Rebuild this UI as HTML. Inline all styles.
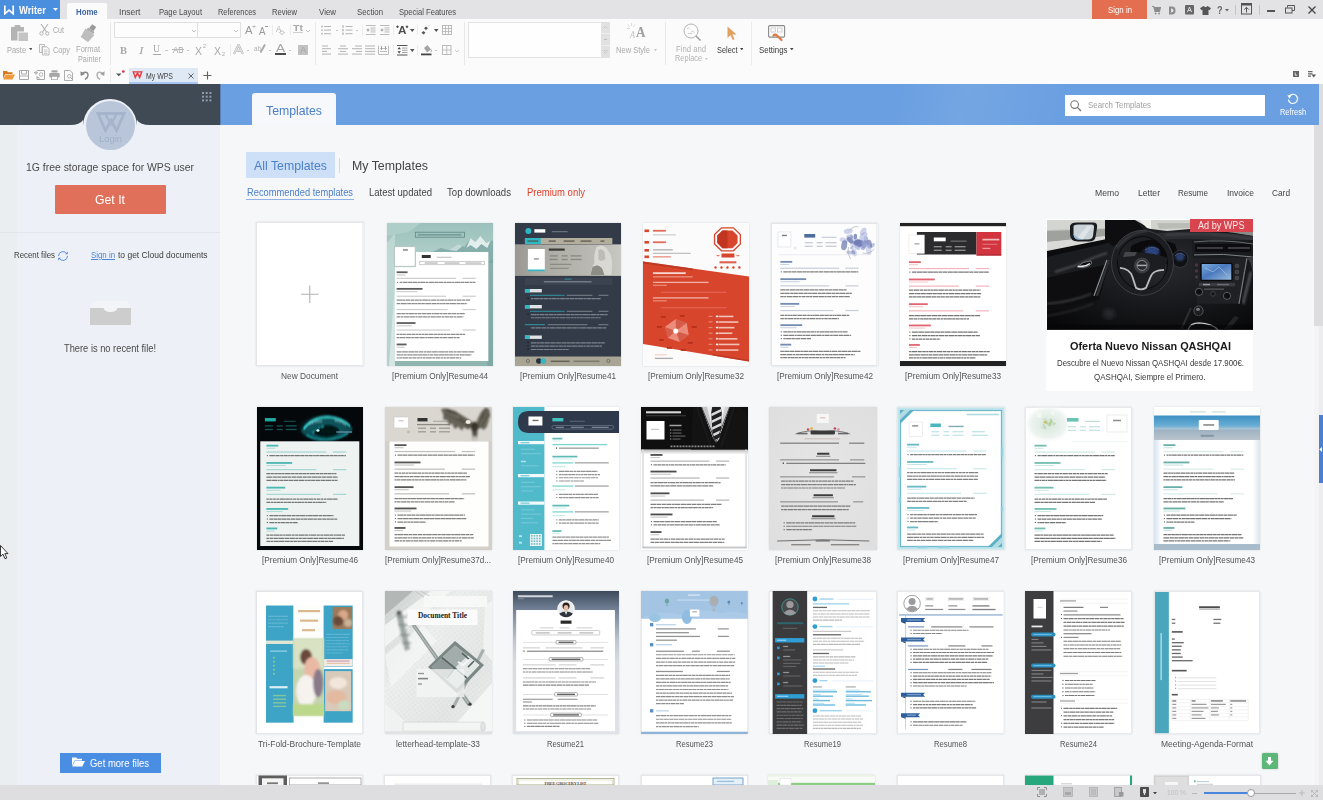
<!DOCTYPE html>
<html><head><meta charset="utf-8"><title>WPS Writer - My WPS</title>
<style>
html,body{margin:0;padding:0;}
body{width:1323px;height:800px;overflow:hidden;position:relative;background:#f6f7f9;font-family:"Liberation Sans",sans-serif;}
.b{position:absolute;display:block;}
.t{position:absolute;white-space:nowrap;transform-origin:0 50%;display:block;}
.th{position:absolute;display:block;overflow:hidden;}
</style></head>
<body>
<svg width="0" height="0" style="position:absolute"><defs><filter id="tb" x="-2%" y="-2%" width="104%" height="104%"><feGaussianBlur stdDeviation="0.8"/></filter></defs></svg>
<div class="b" style="left:0px;top:84px;width:220px;height:701px;background:#edf0f6;"></div>
<div class="b" style="left:0px;top:84px;width:17px;height:701px;background:#ebeef0;"></div>
<div class="b" style="left:0px;top:84px;width:221px;height:41px;background:#3f4a54;"></div>
<div class="b" style="left:83px;top:98.5px;width:54px;height:54px;background:#edf0f6;border-radius:50%;"></div>
<svg class="b" style="left:70px;top:112px;" width="80" height="14" viewBox="0 0 80 14"><path d="M0 13Q10 13 13 8V14H0Z M80 13Q70 13 67 8V14H80Z" fill="#edf0f6"/></svg>
<div class="b" style="left:85.5px;top:101px;width:49px;height:49px;background:#b9c6da;border-radius:50%;"></div>
<svg class="b" style="left:95.5px;top:111.5px;" width="30" height="21" viewBox="0 0 30 21"><path d="M2 1.5H28L20.5 18.5L15 8.5L9.5 18.5Z" fill="none" stroke="#a6b4cb" stroke-width="2.8" stroke-linejoin="miter"/><path d="M9 1.5L15 12L21 1.5" fill="none" stroke="#a6b4cb" stroke-width="2.4"/></svg>
<span class="t" style="left:98.5px;top:134.2px;font-size:9px;line-height:10.8px;color:#9fafc8;transform:scaleX(1.045);">Login</span>
<svg class="b" style="left:202px;top:91.5px;" width="10" height="10" viewBox="0 0 10 10"><rect x="0.0" y="0.0" width="2" height="2" fill="#8f9ba8"/><rect x="0.0" y="3.7" width="2" height="2" fill="#8f9ba8"/><rect x="0.0" y="7.4" width="2" height="2" fill="#8f9ba8"/><rect x="3.7" y="0.0" width="2" height="2" fill="#8f9ba8"/><rect x="3.7" y="3.7" width="2" height="2" fill="#8f9ba8"/><rect x="3.7" y="7.4" width="2" height="2" fill="#8f9ba8"/><rect x="7.4" y="0.0" width="2" height="2" fill="#8f9ba8"/><rect x="7.4" y="3.7" width="2" height="2" fill="#8f9ba8"/><rect x="7.4" y="7.4" width="2" height="2" fill="#8f9ba8"/></svg>
<span class="t" style="left:26.0px;top:161.2px;font-size:11.5px;line-height:13.8px;color:#4a4a4a;transform:scaleX(0.906);">1G free storage space for WPS user</span>
<div class="b" style="left:54.5px;top:184.5px;width:111.5px;height:29px;background:#e0705a;border-radius:1px;"></div>
<span class="t" style="left:95.0px;top:191.8px;font-size:13px;line-height:15.6px;color:#fff;transform:scaleX(0.944);">Get It</span>
<div class="b" style="left:0px;top:232px;width:220px;height:1px;background:#e2e5ea;"></div>
<span class="t" style="left:14.0px;top:250.2px;font-size:9px;line-height:10.8px;color:#3c3c3c;transform:scaleX(0.872);">Recent files</span>
<svg class="b" style="left:57px;top:249.5px;" width="12" height="12" viewBox="0 0 12 12"><path d="M1.5 6A4.5 4.5 0 0 1 10 4" fill="none" stroke="#5a8fe0" stroke-width="0.95"/><path d="M10.5 6A4.5 4.5 0 0 1 2 8" fill="none" stroke="#5a8fe0" stroke-width="0.95"/><path d="M8 4.2H10.8V1.5Z M4 7.8H1.2V10.5Z" fill="#5a8fe0"/></svg>
<span class="t" style="left:91.0px;top:250.2px;font-size:9px;line-height:10.8px;color:#4a86dc;transform:scaleX(0.872);text-decoration:underline;">Sign in</span>
<span class="t" style="left:117.5px;top:250.2px;font-size:9px;line-height:10.8px;color:#3c3c3c;transform:scaleX(0.942);">to get Cloud documents</span>
<svg class="b" style="left:90px;top:301px;" width="41" height="24" viewBox="0 0 41 24"><path d="M3.5 0H37.5L41 7V24H0V7Z" fill="#f3f4f7"/><path d="M0 7H13.5Q14.5 11 20.5 11Q26.5 11 27.5 7H41V24H0Z" fill="#cdcdcd"/></svg>
<span class="t" style="left:64.0px;top:342.6px;font-size:10px;line-height:12.0px;color:#4a4a4a;transform:scaleX(0.930);">There is no recent file!</span>
<div class="b" style="left:59.5px;top:752.5px;width:101.5px;height:20px;background:#4a8ee4;"></div>
<svg class="b" style="left:72px;top:757px;" width="13" height="10" viewBox="0 0 13 10"><path d="M0 0.5H4.3L5.3 1.7H10V3.5H2.4L0 9Z" fill="#fff"/><path d="M2.8 4H13L10.3 9.5H0.2Z" fill="#fff"/></svg>
<span class="t" style="left:90.0px;top:757.6px;font-size:10px;line-height:12.0px;color:#fff;transform:scaleX(0.948);">Get more files</span>
<svg class="b" style="left:0px;top:545px;" width="9" height="15" viewBox="0 0 9 15"><path d="M0.5 0.5V11.5L3 9.2L5 13.8L6.8 13L4.8 8.6H8Z" fill="#fff" stroke="#222" stroke-width="0.9"/></svg>
<div class="b" style="left:221px;top:84px;width:1098px;height:41px;background:#6a9fe1;"></div>
<div class="b" style="left:220px;top:84px;width:1px;height:41px;background:#5880b4;"></div>
<div class="b" style="left:900px;top:84px;width:160px;height:41px;background:linear-gradient(100deg,rgba(255,255,255,0) 0%,rgba(255,255,255,0.07) 40%,rgba(255,255,255,0.05) 60%,rgba(255,255,255,0) 100%);"></div>
<div class="b" style="left:252px;top:92.5px;width:83.5px;height:32.5px;background:#f6f8fb;border-radius:3px 3px 0 0;"></div>
<span class="t" style="left:266.0px;top:102.8px;font-size:13px;line-height:15.6px;color:#4a7fca;transform:scaleX(0.945);">Templates</span>
<div class="b" style="left:1065px;top:95px;width:200px;height:20.5px;background:#fff;"></div>
<svg class="b" style="left:1069.5px;top:99.5px;" width="12" height="12" viewBox="0 0 12 12"><circle cx="4.6" cy="4.6" r="3.8" fill="none" stroke="#777" stroke-width="1.1"/><path d="M7.4 7.4L11 11" stroke="#777" stroke-width="1.3"/></svg>
<span class="t" style="left:1088.0px;top:99.7px;font-size:9px;line-height:10.8px;color:#a0a0a0;transform:scaleX(0.877);">Search Templates</span>
<svg class="b" style="left:1287px;top:92.5px;" width="12" height="12" viewBox="0 0 12 12"><path d="M2.2 3.2A4.6 4.6 0 1 1 1.4 6.6" fill="none" stroke="#fff" stroke-width="1.2"/><path d="M0.4 2.2L4.3 2.5L2.5 5.8Z" fill="#fff"/></svg>
<span class="t" style="left:1280.0px;top:106.5px;font-size:8.5px;line-height:10.2px;color:#fff;transform:scaleX(0.874);">Refresh</span>
<div class="b" style="left:245.5px;top:152px;width:89.3px;height:25.8px;background:#cde0f8;"></div>
<span class="t" style="left:254.0px;top:157.5px;font-size:13.5px;line-height:16.2px;color:#4a7fca;transform:scaleX(0.912);">All Templates</span>
<div class="b" style="left:339px;top:158px;width:1px;height:15px;background:#d8d8dc;"></div>
<span class="t" style="left:352.0px;top:157.5px;font-size:13.5px;line-height:16.2px;color:#444;transform:scaleX(0.915);">My Templates</span>
<span class="t" style="left:247.0px;top:186.6px;font-size:10px;line-height:12.0px;color:#4a7fca;transform:scaleX(0.930);">Recommended templates</span>
<div class="b" style="left:246px;top:198.5px;width:108px;height:1px;background:#8fb2e6;"></div>
<span class="t" style="left:369.0px;top:186.6px;font-size:10px;line-height:12.0px;color:#444;transform:scaleX(0.952);">Latest updated</span>
<span class="t" style="left:447.0px;top:186.6px;font-size:10px;line-height:12.0px;color:#444;transform:scaleX(0.959);">Top downloads</span>
<span class="t" style="left:527.0px;top:186.6px;font-size:10px;line-height:12.0px;color:#e0402a;transform:scaleX(0.949);">Premium only</span>
<span class="t" style="left:1095.0px;top:186.9px;font-size:9.5px;line-height:11.4px;color:#444;transform:scaleX(0.909);">Memo</span>
<span class="t" style="left:1138.0px;top:186.9px;font-size:9.5px;line-height:11.4px;color:#444;transform:scaleX(0.906);">Letter</span>
<span class="t" style="left:1178.0px;top:186.9px;font-size:9.5px;line-height:11.4px;color:#444;transform:scaleX(0.848);">Resume</span>
<span class="t" style="left:1227.0px;top:186.9px;font-size:9.5px;line-height:11.4px;color:#444;transform:scaleX(0.897);">Invoice</span>
<span class="t" style="left:1272.0px;top:186.9px;font-size:9.5px;line-height:11.4px;color:#444;transform:scaleX(0.874);">Card</span>
<svg class="th" style="left:256px;top:222px;box-shadow:0 0 2px rgba(0,0,0,0.13);" width="107.5" height="144" viewBox="0 0 107 143" preserveAspectRatio="none"><rect x="0" y="0" width="107" height="143" fill="#fff" /><rect x="0.5" y="0.5" width="106" height="142" fill="none" stroke="#e6e6e8" stroke-width="1"/><path d="M53.5 63V80.4M44.8 71.7H62.2" stroke="#b4b4b4" stroke-width="1.1"/></svg>
<span class="t" style="left:280.8px;top:369.6px;font-size:9.5px;line-height:11.4px;color:#555;transform:scaleX(0.878);">New Document</span>
<svg class="th" style="left:387px;top:222.5px;box-shadow:0 0 2px rgba(0,0,0,0.13);" width="106.3" height="143" viewBox="0 0 107 143" preserveAspectRatio="none"><defs><linearGradient id="g44" x1="0" y1="0" x2="0" y2="1"><stop offset="0" stop-color="#9cc1bc"/><stop offset="0.3" stop-color="#b4d2cd"/><stop offset="1" stop-color="#8fb5b0"/></linearGradient></defs><rect x="0" y="0" width="107" height="143" fill="url(#g44)" /><path d="M0 20L8 10V143H0Z" fill="#c6ddd9" opacity="0.7"/><path d="M2 143L8 60V143Z" fill="#e6f0ee" opacity="0.7"/><path d="M34 0L22 9L0 13V0Z" fill="#b5d3ce" opacity="0.7"/><path d="M44 30L54 25L62 27L72 21L78 24L84 15L89 19L94 13L100 20L107 17V40H44Z" fill="#86aeaa"/><path d="M84 15L89 19L94 13L100 20L104 18L101 25L95 21L90 26L84 22L80 25Z" fill="#e2eeec"/><path d="M62 27L72 21L76 23L70 28Z" fill="#c3d9d6"/><path d="M101 40L107 36V143H101Z" fill="#7aa3a0" opacity="0.75"/><rect x="28.5" y="9.2" width="49.5" height="5" fill="none" stroke="#5d8783" stroke-width="0.8"/><rect x="31" y="10.95" width="44" height="1.7" fill="#5d8783" opacity="0.62"/><rect x="8" y="29" width="94" height="109" fill="#fff" /><rect x="7.5" y="23.5" width="21" height="20" fill="#fff" stroke="#b9c6c4" stroke-width="1.2"/><rect x="16" y="26.25" width="5" height="1.4" fill="#444" opacity="0.71"/><rect x="35" y="32" width="9" height="3" fill="#333" /><rect x="50" y="33.75" width="15" height="1.1" fill="#333" opacity="0.3"/><rect x="33" y="38.2" width="65" height="3.6" fill="none" stroke="#999" stroke-width="0.5"/><rect x="38" y="39.45" width="13" height="1.2" fill="#888" opacity="0.64"/><rect x="58" y="39.45" width="15" height="1.2" fill="#888" opacity="0.64"/><rect x="79" y="39.45" width="16" height="1.2" fill="#888" opacity="0.64"/><rect x="9.7" y="48.35" width="11" height="1.8" fill="#333" opacity="0.79"/><rect x="9.7" y="51.55" width="8.8" height="1" fill="#333" opacity="0.28"/><rect x="9.7" y="54.75" width="59.76" height="1.2" fill="#b0b0b0" opacity="0.64"/><rect x="76.1" y="54.75" width="13.28" height="1.2" fill="#b0b0b0" opacity="0.64"/><path d="M12.7 59.4h76.36" stroke="#555" stroke-width="1.25" opacity="0.67" stroke-dasharray="2.5 0.5 5.1 0.4 4.0 0.4 4.6 0.5 2.4 0.3 5.3 0.4"/><rect x="10.1" y="58.8" width="1.1" height="1.1" fill="#555" opacity="0.8"/><rect x="9.7" y="64.95" width="26" height="1.8" fill="#333" opacity="0.79"/><rect x="9.7" y="68.15" width="20.8" height="1" fill="#333" opacity="0.28"/><rect x="9.7" y="72.65" width="49.8" height="1.2" fill="#b0b0b0" opacity="0.64"/><rect x="76.1" y="72.65" width="13.28" height="1.2" fill="#b0b0b0" opacity="0.64"/><path d="M9.7 77.2h74.37" stroke="#555" stroke-width="1.25" opacity="0.67" stroke-dasharray="5.8 0.3 2.3 0.5 4.9 0.5 3.2 0.5 4.4 0.4 2.6 0.4"/><path d="M9.7 80.5h70.97" stroke="#555" stroke-width="1.25" opacity="0.67" stroke-dasharray="3.6 0.5 6.0 0.5 4.2 0.4 3.1 0.3 2.1 0.4 3.3 0.4"/><rect x="9.7" y="85.95" width="51.46" height="1.2" fill="#b0b0b0" opacity="0.64"/><rect x="76.1" y="85.95" width="13.28" height="1.2" fill="#b0b0b0" opacity="0.64"/><path d="M9.7 90.5h69.01" stroke="#555" stroke-width="1.25" opacity="0.67" stroke-dasharray="4.2 0.4 4.4 0.5 2.3 0.3 5.3 0.4 2.9 0.5 3.9 0.5"/><path d="M9.7 93.8h67.23" stroke="#555" stroke-width="1.25" opacity="0.67" stroke-dasharray="3.9 0.5 2.6 0.5 5.5 0.4 5.0 0.5 2.3 0.5 4.4 0.4"/><rect x="9.7" y="99.15" width="19" height="1.8" fill="#333" opacity="0.79"/><rect x="9.7" y="102.35" width="15.2" height="1" fill="#333" opacity="0.28"/><rect x="9.7" y="106.45" width="53.95" height="1.2" fill="#b0b0b0" opacity="0.64"/><rect x="76.1" y="106.45" width="13.28" height="1.2" fill="#b0b0b0" opacity="0.64"/><path d="M9.7 111.4h68.99" stroke="#555" stroke-width="1.25" opacity="0.67" stroke-dasharray="2.4 0.4 2.6 0.3 3.6 0.5 5.2 0.5 2.9 0.4 3.1 0.3"/><path d="M9.7 114.7h63.49" stroke="#555" stroke-width="1.25" opacity="0.67" stroke-dasharray="2.4 0.4 5.7 0.5 5.2 0.5 2.8 0.4 4.5 0.5 5.4 0.5"/><rect x="9.7" y="120.55" width="10" height="1.8" fill="#333" opacity="0.79"/><rect x="9.7" y="123.75" width="8" height="1" fill="#333" opacity="0.28"/><path d="M9.7 128.9h78.27" stroke="#555" stroke-width="1.25" opacity="0.67" stroke-dasharray="5.0 0.5 5.8 0.5 5.7 0.3 3.9 0.5 4.6 0.5 2.5 0.4"/><path d="M9.7 131.9h75.21" stroke="#555" stroke-width="1.25" opacity="0.67" stroke-dasharray="4.2 0.4 2.1 0.4 3.1 0.5 5.1 0.3 5.2 0.3 4.5 0.3"/><path d="M9.7 134.9h65.07" stroke="#555" stroke-width="1.25" opacity="0.67" stroke-dasharray="2.0 0.5 2.8 0.4 5.9 0.5 3.2 0.5 4.2 0.5 2.8 0.5"/></svg>
<span class="t" style="left:392.3px;top:369.6px;font-size:9.5px;line-height:11.4px;color:#555;transform:scaleX(0.862);">[Premium Only]Resume44</span>
<svg class="th" style="left:515px;top:222.5px;box-shadow:0 0 2px rgba(0,0,0,0.13);" width="106.3" height="143" viewBox="0 0 107 143" preserveAspectRatio="none"><defs><linearGradient id="h41" x1="0" y1="0" x2="1" y2="0"><stop offset="0" stop-color="#8a8984" stop-opacity="0.6"/><stop offset="0.5" stop-color="#bdbcb6" stop-opacity="0.3"/><stop offset="1" stop-color="#d4d4d0" stop-opacity="0.7"/></linearGradient></defs><rect x="0" y="0" width="107" height="143" fill="#343b48" /><circle cx="13.5" cy="8" r="3" fill="#2fb7c4"/><rect x="19.5" y="6.2" width="11" height="3.4" fill="#fff" /><rect x="37" y="8.05" width="16" height="1.2" fill="#8a919c" opacity="0.64"/><rect x="10" y="15" width="88" height="6" fill="#b3ae9c" /><rect x="10" y="15" width="16" height="6" fill="#2fb7c4" /><rect x="12.5" y="17.35" width="11" height="1.5" fill="#4a4a44" opacity="0.73"/><rect x="34" y="17.35" width="7" height="1.5" fill="#4a4a44" opacity="0.73"/><rect x="49" y="17.35" width="11" height="1.5" fill="#4a4a44" opacity="0.73"/><rect x="66" y="17.35" width="11" height="1.5" fill="#4a4a44" opacity="0.73"/><rect x="86" y="17.35" width="4" height="1.5" fill="#4a4a44" opacity="0.73"/><rect x="0" y="21.5" width="107" height="31.3" fill="#aeada6" /><rect x="0" y="21.5" width="107" height="31.3" fill="url(#h41)"/><rect x="13" y="26" width="17" height="21.5" fill="#fff" /><rect x="13" y="46.5" width="17" height="1.6" fill="#2fb7c4" /><rect x="19" y="35.25" width="5" height="1.3" fill="#555" opacity="0.68"/><rect x="34" y="25.5" width="16" height="2.2" fill="#3a3a36" /><rect x="35" y="32.25" width="8" height="1.3" fill="#5a5850" opacity="0.47"/><rect x="47" y="32.25" width="6" height="1.3" fill="#5a5850" opacity="0.47"/><rect x="56" y="32.25" width="11" height="1.3" fill="#5a5850" opacity="0.47"/><rect x="35" y="35.85" width="8" height="1.3" fill="#5a5850" opacity="0.47"/><rect x="47" y="35.85" width="6" height="1.3" fill="#5a5850" opacity="0.47"/><rect x="56" y="35.85" width="11" height="1.3" fill="#5a5850" opacity="0.47"/><rect x="35" y="40.75" width="22" height="1.2" fill="#77756a" opacity="0.64"/><rect x="35" y="44.75" width="19" height="1.2" fill="#77756a" opacity="0.64"/><path d="M82 24Q88 21 92 25L96 31Q99 38 97 52H76Q77 44 80 40Q79 32 82 24Z" fill="#d9d9d4"/><path d="M84 27Q88 25 90 29L91 36Q86 40 84 36Z" fill="#bdbdb6"/><path d="M78 44Q84 40 88 46L90 52H76Z" fill="#8d8d86"/><rect x="10" y="55" width="88" height="7" fill="#3b4350" /><rect x="29" y="58.15" width="48" height="1.3" fill="#9aa1ab" opacity="0.68"/><rect x="50" y="55.55" width="7" height="1.1" fill="#2fb7c4" opacity="0.6"/><rect x="10" y="66" width="17" height="3.4" fill="#dfe3e6" /><rect x="10" y="66" width="5" height="3.4" fill="#2fb7c4" /><rect x="15" y="71.75" width="35" height="1.2" fill="#2fb7c4" opacity="0.58"/><rect x="52" y="71.75" width="26" height="1.2" fill="#8d949e" opacity="0.64"/><rect x="84" y="71.75" width="10" height="1.2" fill="#8d949e" opacity="0.64"/><rect x="12.5" y="74.6" width="1.4" height="1.4" fill="#1e232c" /><path d="M16 75.55h70.2" stroke="#a4abb4" stroke-width="1.15" opacity="0.64" stroke-dasharray="2.5 0.5 5.1 0.4 4.0 0.4 4.6 0.5 2.4 0.3 5.3 0.4"/><rect x="10" y="82" width="17" height="3.4" fill="#dfe3e6" /><rect x="10" y="82" width="5" height="3.4" fill="#2fb7c4" /><rect x="15" y="87.75" width="35" height="1.2" fill="#2fb7c4" opacity="0.58"/><rect x="52" y="87.75" width="26" height="1.2" fill="#8d949e" opacity="0.64"/><rect x="84" y="87.75" width="10" height="1.2" fill="#8d949e" opacity="0.64"/><rect x="12.5" y="90.6" width="1.4" height="1.4" fill="#1e232c" /><path d="M16 91.55h77.66" stroke="#a4abb4" stroke-width="1.15" opacity="0.64" stroke-dasharray="5.8 0.3 2.3 0.5 4.9 0.5 3.2 0.5 4.4 0.4 2.6 0.4"/><path d="M16 94.75h70.2" stroke="#a4abb4" stroke-width="1.15" opacity="0.64" stroke-dasharray="3.6 0.5 6.0 0.5 4.2 0.4 3.1 0.3 2.1 0.4 3.3 0.4"/><rect x="10" y="101.05" width="20" height="1.2" fill="#2fb7c4" opacity="0.64"/><rect x="33" y="101.05" width="40" height="1.2" fill="#8d949e" opacity="0.64"/><rect x="84" y="101.05" width="10" height="1.2" fill="#8d949e" opacity="0.64"/><path d="M16 104.85h76" stroke="#a4abb4" stroke-width="1.15" opacity="0.64" stroke-dasharray="4.5 0.5 5.2 0.5 5.0 0.5 2.1 0.4 5.8 0.5 5.6 0.3"/><rect x="10" y="112.5" width="17" height="3.4" fill="#dfe3e6" /><rect x="10" y="112.5" width="5" height="3.4" fill="#2fb7c4" /><path d="M16 119.85h74.43" stroke="#a4abb4" stroke-width="1.15" opacity="0.64" stroke-dasharray="5.3 0.4 3.0 0.3 4.7 0.4 5.0 0.4 5.1 0.4 5.2 0.5"/><path d="M16 123.15h71.55" stroke="#a4abb4" stroke-width="1.15" opacity="0.64" stroke-dasharray="4.2 0.5 2.8 0.4 5.2 0.4 5.2 0.5 5.4 0.4 2.4 0.5"/><path d="M16 126.45h38" stroke="#a4abb4" stroke-width="1.15" opacity="0.64" stroke-dasharray="5.2 0.4 2.4 0.3 4.5 0.4 5.8 0.4 2.8 0.5 3.4 0.5"/><rect x="12.5" y="118.7" width="1.4" height="1.4" fill="#1e232c" /><rect x="12.5" y="122" width="1.4" height="1.4" fill="#1e232c" /><rect x="12.5" y="125.3" width="1.4" height="1.4" fill="#1e232c" /><rect x="0" y="133.5" width="107" height="9.5" fill="#a9a594" /><circle cx="13" cy="138" r="1.6" fill="none" stroke="#55534a" stroke-width="0.6"/><circle cx="24" cy="138" r="2.8" fill="#2b313c"/><circle cx="28.5" cy="138" r="2.8" fill="#2fb7c4"/><rect x="36" y="137.55" width="19" height="1.5" fill="#4e4c44" opacity="0.73"/><rect x="59" y="137.55" width="26" height="1.5" fill="#6a685e" opacity="0.73"/><circle cx="94" cy="138" r="1.6" fill="none" stroke="#55534a" stroke-width="0.6"/></svg>
<span class="t" style="left:520.3px;top:369.6px;font-size:9.5px;line-height:11.4px;color:#555;transform:scaleX(0.862);">[Premium Only]Resume41</span>
<svg class="th" style="left:643px;top:222.5px;box-shadow:0 0 2px rgba(0,0,0,0.13);" width="106.3" height="143" viewBox="0 0 107 143" preserveAspectRatio="none"><rect x="0" y="0" width="107" height="143" fill="#fbfbfb" /><path d="M0 38.5L107 53.5V138.5L0 121Z" fill="#d8452d"/><path d="M0 38.5L50 45.5V47.5L0 40.5Z" fill="#b8361f" opacity="0.8"/><path d="M70 131L107 137V138.5L70 132.5Z" fill="#b8361f" opacity="0.8"/><path d="M79 4.8H91L98 11.5V21L91 27.8H79L72 21V11.5Z" fill="#fbfbfb" stroke="#d9442c" stroke-width="1.3"/><path d="M80 7.5H90L95.2 12.6V20L90 25.2H80L74.8 20V12.6Z" fill="#d9442c"/><path d="M85 7.5V25.2H80L74.8 20V12.6L80 7.5Z" fill="#c23520"/><rect x="79" y="30.5" width="13" height="4" fill="#d9442c" /><rect x="74" y="31.95" width="3" height="1.3" fill="#d9442c" opacity="0.68"/><rect x="94" y="31.95" width="3" height="1.3" fill="#d9442c" opacity="0.68"/><rect x="77" y="38.25" width="17" height="2.1" fill="#d9442c" opacity="0.84"/><circle cx="73" cy="44.5" r="1.2" fill="#d9442c"/><circle cx="79" cy="44.5" r="1.2" fill="#d9442c"/><circle cx="85" cy="44.5" r="1.2" fill="#d9442c"/><circle cx="91" cy="44.5" r="1.2" fill="#d9442c"/><circle cx="97" cy="44.5" r="1.2" fill="#d9442c"/><rect x="1.5" y="6.5" width="4.5" height="2.6" fill="#d9442c" /><rect x="10" y="6.85" width="13" height="1.8" fill="#d9442c" opacity="0.79"/><rect x="1.5" y="18" width="4.5" height="2.6" fill="#d9442c" /><rect x="10" y="18.35" width="13" height="1.8" fill="#d9442c" opacity="0.79"/><rect x="1.5" y="26" width="4.5" height="2.6" fill="#d9442c" /><rect x="1.5" y="32.5" width="4.5" height="2.6" fill="#d9442c" /><rect x="10" y="11.25" width="23" height="1.2" fill="#b0b0b0" opacity="0.64"/><rect x="10" y="26.25" width="20" height="1.2" fill="#777" opacity="0.64"/><rect x="10" y="29.75" width="38" height="1.2" fill="#999" opacity="0.64"/><rect x="10" y="33.25" width="18" height="1.2" fill="#d9442c" opacity="0.64"/><rect x="10" y="49.25" width="33" height="1.8" fill="#fff" opacity="0.79"/><rect x="10" y="53.25" width="40" height="1.2" fill="#f5c5bb" opacity="0.64"/><rect x="10" y="58.75" width="56" height="1.3" fill="#fbe3de" opacity="0.68"/><rect x="10" y="61.75" width="14" height="1.2" fill="#f3b5a8" opacity="0.64"/><rect x="18" y="68.75" width="66" height="1.1" fill="#e8826f" opacity="0.6"/><rect x="10" y="74.25" width="56" height="1.3" fill="#fbe3de" opacity="0.68"/><rect x="10" y="77.25" width="14" height="1.2" fill="#f3b5a8" opacity="0.64"/><rect x="18" y="84.25" width="66" height="1.1" fill="#e8826f" opacity="0.6"/><path d="M33 96L44 100L46 112L37 119L25 115L22 104Z" fill="#ee9484" opacity="0.9"/><path d="M33 96L33 108L44 100Z M33 108L46 112L37 119Z M33 108L22 104L25 115Z" fill="#c23520" opacity="0.55"/><circle cx="33" cy="108" r="2.6" fill="#fff"/><rect x="18" y="93" width="5" height="1.8" fill="#b52f1b" /><rect x="37" y="92" width="5" height="1.8" fill="#b52f1b" /><rect x="14" y="103" width="5" height="1.8" fill="#b52f1b" /><rect x="49" y="103" width="5" height="1.8" fill="#b52f1b" /><rect x="16" y="116" width="5" height="1.8" fill="#b52f1b" /><rect x="45" y="119" width="5" height="1.8" fill="#b52f1b" /><rect x="24" y="124" width="5" height="1.8" fill="#b52f1b" /><rect x="38" y="126" width="5" height="1.8" fill="#b52f1b" /><rect x="66" y="92.75" width="4" height="1.2" fill="#f1a799" opacity="0.64"/><circle cx="74.5" cy="93.4" r="1.3" fill="#fff" stroke="#b52f1b" stroke-width="0.5"/><rect x="76" y="92.65" width="15" height="1.6" fill="#fbe9e5" opacity="0.76"/><rect x="66" y="98.35" width="4" height="1.2" fill="#f1a799" opacity="0.64"/><circle cx="74.5" cy="99.0" r="1.3" fill="#fff" stroke="#b52f1b" stroke-width="0.5"/><rect x="76" y="98.25" width="20" height="1.6" fill="#fbe9e5" opacity="0.76"/><rect x="66" y="103.95" width="4" height="1.2" fill="#f1a799" opacity="0.64"/><circle cx="74.5" cy="104.60000000000001" r="1.3" fill="#fff" stroke="#b52f1b" stroke-width="0.5"/><rect x="76" y="103.85" width="16" height="1.6" fill="#fbe9e5" opacity="0.76"/><rect x="66" y="109.55" width="4" height="1.2" fill="#f1a799" opacity="0.64"/><circle cx="74.5" cy="110.2" r="1.3" fill="#fff" stroke="#b52f1b" stroke-width="0.5"/><rect x="76" y="109.45" width="14" height="1.6" fill="#fbe9e5" opacity="0.76"/><rect x="66" y="115.15" width="4" height="1.2" fill="#f1a799" opacity="0.64"/><circle cx="74.5" cy="115.80000000000001" r="1.3" fill="#fff" stroke="#b52f1b" stroke-width="0.5"/><rect x="76" y="115.05" width="19" height="1.6" fill="#fbe9e5" opacity="0.76"/><rect x="66" y="120.75" width="4" height="1.2" fill="#f1a799" opacity="0.64"/><circle cx="74.5" cy="121.4" r="1.3" fill="#fff" stroke="#b52f1b" stroke-width="0.5"/><rect x="76" y="120.65" width="21" height="1.6" fill="#fbe9e5" opacity="0.76"/><rect x="66" y="126.35" width="4" height="1.2" fill="#f1a799" opacity="0.64"/><circle cx="74.5" cy="127.0" r="1.3" fill="#fff" stroke="#b52f1b" stroke-width="0.5"/><rect x="76" y="126.25" width="20" height="1.6" fill="#fbe9e5" opacity="0.76"/><rect x="12" y="131.25" width="12" height="1.2" fill="#f3b5a8" opacity="0.64"/><rect x="12" y="134.75" width="18" height="1.3" fill="#888" opacity="0.68"/></svg>
<span class="t" style="left:648.3px;top:369.6px;font-size:9.5px;line-height:11.4px;color:#555;transform:scaleX(0.862);">[Premium Only]Resume32</span>
<svg class="th" style="left:771.3px;top:222.5px;box-shadow:0 0 2px rgba(0,0,0,0.13);" width="106.3" height="143" viewBox="0 0 107 143" preserveAspectRatio="none"><rect x="0" y="0" width="107" height="143" fill="#fdfdfe" /><rect x="0.5" y="0.5" width="106" height="142" fill="none" stroke="#e3e5ea" stroke-width="1"/><ellipse cx="86.9" cy="20.8" rx="4.0" ry="2.4" fill="#8f9bd0" opacity="0.72" transform="rotate(24 86.9 20.8)"/><ellipse cx="87.3" cy="19.6" rx="3.6" ry="2.2" fill="#8f9bd0" opacity="0.39" transform="rotate(107 87.3 19.6)"/><ellipse cx="89.4" cy="19.5" rx="3.3" ry="2.0" fill="#6a77b0" opacity="0.41" transform="rotate(57 89.4 19.5)"/><ellipse cx="81.2" cy="13.2" rx="2.2" ry="1.3" fill="#6a77b0" opacity="0.53" transform="rotate(56 81.2 13.2)"/><ellipse cx="102.0" cy="22.4" rx="2.9" ry="1.8" fill="#8f9bd0" opacity="0.59" transform="rotate(146 102.0 22.4)"/><ellipse cx="83.0" cy="29.4" rx="2.6" ry="1.6" fill="#6a77b0" opacity="0.61" transform="rotate(48 83.0 29.4)"/><ellipse cx="81.5" cy="24.4" rx="2.2" ry="1.3" fill="#8f9bd0" opacity="0.63" transform="rotate(127 81.5 24.4)"/><ellipse cx="84.9" cy="13.7" rx="3.0" ry="1.8" fill="#6a77b0" opacity="0.77" transform="rotate(92 84.9 13.7)"/><ellipse cx="83.9" cy="29.3" rx="4.2" ry="2.5" fill="#8f9bd0" opacity="0.39" transform="rotate(76 83.9 29.3)"/><ellipse cx="73.3" cy="17.1" rx="4.3" ry="2.6" fill="#b7bfe4" opacity="0.62" transform="rotate(18 73.3 17.1)"/><ellipse cx="93.2" cy="22.8" rx="4.4" ry="2.6" fill="#8f9bd0" opacity="0.77" transform="rotate(107 93.2 22.8)"/><ellipse cx="99.0" cy="21.2" rx="4.4" ry="2.6" fill="#6a77b0" opacity="0.71" transform="rotate(80 99.0 21.2)"/><ellipse cx="84.8" cy="23.0" rx="3.6" ry="2.1" fill="#b7bfe4" opacity="0.38" transform="rotate(23 84.8 23.0)"/><ellipse cx="95.6" cy="16.8" rx="4.1" ry="2.4" fill="#8f9bd0" opacity="0.68" transform="rotate(79 95.6 16.8)"/><ellipse cx="77.8" cy="8.2" rx="4.6" ry="2.7" fill="#b7bfe4" opacity="0.67" transform="rotate(171 77.8 8.2)"/><ellipse cx="78.9" cy="29.5" rx="3.1" ry="1.9" fill="#6a77b0" opacity="0.4" transform="rotate(15 78.9 29.5)"/><ellipse cx="89.0" cy="22.8" rx="4.3" ry="2.6" fill="#b7bfe4" opacity="0.53" transform="rotate(127 89.0 22.8)"/><ellipse cx="94.7" cy="22.0" rx="3.7" ry="2.2" fill="#8f9bd0" opacity="0.72" transform="rotate(140 94.7 22.0)"/><ellipse cx="86.8" cy="24.6" rx="3.1" ry="1.9" fill="#b7bfe4" opacity="0.78" transform="rotate(38 86.8 24.6)"/><ellipse cx="90.2" cy="20.0" rx="4.1" ry="2.4" fill="#8f9bd0" opacity="0.57" transform="rotate(150 90.2 20.0)"/><ellipse cx="90.0" cy="22.5" rx="2.5" ry="1.5" fill="#6a77b0" opacity="0.52" transform="rotate(144 90.0 22.5)"/><ellipse cx="87.1" cy="20.6" rx="4.7" ry="2.8" fill="#6a77b0" opacity="0.64" transform="rotate(13 87.1 20.6)"/><ellipse cx="73.7" cy="22.2" rx="5.0" ry="3.0" fill="#6a77b0" opacity="0.71" transform="rotate(100 73.7 22.2)"/><ellipse cx="82.6" cy="22.2" rx="3.5" ry="2.1" fill="#b7bfe4" opacity="0.38" transform="rotate(17 82.6 22.2)"/><ellipse cx="95.5" cy="18.4" rx="2.4" ry="1.4" fill="#6a77b0" opacity="0.37" transform="rotate(0 95.5 18.4)"/><ellipse cx="79.7" cy="16.0" rx="4.9" ry="3.0" fill="#6a77b0" opacity="0.36" transform="rotate(53 79.7 16.0)"/><ellipse cx="86.1" cy="17.7" rx="2.8" ry="1.7" fill="#b7bfe4" opacity="0.62" transform="rotate(121 86.1 17.7)"/><ellipse cx="98.3" cy="27.0" rx="5.1" ry="3.0" fill="#b7bfe4" opacity="0.57" transform="rotate(79 98.3 27.0)"/><ellipse cx="89.5" cy="19.7" rx="3.1" ry="1.9" fill="#b7bfe4" opacity="0.57" transform="rotate(177 89.5 19.7)"/><ellipse cx="88.2" cy="19.3" rx="5.0" ry="3.0" fill="#6a77b0" opacity="0.51" transform="rotate(176 88.2 19.3)"/><ellipse cx="87.6" cy="18.9" rx="3.7" ry="2.2" fill="#6a77b0" opacity="0.74" transform="rotate(178 87.6 18.9)"/><ellipse cx="93.0" cy="13.2" rx="4.8" ry="2.9" fill="#b7bfe4" opacity="0.7" transform="rotate(136 93.0 13.2)"/><ellipse cx="79.7" cy="17.2" rx="4.0" ry="2.4" fill="#6a77b0" opacity="0.72" transform="rotate(49 79.7 17.2)"/><ellipse cx="92.8" cy="8.5" rx="4.3" ry="2.6" fill="#8f9bd0" opacity="0.44" transform="rotate(126 92.8 8.5)"/><path d="M78 8Q84 2 88 4M92 30Q98 32 104 26M80 36Q76 30 78 24" stroke="#8a97a0" stroke-width="0.5" fill="none"/><rect x="7" y="9" width="13" height="15" fill="#fff" stroke="#e0e3ea" stroke-width="0.8"/><rect x="11" y="11.75" width="5" height="1.4" fill="#444" opacity="0.71"/><circle cx="24.5" cy="25" r="1" fill="none" stroke="#bbb" stroke-width="0.4"/><rect x="33.5" y="11" width="11" height="3.6" fill="#4e6d99" /><rect x="51" y="13.75" width="15" height="1.1" fill="#9aa6bb" opacity="0.6"/><rect x="34" y="19.05" width="8" height="1.3" fill="#8a93a5" opacity="0.47"/><rect x="46" y="19.05" width="6" height="1.3" fill="#8a93a5" opacity="0.47"/><rect x="55" y="19.05" width="11" height="1.3" fill="#8a93a5" opacity="0.47"/><rect x="34" y="22.65" width="8" height="1.3" fill="#8a93a5" opacity="0.47"/><rect x="46" y="22.65" width="6" height="1.3" fill="#8a93a5" opacity="0.47"/><rect x="55" y="22.65" width="11" height="1.3" fill="#8a93a5" opacity="0.47"/><rect x="8" y="31.25" width="91" height="1" fill="#d8dce4" opacity="0.55"/><rect x="9.4" y="37.95" width="12" height="1.8" fill="#4e6d99" opacity="0.79"/><rect x="9.4" y="40.95" width="9" height="1" fill="#4e6d99" opacity="0.3"/><rect x="9.4" y="44.65" width="59.04" height="1.2" fill="#aab2c2" opacity="0.64"/><rect x="75" y="44.65" width="13.12" height="1.2" fill="#aab2c2" opacity="0.64"/><path d="M12.4 48.9h75.44" stroke="#444" stroke-width="1.25" opacity="0.67" stroke-dasharray="4.6 0.3 3.1 0.4 4.9 0.5 5.6 0.3 3.7 0.3 2.9 0.4"/><rect x="9.8" y="48.3" width="1.1" height="1.1" fill="#444" opacity="0.8"/><rect x="9.4" y="55.25" width="26" height="1.8" fill="#4e6d99" opacity="0.79"/><rect x="9.4" y="58.25" width="19.5" height="1" fill="#4e6d99" opacity="0.3"/><rect x="9.4" y="62.25" width="49.2" height="1.2" fill="#aab2c2" opacity="0.64"/><rect x="75" y="62.25" width="13.12" height="1.2" fill="#aab2c2" opacity="0.64"/><path d="M9.4 66.9h66.7" stroke="#444" stroke-width="1.25" opacity="0.67" stroke-dasharray="4.8 0.3 3.9 0.5 5.2 0.4 4.0 0.3 3.7 0.4 5.4 0.4"/><path d="M9.4 70.25h71.99" stroke="#444" stroke-width="1.25" opacity="0.67" stroke-dasharray="3.7 0.3 5.4 0.5 3.5 0.3 4.0 0.4 5.1 0.4 4.0 0.4"/><path d="M9.4 73.6h70.11" stroke="#444" stroke-width="1.25" opacity="0.67" stroke-dasharray="3.5 0.3 2.2 0.5 5.4 0.4 5.6 0.4 2.4 0.5 4.3 0.5"/><rect x="9.4" y="79.95" width="19" height="1.8" fill="#4e6d99" opacity="0.79"/><rect x="9.4" y="82.95" width="14.25" height="1" fill="#4e6d99" opacity="0.3"/><rect x="9.4" y="86.95" width="53.3" height="1.2" fill="#aab2c2" opacity="0.64"/><rect x="75" y="86.95" width="13.12" height="1.2" fill="#aab2c2" opacity="0.64"/><path d="M9.4 92.3h69.43" stroke="#444" stroke-width="1.25" opacity="0.67" stroke-dasharray="4.2 0.5 2.7 0.4 2.1 0.3 2.0 0.3 4.1 0.5 4.8 0.4"/><path d="M9.4 95.6h59.04" stroke="#444" stroke-width="1.25" opacity="0.67" stroke-dasharray="3.6 0.5 3.3 0.3 5.4 0.5 2.4 0.3 2.4 0.5 2.4 0.5"/><rect x="9.4" y="101.25" width="22" height="1.8" fill="#4e6d99" opacity="0.79"/><rect x="9.4" y="104.25" width="16.5" height="1" fill="#4e6d99" opacity="0.3"/><path d="M12.4 108.9h64.62" stroke="#444" stroke-width="1.25" opacity="0.67" stroke-dasharray="4.0 0.3 3.4 0.3 2.0 0.4 2.5 0.4 5.0 0.3 4.5 0.3"/><rect x="9.8" y="108.3" width="1.1" height="1.1" fill="#444" opacity="0.8"/><path d="M12.4 112.3h68.27" stroke="#444" stroke-width="1.25" opacity="0.67" stroke-dasharray="4.9 0.4 5.4 0.5 2.3 0.4 4.8 0.5 2.7 0.4 5.1 0.5"/><rect x="9.8" y="111.7" width="1.1" height="1.1" fill="#444" opacity="0.8"/><path d="M12.4 115.7h27.88" stroke="#444" stroke-width="1.25" opacity="0.67" stroke-dasharray="2.4 0.3 5.0 0.4 3.5 0.5 5.0 0.5 5.5 0.5 5.2 0.5"/><rect x="9.8" y="115.1" width="1.1" height="1.1" fill="#444" opacity="0.8"/><rect x="9.4" y="120.75" width="11" height="1.8" fill="#4e6d99" opacity="0.79"/><rect x="9.4" y="123.75" width="8.25" height="1" fill="#4e6d99" opacity="0.3"/><path d="M9.4 128.4h81.08" stroke="#444" stroke-width="1.25" opacity="0.67" stroke-dasharray="3.6 0.4 5.4 0.4 4.1 0.4 5.8 0.3 2.3 0.4 5.3 0.5"/><path d="M9.4 131.5h74.91" stroke="#444" stroke-width="1.25" opacity="0.67" stroke-dasharray="5.7 0.4 5.9 0.5 2.4 0.5 3.9 0.3 3.9 0.3 5.0 0.4"/><path d="M9.4 134.6h65.6" stroke="#444" stroke-width="1.25" opacity="0.67" stroke-dasharray="2.4 0.4 4.0 0.5 3.1 0.3 3.4 0.3 3.3 0.5 2.7 0.4"/></svg>
<span class="t" style="left:776.6px;top:369.6px;font-size:9.5px;line-height:11.4px;color:#555;transform:scaleX(0.862);">[Premium Only]Resume42</span>
<svg class="th" style="left:899.5px;top:222.5px;box-shadow:0 0 2px rgba(0,0,0,0.13);" width="106.3" height="143" viewBox="0 0 107 143" preserveAspectRatio="none"><rect x="0" y="0" width="107" height="143" fill="#fff" /><rect x="0" y="0" width="107" height="3.2" fill="#222" /><rect x="0" y="138" width="107" height="5" fill="#222" /><rect x="17" y="9" width="60" height="22.5" fill="#2b2b2e" /><rect x="77" y="9" width="25" height="23.5" fill="#d2353f" /><path d="M77 31.5V32.5H102V31.5Z" fill="#a3222c"/><rect x="9" y="12" width="15.5" height="18.5" fill="#fff" stroke="#ddd" stroke-width="0.5"/><rect x="14.5" y="20.25" width="5" height="1.2" fill="#666" opacity="0.64"/><rect x="34" y="14.5" width="12" height="3.8" fill="#fff" /><rect x="51" y="17.55" width="16" height="1.2" fill="#9a9a9a" opacity="0.64"/><rect x="34" y="23.05" width="8" height="1.3" fill="#d0d0d0" opacity="0.61"/><rect x="46" y="23.05" width="6" height="1.3" fill="#d0d0d0" opacity="0.61"/><rect x="55" y="23.05" width="11" height="1.3" fill="#d0d0d0" opacity="0.61"/><rect x="34" y="26.65" width="8" height="1.3" fill="#d0d0d0" opacity="0.61"/><rect x="46" y="26.65" width="6" height="1.3" fill="#d0d0d0" opacity="0.61"/><rect x="55" y="26.65" width="11" height="1.3" fill="#d0d0d0" opacity="0.61"/><rect x="83" y="15.75" width="17" height="1.7" fill="#fbe1e2" opacity="0.78"/><rect x="83" y="20.75" width="15" height="1.1" fill="#ee9aa0" opacity="0.6"/><rect x="83" y="24.75" width="8" height="1.3" fill="#f6c5c8" opacity="0.68"/><rect x="9" y="38.25" width="12" height="1.8" fill="#d93a4a" opacity="0.79"/><rect x="9" y="41.25" width="9" height="1" fill="#d93a4a" opacity="0.3"/><rect x="9" y="44.95" width="60.48" height="1.2" fill="#e88a94" opacity="0.64"/><rect x="76.2" y="44.95" width="13.44" height="1.2" fill="#e88a94" opacity="0.64"/><path d="M12 49.2h77.28" stroke="#333" stroke-width="1.25" opacity="0.67" stroke-dasharray="4.3 0.5 5.3 0.4 4.6 0.5 5.6 0.3 4.6 0.5 4.0 0.5"/><rect x="9.4" y="48.6" width="1.1" height="1.1" fill="#333" opacity="0.8"/><rect x="9" y="55.55" width="26" height="1.8" fill="#d93a4a" opacity="0.79"/><rect x="9" y="58.55" width="19.5" height="1" fill="#d93a4a" opacity="0.3"/><rect x="9" y="62.55" width="50.4" height="1.2" fill="#e88a94" opacity="0.64"/><rect x="76.2" y="62.55" width="13.44" height="1.2" fill="#e88a94" opacity="0.64"/><path d="M9 67.2h72.04" stroke="#333" stroke-width="1.25" opacity="0.67" stroke-dasharray="4.3 0.5 5.6 0.5 3.5 0.5 3.7 0.4 2.4 0.4 2.6 0.4"/><path d="M9 70.55h72.66" stroke="#333" stroke-width="1.25" opacity="0.67" stroke-dasharray="5.1 0.5 2.3 0.3 3.0 0.4 5.4 0.5 5.7 0.4 4.5 0.4"/><path d="M9 73.9h71.82" stroke="#333" stroke-width="1.25" opacity="0.67" stroke-dasharray="3.3 0.4 4.1 0.5 4.3 0.4 3.7 0.4 5.3 0.4 5.0 0.5"/><rect x="9" y="80.25" width="19" height="1.8" fill="#d93a4a" opacity="0.79"/><rect x="9" y="83.25" width="14.25" height="1" fill="#d93a4a" opacity="0.3"/><rect x="9" y="87.25" width="54.6" height="1.2" fill="#e88a94" opacity="0.64"/><rect x="76.2" y="87.25" width="13.44" height="1.2" fill="#e88a94" opacity="0.64"/><path d="M9 92.6h72.19" stroke="#333" stroke-width="1.25" opacity="0.67" stroke-dasharray="5.0 0.5 5.5 0.4 5.9 0.4 5.0 0.5 5.7 0.4 3.5 0.5"/><path d="M9 95.9h60.48" stroke="#333" stroke-width="1.25" opacity="0.67" stroke-dasharray="4.3 0.5 3.5 0.5 2.0 0.5 3.5 0.3 4.7 0.3 2.9 0.4"/><rect x="9" y="101.55" width="22" height="1.8" fill="#d93a4a" opacity="0.79"/><rect x="9" y="104.55" width="16.5" height="1" fill="#d93a4a" opacity="0.3"/><path d="M12 109.2h66.61" stroke="#333" stroke-width="1.25" opacity="0.67" stroke-dasharray="5.9 0.5 5.7 0.5 5.5 0.3 4.5 0.4 4.9 0.4 4.2 0.4"/><rect x="9.4" y="108.6" width="1.1" height="1.1" fill="#333" opacity="0.8"/><path d="M12 112.6h68.37" stroke="#333" stroke-width="1.25" opacity="0.67" stroke-dasharray="5.3 0.5 3.4 0.5 5.6 0.4 2.5 0.4 5.1 0.4 2.7 0.5"/><rect x="9.4" y="112" width="1.1" height="1.1" fill="#333" opacity="0.8"/><path d="M12 116h28.56" stroke="#333" stroke-width="1.25" opacity="0.67" stroke-dasharray="3.3 0.5 2.7 0.4 3.5 0.5 2.6 0.5 3.7 0.4 2.8 0.4"/><rect x="9.4" y="115.4" width="1.1" height="1.1" fill="#333" opacity="0.8"/><rect x="9" y="121.05" width="11" height="1.8" fill="#d93a4a" opacity="0.79"/><rect x="9" y="124.05" width="8.25" height="1" fill="#d93a4a" opacity="0.3"/><path d="M9 128.7h81.33" stroke="#333" stroke-width="1.25" opacity="0.67" stroke-dasharray="2.4 0.5 5.4 0.5 4.1 0.5 3.5 0.4 2.4 0.5 4.4 0.4"/><path d="M9 131.8h78.78" stroke="#333" stroke-width="1.25" opacity="0.67" stroke-dasharray="4.9 0.4 5.8 0.5 5.4 0.3 2.3 0.4 3.4 0.5 5.3 0.4"/><path d="M9 134.9h67.2" stroke="#333" stroke-width="1.25" opacity="0.67" stroke-dasharray="4.6 0.4 2.1 0.4 2.9 0.4 2.0 0.5 5.6 0.3 4.3 0.3"/></svg>
<span class="t" style="left:904.8px;top:369.6px;font-size:9.5px;line-height:11.4px;color:#555;transform:scaleX(0.862);">[Premium Only]Resume33</span>
<div class="b" style="left:1046px;top:219px;width:206.5px;height:171.5px;background:#fff;"></div>
<svg class="th" style="left:1046.5px;top:219.8px;" width="206" height="109.8" viewBox="0 0 206 110" preserveAspectRatio="none"><defs><radialGradient id="adg" cx="0.55" cy="0.4" r="0.75"><stop offset="0" stop-color="#2a2b2f"/><stop offset="0.5" stop-color="#18191c"/><stop offset="1" stop-color="#08080a"/></radialGradient><linearGradient id="nav" x1="0" y1="0" x2="1" y2="1"><stop offset="0" stop-color="#7fb4e4"/><stop offset="0.45" stop-color="#4a78bd"/><stop offset="1" stop-color="#9cc0dc"/></linearGradient><filter id="bl1"><feGaussianBlur stdDeviation="1.1"/></filter><filter id="bl2"><feGaussianBlur stdDeviation="2.5"/></filter></defs><rect x="0" y="0" width="206" height="110" fill="url(#adg)" /><path d="M0 0H58V21L0 33Z" fill="#c2c4c0"/><path d="M0 0H58V8L0 10Z" fill="#d4d5d1"/><path d="M0 11L58 9V17L0 22Z" fill="#9fa19d"/><path d="M0 22L58 16V21L0 33Z" fill="#d9dad7"/><path d="M0 31L60 19L62 23L0 37Z" fill="#0c0c0e"/><path d="M23 6Q24 2.5 30 2.5H46Q51 2.5 50 8L48.5 17Q48 21.5 42 21.5H31Q23 21.5 23 14Z" fill="#1b1c1f"/><path d="M26.5 6.5Q27 4.5 31 4.5H44.5Q47.5 4.5 47 8L46 16Q45.5 19.5 41 19.5H32Q26.5 19.5 26.5 14Z" fill="#c9d2d6"/><path d="M30 18L40 6H45L36 19.5Z" fill="#e6eaec" opacity="0.7"/><path d="M26.5 14Q30 19.5 38 19.5H32Q26.5 19.5 26.5 14Z" fill="#8fb8d8"/><path d="M58 0H88L100 14L66 26L58 21Z" fill="#0e0e10"/><path d="M88 0H143V9L120 11L104 9Z" fill="#d2d3cf"/><path d="M104 0V9L100 8L92 0Z" fill="#efefec"/><path d="M110 3H143V8L112 9Z" fill="#babcb8"/><path d="M143 0H206V16Q175 10 143 9Z" fill="#8a8c89"/><path d="M100 14Q150 8 206 16V26Q160 16 112 20Z" fill="#2c2d31"/><path d="M118 15Q160 11 206 19" stroke="#55575c" stroke-width="1" fill="none" filter="url(#bl1)"/><path d="M0 37L62 23L70 34L62 44L0 58Z" fill="#1b1c1f"/><path d="M0 58L62 44L52 80L0 92Z" fill="#0e0e10"/><path d="M8 52Q30 46 46 38L60 33" stroke="#7c7f85" stroke-width="1" fill="none" filter="url(#bl1)"/><path d="M30 47Q36 41 44 41Q46 44 42 46Q36 49 30 47Z" fill="#0a0a0b" stroke="#9a9da2" stroke-width="0.7"/><path d="M31 46.5Q38 47 43 43.5" stroke="#e4e6e8" stroke-width="1.3" fill="none"/><path d="M60 40L47 76" stroke="#8a8d92" stroke-width="1.3" fill="none"/><path d="M62 40L50 76" stroke="#2e2f33" stroke-width="2.4" fill="none"/><path d="M0 84Q24 82 44 74" stroke="#6a6d72" stroke-width="0.9" fill="none" filter="url(#bl1)"/><path d="M0 96Q26 92 46 84" stroke="#3a3c40" stroke-width="1" fill="none" filter="url(#bl1)"/><ellipse cx="62" cy="94" rx="6" ry="5" fill="#2a2b2f" filter="url(#bl2)"/><path d="M84 26Q104 14 128 24L134 44H82Z" fill="#0b0b0d"/><ellipse cx="104" cy="33" rx="10" ry="7.5" fill="#14161c"/><ellipse cx="105" cy="32" rx="7" ry="5" fill="#2d4a8a" opacity="0.9" filter="url(#bl1)"/><path d="M98 30Q105 25 112 30" stroke="#7f9fe0" stroke-width="0.8" fill="none" stroke-dasharray="0.8 0.8"/><ellipse cx="133" cy="39" rx="8" ry="8.5" fill="#101114" stroke="#3c3e44" stroke-width="0.8"/><ellipse cx="133" cy="37" rx="4.5" ry="4" fill="#35508c" opacity="0.75" filter="url(#bl1)"/><path d="M128 36Q133 31 138 36" stroke="#9ab0e0" stroke-width="0.7" fill="none" stroke-dasharray="0.7 0.7"/><ellipse cx="95.5" cy="43" rx="28" ry="29.5" fill="none" stroke="#1d1e21" stroke-width="6.4"/><ellipse cx="95.5" cy="43" rx="31" ry="32.5" fill="none" stroke="#4a4c51" stroke-width="0.7"/><ellipse cx="95.5" cy="43" rx="25" ry="26.4" fill="none" stroke="#08080a" stroke-width="0.9"/><path d="M70 28Q82 12 100 11" stroke="#55575c" stroke-width="1.2" fill="none" filter="url(#bl1)"/><path d="M70 36Q95 28 121 38L117 50Q108 48 104 56L99 68H89L85 56Q82 48 72 48Z" fill="#1c1d20"/><path d="M78 32L90 32L88 36L76 37Z" fill="#45474c"/><path d="M73 48Q83 49 85.5 57L89 68Q94 71 99 68L103.5 57Q106 50 117 50" stroke="#b9bbbf" stroke-width="1.8" fill="none" stroke-linejoin="round"/><circle cx="95" cy="45.5" r="8" fill="#3a3c40"/><circle cx="95" cy="45.5" r="5" fill="#2a2b2f" stroke="#8d9095" stroke-width="0.9"/><path d="M90.3 45.5H99.7" stroke="#a8abb0" stroke-width="1.5"/><path d="M145 20H206V38H146Z" fill="#1a1b1e"/><path d="M147 22Q176 19 206 24" stroke="#7a7d82" stroke-width="0.8" fill="none"/><path d="M148 24H204V32H148Z" fill="#0d0d0f"/><path d="M150 28H176M181 28H203" stroke="#3a3c41" stroke-width="2"/><path d="M147 35Q176 33 206 37" stroke="#8a8d92" stroke-width="0.9" fill="none"/><path d="M146 38H200L192 84H150Z" fill="#202125"/><rect x="154" y="43.5" width="31" height="17" fill="url(#nav)" rx="1"/><rect x="154" y="43.5" width="31" height="17" fill="none" stroke="#0a0a0c" stroke-width="1.4" rx="1"/><path d="M158 48L166 52L172 47L180 55" stroke="#cfe0f0" stroke-width="0.6" fill="none" opacity="0.8"/><circle cx="149.5" cy="45" r="1.7" fill="#4a3a3e"/><circle cx="190" cy="46" r="1.9" fill="#3c3e43" stroke="#6a6d72" stroke-width="0.4"/><circle cx="149.5" cy="51" r="1.7" fill="#4a3a3e"/><circle cx="190" cy="52" r="1.9" fill="#3c3e43" stroke="#6a6d72" stroke-width="0.4"/><circle cx="149.5" cy="57" r="1.7" fill="#4a3a3e"/><circle cx="190" cy="58" r="1.9" fill="#3c3e43" stroke="#6a6d72" stroke-width="0.4"/><rect x="152" y="63" width="36" height="3.4" fill="#3a3c41" /><rect x="156" y="64" width="7" height="1.4" fill="#9a9da2" /><rect x="170" y="64" width="12" height="1.4" fill="#6a6d72" /><circle cx="152" cy="72" r="3.6" fill="#0e0e10" stroke="#6a6d72" stroke-width="0.8"/><circle cx="180" cy="76" r="3.6" fill="#0e0e10" stroke="#6a6d72" stroke-width="0.8"/><circle cx="166" cy="74" r="2.4" fill="#17181b" stroke="#55575c" stroke-width="0.6"/><rect x="157" y="68.5" width="20" height="1.6" fill="#4a4c51" /><path d="M192 84L200 38" stroke="#77797e" stroke-width="1.2" fill="none"/><path d="M200 38Q206 44 206 60V36Z" fill="#3a3b3f"/><path d="M196 84L204 52" stroke="#55575c" stroke-width="2.4" fill="none" filter="url(#bl1)"/><ellipse cx="151.5" cy="91" rx="4.6" ry="5" fill="#1d1e21" stroke="#6a6d72" stroke-width="0.7"/><ellipse cx="151" cy="89.5" rx="2" ry="1.6" fill="#77797e"/><path d="M148 96L146 106H157L155 96Z" fill="#121215"/><path d="M141 110Q143 103 152 103Q166 104 171 110" stroke="#c4c6c9" stroke-width="1.3" fill="none"/><path d="M176 110L188 96L192 98L182 110Z" fill="#222327"/><path d="M134 110L144 88" stroke="#2e2f33" stroke-width="2" fill="none"/><rect x="0" y="105" width="206" height="5" fill="#050506" opacity="0.6"/></svg>
<div class="b" style="left:1189.5px;top:219px;width:63px;height:13.2px;background:#d8454f;"></div>
<span class="t" style="left:1198.0px;top:219.8px;font-size:10px;line-height:12.0px;color:#fbe9ea;transform:scaleX(0.909);">Ad by WPS</span>
<span class="t" style="left:1069.5px;top:339.8px;font-size:11px;line-height:13.2px;color:#1a1a1a;font-weight:bold;transform:scaleX(0.990);">Oferta Nuevo Nissan QASHQAI</span>
<span class="t" style="left:1056.5px;top:357.7px;font-size:9px;line-height:10.8px;color:#3a3a3a;transform:scaleX(0.871);">Descubre el Nuevo Nissan QASHQAI desde 17.900€.</span>
<span class="t" style="left:1093.5px;top:371.7px;font-size:9px;line-height:10.8px;color:#3a3a3a;transform:scaleX(0.888);">QASHQAI, Siempre el Primero.</span>
<svg class="th" style="left:256.5px;top:406.7px;box-shadow:0 0 2px rgba(0,0,0,0.13);" width="106" height="143" viewBox="0 0 107 143" preserveAspectRatio="none"><defs><radialGradient id="g46" cx="0.5" cy="0.5" r="0.5"><stop offset="0" stop-color="#38e0e0" stop-opacity="0.9"/><stop offset="0.55" stop-color="#129aa0" stop-opacity="0.6"/><stop offset="1" stop-color="#05080a" stop-opacity="0"/></radialGradient><filter id="bl46"><feGaussianBlur stdDeviation="0.8"/></filter></defs><rect x="0" y="0" width="107" height="143" fill="#05080a" /><ellipse cx="68" cy="21" rx="31" ry="15" fill="url(#g46)" opacity="0.55"/><g filter="url(#bl46)"><path d="M44 24Q50 9 70 8Q90 9 97 22Q90 33 68 34Q50 33 44 24Z" fill="#0a5a62" opacity="0.75"/><ellipse cx="70" cy="24" rx="13" ry="6.5" fill="#031418"/><path d="M47 22Q56 10 72 10Q86 11 94 19" stroke="#3fe6e6" stroke-width="1.3" fill="none"/><path d="M50 28Q58 33 70 33Q84 32 92 26" stroke="#1fb8c0" stroke-width="1.1" fill="none"/><path d="M52 17Q60 13 66 14M78 13Q86 14 90 18" stroke="#9ff6f6" stroke-width="0.8" fill="none"/><path d="M56 26Q60 20 68 19" stroke="#27c8d0" stroke-width="1" fill="none"/></g><ellipse cx="61.5" cy="23.5" rx="1.6" ry="1.3" fill="#d9ffff"/><path d="M80 25H96" stroke="#5f8fa0" stroke-width="2.2" opacity="0.7"/><rect x="8" y="11" width="11" height="3.4" fill="#1fa7a0" /><rect x="27" y="13.75" width="12" height="1.1" fill="#227f80" opacity="0.6"/><rect x="8" y="18.25" width="8" height="1.3" fill="#1b8a88" opacity="0.61"/><rect x="20" y="18.25" width="6" height="1.3" fill="#1b8a88" opacity="0.61"/><rect x="29" y="18.25" width="11" height="1.3" fill="#1b8a88" opacity="0.61"/><rect x="8" y="21.85" width="8" height="1.3" fill="#1b8a88" opacity="0.61"/><rect x="20" y="21.85" width="6" height="1.3" fill="#1b8a88" opacity="0.61"/><rect x="29" y="21.85" width="11" height="1.3" fill="#1b8a88" opacity="0.61"/><rect x="3.3" y="34.3" width="100" height="104.7" fill="#eef3f2" /><rect x="9.5" y="37.75" width="12" height="1.8" fill="#1fa7a0" opacity="0.79"/><rect x="9.5" y="40.75" width="9" height="1" fill="#1fa7a0" opacity="0.3"/><rect x="9.5" y="44.45" width="60.48" height="1.2" fill="#7fc4c0" opacity="0.64"/><rect x="76.7" y="44.45" width="13.44" height="1.2" fill="#7fc4c0" opacity="0.64"/><path d="M12.5 48.7h77.28" stroke="#3a3a3a" stroke-width="1.25" opacity="0.67" stroke-dasharray="5.6 0.4 4.4 0.5 2.9 0.4 4.3 0.5 2.1 0.3 3.3 0.5"/><rect x="9.9" y="48.1" width="1.1" height="1.1" fill="#3a3a3a" opacity="0.8"/><rect x="9.5" y="55.05" width="26" height="1.8" fill="#1fa7a0" opacity="0.79"/><rect x="9.5" y="58.05" width="19.5" height="1" fill="#1fa7a0" opacity="0.3"/><rect x="9.5" y="62.05" width="50.4" height="1.2" fill="#7fc4c0" opacity="0.64"/><rect x="76.7" y="62.05" width="13.44" height="1.2" fill="#7fc4c0" opacity="0.64"/><path d="M9.5 66.7h70.7" stroke="#3a3a3a" stroke-width="1.25" opacity="0.67" stroke-dasharray="3.7 0.4 3.4 0.4 3.6 0.3 3.7 0.3 2.4 0.4 5.9 0.4"/><path d="M9.5 70.05h72.17" stroke="#3a3a3a" stroke-width="1.25" opacity="0.67" stroke-dasharray="5.7 0.5 4.3 0.4 4.1 0.4 5.8 0.3 3.5 0.5 4.4 0.4"/><path d="M9.5 73.4h71.82" stroke="#3a3a3a" stroke-width="1.25" opacity="0.67" stroke-dasharray="5.0 0.4 5.4 0.5 2.1 0.4 3.5 0.4 4.2 0.4 4.6 0.5"/><rect x="9.5" y="79.75" width="19" height="1.8" fill="#1fa7a0" opacity="0.79"/><rect x="9.5" y="82.75" width="14.25" height="1" fill="#1fa7a0" opacity="0.3"/><rect x="9.5" y="86.75" width="54.6" height="1.2" fill="#7fc4c0" opacity="0.64"/><rect x="76.7" y="86.75" width="13.44" height="1.2" fill="#7fc4c0" opacity="0.64"/><path d="M9.5 92.1h72.18" stroke="#3a3a3a" stroke-width="1.25" opacity="0.67" stroke-dasharray="2.5 0.5 3.2 0.5 2.8 0.5 2.7 0.5 5.5 0.3 4.6 0.4"/><path d="M9.5 95.4h60.48" stroke="#3a3a3a" stroke-width="1.25" opacity="0.67" stroke-dasharray="4.0 0.5 2.6 0.4 2.3 0.3 4.0 0.3 2.5 0.5 3.2 0.4"/><rect x="9.5" y="101.05" width="22" height="1.8" fill="#1fa7a0" opacity="0.79"/><rect x="9.5" y="104.05" width="16.5" height="1" fill="#1fa7a0" opacity="0.3"/><path d="M12.5 108.7h64.74" stroke="#3a3a3a" stroke-width="1.25" opacity="0.67" stroke-dasharray="3.7 0.3 5.0 0.4 2.2 0.3 4.9 0.3 4.9 0.5 4.0 0.5"/><rect x="9.9" y="108.1" width="1.1" height="1.1" fill="#3a3a3a" opacity="0.8"/><path d="M12.5 112.1h68.56" stroke="#3a3a3a" stroke-width="1.25" opacity="0.67" stroke-dasharray="4.3 0.4 3.0 0.3 3.7 0.4 5.1 0.4 3.6 0.5 4.5 0.5"/><rect x="9.9" y="111.5" width="1.1" height="1.1" fill="#3a3a3a" opacity="0.8"/><path d="M12.5 115.5h28.56" stroke="#3a3a3a" stroke-width="1.25" opacity="0.67" stroke-dasharray="4.8 0.5 2.8 0.5 2.3 0.4 4.4 0.4 4.0 0.4 3.0 0.4"/><rect x="9.9" y="114.9" width="1.1" height="1.1" fill="#3a3a3a" opacity="0.8"/><rect x="9.5" y="120.55" width="11" height="1.8" fill="#1fa7a0" opacity="0.79"/><rect x="9.5" y="123.55" width="8.25" height="1" fill="#1fa7a0" opacity="0.3"/><path d="M9.5 128.2h79.78" stroke="#3a3a3a" stroke-width="1.25" opacity="0.67" stroke-dasharray="3.1 0.5 3.0 0.4 5.9 0.3 3.3 0.5 2.3 0.3 5.3 0.5"/><path d="M9.5 131.3h78.28" stroke="#3a3a3a" stroke-width="1.25" opacity="0.67" stroke-dasharray="2.8 0.5 3.3 0.5 4.4 0.5 5.7 0.5 4.8 0.5 5.2 0.5"/><path d="M9.5 134.4h67.2" stroke="#3a3a3a" stroke-width="1.25" opacity="0.67" stroke-dasharray="3.7 0.4 3.1 0.5 4.8 0.3 5.6 0.4 4.8 0.4 3.1 0.4"/></svg>
<span class="t" style="left:261.5px;top:553.7px;font-size:9.5px;line-height:11.4px;color:#555;transform:scaleX(0.862);">[Premium Only]Resume46</span>
<svg class="th" style="left:384.5px;top:406.7px;box-shadow:0 0 2px rgba(0,0,0,0.13);" width="107" height="143" viewBox="0 0 107 143" preserveAspectRatio="none"><defs><filter id="ble"><feGaussianBlur stdDeviation="0.8"/></filter></defs><rect x="0" y="0" width="107" height="143" fill="#d3d0ca" /><rect x="0" y="0" width="107" height="34" fill="#dad7d1" /><g filter="url(#ble)"><path d="M56 2L62 1.5L70 4L78 9L86 14L88 19L83 22.5L79 20L77 23.5L73 19.5L70 22L67 16.5L64 18L62 12.5L58.5 13L58.5 7.5Z" fill="#58544a"/><path d="M100.5 0.5L104 2L105.2 8L103.5 14L101.5 20L98.5 23L96 20.5L93.5 22L91 18L92.5 12L96 5Z" fill="#58544a"/><path d="M58 4L84 16M60 9L80 19M66 5L86 17M64 14L78 21M98 3L92 17M102 4L95 19M104 10L98 21" stroke="#989284" stroke-width="0.8" opacity="0.85"/><path d="M62 3L72 7M74 11L82 16M99 6L97 12" stroke="#2e2b25" stroke-width="1.1" opacity="0.8"/><ellipse cx="89.6" cy="20" rx="3.6" ry="5.6" fill="#37342c"/><path d="M87 24L92.6 24L91.8 31L89.6 28L88 31.5Z" fill="#4f4b42"/><path d="M88 31L88.5 34M91 30.5L92 33.5" stroke="#6a655c" stroke-width="0.6"/></g><ellipse cx="83.2" cy="15" rx="2.6" ry="2" fill="#efece6"/><path d="M80.6 15.2L79.2 16.2L81 16.4Z" fill="#b8a060"/><rect x="4.5" y="34.5" width="99" height="105" fill="#fefefd" /><rect x="9" y="10" width="14.5" height="11" fill="#fff" stroke="#c4c2be" stroke-width="0.5"/><rect x="13.5" y="13.25" width="5" height="1.1" fill="#999" opacity="0.6"/><circle cx="23.5" cy="25" r="1" fill="none" stroke="#888" stroke-width="0.4"/><rect x="32.5" y="11" width="10" height="3.4" fill="#333" /><rect x="48" y="13.75" width="15" height="1.1" fill="#8a8782" opacity="0.6"/><rect x="32" y="16.95" width="33" height="1.3" fill="#6a6762" opacity="0.68"/><rect x="33" y="20.55" width="8" height="1.3" fill="#77746e" opacity="0.61"/><rect x="45" y="20.55" width="6" height="1.3" fill="#77746e" opacity="0.61"/><rect x="54" y="20.55" width="11" height="1.3" fill="#77746e" opacity="0.61"/><rect x="33" y="24.15" width="8" height="1.3" fill="#77746e" opacity="0.61"/><rect x="45" y="24.15" width="6" height="1.3" fill="#77746e" opacity="0.61"/><rect x="54" y="24.15" width="11" height="1.3" fill="#77746e" opacity="0.61"/><rect x="9.5" y="37.25" width="12" height="1.8" fill="#2a2a2a" opacity="0.79"/><rect x="9.5" y="40.25" width="9" height="1" fill="#2a2a2a" opacity="0.3"/><rect x="9.5" y="43.95" width="60.48" height="1.2" fill="#999" opacity="0.64"/><rect x="76.7" y="43.95" width="13.44" height="1.2" fill="#999" opacity="0.64"/><path d="M12.5 48.2h77.28" stroke="#444" stroke-width="1.25" opacity="0.67" stroke-dasharray="4.7 0.3 4.5 0.5 5.3 0.4 4.5 0.4 4.1 0.3 4.7 0.5"/><rect x="9.9" y="47.6" width="1.1" height="1.1" fill="#444" opacity="0.8"/><rect x="9.5" y="54.55" width="26" height="1.8" fill="#2a2a2a" opacity="0.79"/><rect x="9.5" y="57.55" width="19.5" height="1" fill="#2a2a2a" opacity="0.3"/><rect x="9.5" y="61.55" width="50.4" height="1.2" fill="#999" opacity="0.64"/><rect x="76.7" y="61.55" width="13.44" height="1.2" fill="#999" opacity="0.64"/><path d="M9.5 66.2h72.87" stroke="#444" stroke-width="1.25" opacity="0.67" stroke-dasharray="3.7 0.5 2.3 0.5 3.5 0.5 2.7 0.4 3.1 0.4 4.9 0.4"/><path d="M9.5 69.55h75.32" stroke="#444" stroke-width="1.25" opacity="0.67" stroke-dasharray="4.3 0.4 4.5 0.4 2.6 0.4 2.0 0.4 4.1 0.5 5.8 0.5"/><path d="M9.5 72.9h71.82" stroke="#444" stroke-width="1.25" opacity="0.67" stroke-dasharray="2.1 0.4 3.0 0.5 5.6 0.3 5.1 0.4 2.7 0.4 3.7 0.4"/><rect x="9.5" y="79.25" width="19" height="1.8" fill="#2a2a2a" opacity="0.79"/><rect x="9.5" y="82.25" width="14.25" height="1" fill="#2a2a2a" opacity="0.3"/><rect x="9.5" y="86.25" width="54.6" height="1.2" fill="#999" opacity="0.64"/><rect x="76.7" y="86.25" width="13.44" height="1.2" fill="#999" opacity="0.64"/><path d="M9.5 91.6h69.63" stroke="#444" stroke-width="1.25" opacity="0.67" stroke-dasharray="3.5 0.3 3.6 0.4 4.6 0.4 3.4 0.3 5.3 0.4 5.5 0.3"/><path d="M9.5 94.9h60.48" stroke="#444" stroke-width="1.25" opacity="0.67" stroke-dasharray="2.0 0.4 3.7 0.5 5.5 0.4 3.2 0.5 3.8 0.4 3.3 0.3"/><rect x="9.5" y="100.55" width="22" height="1.8" fill="#2a2a2a" opacity="0.79"/><rect x="9.5" y="103.55" width="16.5" height="1" fill="#2a2a2a" opacity="0.3"/><path d="M12.5 108.2h67.53" stroke="#444" stroke-width="1.25" opacity="0.67" stroke-dasharray="5.5 0.3 3.1 0.5 4.7 0.3 3.4 0.5 3.8 0.3 5.6 0.3"/><rect x="9.9" y="107.6" width="1.1" height="1.1" fill="#444" opacity="0.8"/><path d="M12.5 111.6h68.84" stroke="#444" stroke-width="1.25" opacity="0.67" stroke-dasharray="4.5 0.4 5.8 0.3 4.4 0.3 5.9 0.3 4.1 0.5 5.5 0.3"/><rect x="9.9" y="111" width="1.1" height="1.1" fill="#444" opacity="0.8"/><path d="M12.5 115h28.56" stroke="#444" stroke-width="1.25" opacity="0.67" stroke-dasharray="5.5 0.5 3.3 0.5 2.9 0.3 2.7 0.4 5.3 0.4 6.0 0.5"/><rect x="9.9" y="114.4" width="1.1" height="1.1" fill="#444" opacity="0.8"/><rect x="9.5" y="120.05" width="11" height="1.8" fill="#2a2a2a" opacity="0.79"/><rect x="9.5" y="123.05" width="8.25" height="1" fill="#2a2a2a" opacity="0.3"/><path d="M9.5 127.7h78.8" stroke="#444" stroke-width="1.25" opacity="0.67" stroke-dasharray="2.9 0.3 5.7 0.4 4.8 0.4 3.5 0.5 4.3 0.5 4.6 0.5"/><path d="M9.5 130.8h79.29" stroke="#444" stroke-width="1.25" opacity="0.67" stroke-dasharray="2.6 0.3 4.9 0.3 4.6 0.5 2.2 0.5 2.1 0.5 5.4 0.4"/><path d="M9.5 133.9h67.2" stroke="#444" stroke-width="1.25" opacity="0.67" stroke-dasharray="4.9 0.5 2.5 0.5 2.5 0.5 4.8 0.5 2.2 0.4 4.5 0.5"/></svg>
<span class="t" style="left:385.0px;top:553.7px;font-size:9.5px;line-height:11.4px;color:#555;transform:scaleX(0.851);">[Premium Only]Resume37d...</span>
<svg class="th" style="left:512.7px;top:406.7px;box-shadow:0 0 2px rgba(0,0,0,0.13);" width="106.7" height="143" viewBox="0 0 107 143" preserveAspectRatio="none"><rect x="0" y="0" width="107" height="143" fill="#fff" /><rect x="0" y="0" width="31.5" height="143" fill="#50bacb" /><path d="M16 4H107V26H16Q5 26 5 15Q5 4 16 4Z" fill="#2e3a4b"/><rect x="15.5" y="9.5" width="14" height="9" fill="#fff" /><rect x="19.5" y="12.75" width="6" height="1.4" fill="#333" opacity="0.71"/><rect x="39.5" y="11" width="11" height="3.4" fill="#43c3c0" /><rect x="57" y="13.75" width="15" height="1.1" fill="#6f8296" opacity="0.6"/><rect x="39" y="18.5" width="62" height="3.6" fill="none" stroke="#8492a4" stroke-width="0.5" rx="1.8"/><rect x="43" y="19.75" width="8" height="1.2" fill="#aab4c0" opacity="0.64"/><rect x="58" y="19.75" width="13" height="1.2" fill="#aab4c0" opacity="0.64"/><rect x="79" y="19.75" width="17" height="1.2" fill="#aab4c0" opacity="0.64"/><rect x="5" y="34" width="26.5" height="3.2" fill="#f4fbfc" /><rect x="7.5" y="34.95" width="9" height="1.4" fill="#50bacb" opacity="0.71"/><rect x="8" y="41.75" width="14" height="1.2" fill="#86cfdb" opacity="0.64"/><rect x="8" y="46.05" width="20" height="1.2" fill="#86cfdb" opacity="0.64"/><rect x="5" y="67" width="26.5" height="3.2" fill="#f4fbfc" /><rect x="7.5" y="67.95" width="9" height="1.4" fill="#50bacb" opacity="0.71"/><rect x="8" y="74.75" width="14" height="1.2" fill="#86cfdb" opacity="0.64"/><rect x="8" y="79.05" width="20" height="1.2" fill="#86cfdb" opacity="0.64"/><rect x="8" y="83.35" width="12" height="1.2" fill="#86cfdb" opacity="0.64"/><rect x="5" y="94.5" width="26.5" height="3.2" fill="#f4fbfc" /><rect x="7.5" y="95.45" width="9" height="1.4" fill="#50bacb" opacity="0.71"/><rect x="8" y="102.25" width="14" height="1.2" fill="#86cfdb" opacity="0.64"/><rect x="8" y="106.55" width="20" height="1.2" fill="#86cfdb" opacity="0.64"/><rect x="8" y="110.85" width="12" height="1.2" fill="#86cfdb" opacity="0.64"/><rect x="8" y="115.15" width="17" height="1.2" fill="#86cfdb" opacity="0.64"/><rect x="8" y="53.75" width="5" height="1.5" fill="#d8f1f5" opacity="0.73"/><rect x="8" y="58.25" width="18" height="1.2" fill="#86cfdb" opacity="0.64"/><rect x="17" y="127" width="12" height="12" fill="#e8f5f8" /><rect x="18" y="128" width="1.6" height="1.6" fill="#7ab8c4" /><rect x="20.7" y="128" width="1.6" height="1.6" fill="#7ab8c4" /><rect x="23.4" y="128" width="1.6" height="1.6" fill="#7ab8c4" /><rect x="26.1" y="128" width="1.6" height="1.6" fill="#7ab8c4" /><rect x="18" y="130.7" width="1.6" height="1.6" fill="#7ab8c4" /><rect x="20.7" y="130.7" width="1.6" height="1.6" fill="#7ab8c4" /><rect x="23.4" y="130.7" width="1.6" height="1.6" fill="#7ab8c4" /><rect x="26.1" y="130.7" width="1.6" height="1.6" fill="#7ab8c4" /><rect x="18" y="133.4" width="1.6" height="1.6" fill="#7ab8c4" /><rect x="20.7" y="133.4" width="1.6" height="1.6" fill="#7ab8c4" /><rect x="23.4" y="133.4" width="1.6" height="1.6" fill="#7ab8c4" /><rect x="26.1" y="133.4" width="1.6" height="1.6" fill="#7ab8c4" /><rect x="18" y="136.1" width="1.6" height="1.6" fill="#7ab8c4" /><rect x="20.7" y="136.1" width="1.6" height="1.6" fill="#7ab8c4" /><rect x="23.4" y="136.1" width="1.6" height="1.6" fill="#7ab8c4" /><rect x="26.1" y="136.1" width="1.6" height="1.6" fill="#7ab8c4" /><rect x="6" y="128.25" width="3" height="1.9" fill="#d8f1f5" opacity="0.81"/><rect x="6" y="134.75" width="3" height="1.9" fill="#d8f1f5" opacity="0.81"/><rect x="39.5" y="30.75" width="10" height="1.7" fill="#2fa8a0" opacity="0.78"/><rect x="39.5" y="33.55" width="8" height="0.9" fill="#2fa8a0" opacity="0.24"/><rect x="39.5" y="36.95" width="55" height="1.3" fill="#43c3b8" opacity="0.68"/><rect x="43" y="40.5" width="1.2" height="1.2" fill="#333" /><rect x="46" y="40.55" width="40" height="1.2" fill="#555" opacity="0.64"/><rect x="39.5" y="48.75" width="25" height="1.7" fill="#2fa8a0" opacity="0.78"/><rect x="39.5" y="51.55" width="20" height="0.9" fill="#2fa8a0" opacity="0.24"/><rect x="39.5" y="55.25" width="21" height="1.3" fill="#43c3b8" opacity="0.68"/><rect x="62" y="55.25" width="34" height="1.2" fill="#666" opacity="0.64"/><rect x="39.5" y="59.05" width="13" height="1.1" fill="#9fdcd6" opacity="0.6"/><path d="M46 64.35h38.75" stroke="#555" stroke-width="1.15" opacity="0.64" stroke-dasharray="5.8 0.3 4.8 0.3 3.0 0.5 2.8 0.5 3.8 0.4 4.0 0.3"/><rect x="43.4" y="63.8" width="1.1" height="1.1" fill="#555" opacity="0.8"/><path d="M46 67.55h41.29" stroke="#555" stroke-width="1.15" opacity="0.64" stroke-dasharray="2.4 0.4 2.1 0.4 3.6 0.5 3.5 0.3 3.0 0.5 2.3 0.5"/><rect x="43.4" y="67" width="1.1" height="1.1" fill="#555" opacity="0.8"/><path d="M46 70.75h39.38" stroke="#555" stroke-width="1.15" opacity="0.64" stroke-dasharray="4.6 0.4 4.8 0.4 4.6 0.5 4.3 0.3 2.3 0.5 4.0 0.3"/><rect x="43.4" y="70.2" width="1.1" height="1.1" fill="#555" opacity="0.8"/><path d="M46 73.95h25.2" stroke="#555" stroke-width="1.15" opacity="0.64" stroke-dasharray="5.8 0.4 4.9 0.5 3.1 0.4 5.5 0.3 5.1 0.3 4.8 0.5"/><rect x="43.4" y="73.4" width="1.1" height="1.1" fill="#555" opacity="0.8"/><rect x="39.5" y="78.45" width="21" height="1.3" fill="#43c3b8" opacity="0.68"/><rect x="62" y="78.45" width="34" height="1.2" fill="#666" opacity="0.64"/><rect x="39.5" y="82.25" width="13" height="1.1" fill="#9fdcd6" opacity="0.6"/><path d="M46 87.35h39.74" stroke="#555" stroke-width="1.15" opacity="0.64" stroke-dasharray="3.5 0.3 5.5 0.3 4.0 0.5 2.3 0.4 4.5 0.3 3.5 0.5"/><rect x="43.4" y="86.8" width="1.1" height="1.1" fill="#555" opacity="0.8"/><path d="M46 90.55h39.9" stroke="#555" stroke-width="1.15" opacity="0.64" stroke-dasharray="3.8 0.5 2.6 0.4 2.4 0.4 5.7 0.4 5.1 0.4 5.0 0.3"/><rect x="43.4" y="90" width="1.1" height="1.1" fill="#555" opacity="0.8"/><rect x="39.5" y="97.75" width="17" height="1.7" fill="#2fa8a0" opacity="0.78"/><rect x="39.5" y="100.55" width="13.6" height="0.9" fill="#2fa8a0" opacity="0.24"/><rect x="39.5" y="104.25" width="21" height="1.3" fill="#43c3b8" opacity="0.68"/><rect x="62" y="104.25" width="34" height="1.2" fill="#666" opacity="0.64"/><rect x="39.5" y="108.05" width="13" height="1.1" fill="#9fdcd6" opacity="0.6"/><path d="M46 112.85h40.2" stroke="#555" stroke-width="1.15" opacity="0.64" stroke-dasharray="3.7 0.4 2.8 0.5 5.3 0.5 2.6 0.4 3.3 0.4 5.8 0.5"/><rect x="43.4" y="112.3" width="1.1" height="1.1" fill="#555" opacity="0.8"/><path d="M46 116.05h39.9" stroke="#555" stroke-width="1.15" opacity="0.64" stroke-dasharray="2.2 0.5 4.4 0.4 3.1 0.5 3.8 0.5 4.6 0.3 5.1 0.5"/><rect x="43.4" y="115.5" width="1.1" height="1.1" fill="#555" opacity="0.8"/><rect x="39.5" y="123.25" width="9" height="1.7" fill="#2fa8a0" opacity="0.78"/><rect x="39.5" y="126.05" width="7.2" height="0.9" fill="#2fa8a0" opacity="0.24"/><path d="M39.5 130.15h56.71" stroke="#555" stroke-width="1.15" opacity="0.64" stroke-dasharray="4.2 0.5 3.9 0.4 4.3 0.3 4.0 0.5 5.2 0.3 3.2 0.3"/><path d="M39.5 133.35h58.86" stroke="#555" stroke-width="1.15" opacity="0.64" stroke-dasharray="4.8 0.3 5.9 0.5 4.6 0.5 2.6 0.3 4.1 0.3 2.8 0.4"/><path d="M39.5 136.55h48" stroke="#555" stroke-width="1.15" opacity="0.64" stroke-dasharray="2.1 0.4 3.8 0.5 4.1 0.5 4.0 0.5 3.8 0.4 6.0 0.5"/></svg>
<span class="t" style="left:518.1px;top:553.7px;font-size:9.5px;line-height:11.4px;color:#555;transform:scaleX(0.862);">[Premium Only]Resume40</span>
<svg class="th" style="left:641px;top:406.7px;box-shadow:0 0 2px rgba(0,0,0,0.13);" width="107" height="143" viewBox="0 0 107 143" preserveAspectRatio="none"><defs><linearGradient id="s45" x1="0" y1="0" x2="0" y2="1"><stop offset="0" stop-color="#000" stop-opacity="0.28"/><stop offset="1" stop-color="#000" stop-opacity="0"/></linearGradient></defs><rect x="0" y="0" width="107" height="143" fill="#fff" /><rect x="0" y="0" width="107" height="42.5" fill="#0f0f10" /><path d="M52 0H100L107 8V42.5H50Z" fill="#131314"/><path d="M60.5 0H88.6L78.2 30L75 35.5L71.8 30Z" fill="#ececee"/><path d="M60.5 0L66 0L74 33L71.8 30Z" fill="#c4c4c8"/><path d="M88.6 0L84 0L76.5 33L78.2 30Z" fill="#cfcfd3"/><path d="M71.2 0H79.6L80.8 5.5L79.8 29L75.4 36.5L71.6 29L70.2 5.5Z" fill="#202022"/><clipPath id="tie45"><path d="M71.2 0H79.6L80.8 5.5L79.8 29L75.4 36.5L71.6 29L70.2 5.5Z"/></clipPath><g clip-path="url(#tie45)"><path d="M68 9L83 2M68 16L83 9M68 23L83 16M68 30L83 23M68 37L83 30" stroke="#dcdcdf" stroke-width="2.6"/></g><path d="M60.5 0L75 35.5L88.6 0" stroke="#2c2c2e" stroke-width="0.8" fill="none"/><path d="M56 0L70 40M93 0L80 40" stroke="#1e1e20" stroke-width="1.2" fill="none"/><rect x="5" y="4.25" width="35" height="2.1" fill="#fff" opacity="0.84"/><rect x="5" y="8.25" width="40" height="1" fill="#666" opacity="0.55"/><rect x="5.5" y="14" width="18" height="18.5" fill="#fff" /><rect x="10" y="21.75" width="8" height="1.2" fill="#aaa" opacity="0.64"/><rect x="28.5" y="17.75" width="12" height="1.5" fill="#d8d8d8" opacity="0.73"/><rect x="29" y="22.25" width="1.3" height="1.5" fill="#999" opacity="0.73"/><rect x="31.5" y="22.45" width="9" height="1.2" fill="#8a8a8a" opacity="0.64"/><rect x="29" y="25.25" width="1.3" height="1.5" fill="#999" opacity="0.73"/><rect x="31.5" y="25.45" width="9" height="1.2" fill="#8a8a8a" opacity="0.64"/><rect x="29" y="28.25" width="1.3" height="1.5" fill="#999" opacity="0.73"/><rect x="31.5" y="28.45" width="13" height="1.2" fill="#8a8a8a" opacity="0.64"/><rect x="29" y="31.25" width="1.3" height="1.5" fill="#999" opacity="0.73"/><rect x="31.5" y="31.45" width="8" height="1.2" fill="#8a8a8a" opacity="0.64"/><path d="M29.5 39.3H74" stroke="#8a8a8a" stroke-width="1.7" stroke-dasharray="2 1"/><rect x="0" y="42.5" width="107" height="5" fill="url(#s45)" /><rect x="1.2" y="42.5" width="1.6" height="98" fill="#dcdcdc" /><rect x="104.2" y="42.5" width="1.6" height="98" fill="#dcdcdc" /><rect x="1.2" y="139.5" width="104.6" height="2" fill="#c9c9c9" /><rect x="9.5" y="47.05" width="12" height="1.8" fill="#1c1c1c" opacity="0.79"/><rect x="9.5" y="50.15" width="9.36" height="1" fill="#1c1c1c" opacity="0.28"/><rect x="9.5" y="53.55" width="59.04" height="1.2" fill="#8a8a8a" opacity="0.64"/><rect x="75.1" y="53.55" width="13.12" height="1.2" fill="#8a8a8a" opacity="0.64"/><path d="M12.5 57.8h72.16" stroke="#444" stroke-width="1.25" opacity="0.67" stroke-dasharray="3.4 0.4 3.8 0.4 4.0 0.4 2.2 0.4 2.1 0.3 3.1 0.5"/><rect x="9.9" y="57.2" width="1.1" height="1.1" fill="#444" opacity="0.8"/><rect x="9.5" y="63.65" width="26" height="1.8" fill="#1c1c1c" opacity="0.79"/><rect x="9.5" y="66.75" width="20.28" height="1" fill="#1c1c1c" opacity="0.28"/><rect x="9.5" y="70.45" width="49.2" height="1.2" fill="#8a8a8a" opacity="0.64"/><rect x="75.1" y="70.45" width="13.12" height="1.2" fill="#8a8a8a" opacity="0.64"/><path d="M9.5 75.7h70.09" stroke="#444" stroke-width="1.25" opacity="0.67" stroke-dasharray="3.1 0.5 3.0 0.4 5.9 0.3 3.3 0.5 2.3 0.3 5.3 0.5"/><path d="M9.5 78.9h62.73" stroke="#444" stroke-width="1.25" opacity="0.67" stroke-dasharray="3.3 0.3 5.9 0.4 4.4 0.5 4.5 0.5 5.8 0.5 5.3 0.5"/><rect x="9.5" y="85.45" width="19" height="1.8" fill="#1c1c1c" opacity="0.79"/><rect x="9.5" y="88.55" width="14.82" height="1" fill="#1c1c1c" opacity="0.28"/><rect x="9.5" y="92.55" width="53.3" height="1.2" fill="#8a8a8a" opacity="0.64"/><rect x="75.1" y="92.55" width="13.12" height="1.2" fill="#8a8a8a" opacity="0.64"/><path d="M9.5 97.4h70.97" stroke="#444" stroke-width="1.25" opacity="0.67" stroke-dasharray="5.6 0.4 4.8 0.5 4.1 0.5 4.9 0.5 2.1 0.3 6.0 0.5"/><path d="M9.5 100.6h62.73" stroke="#444" stroke-width="1.25" opacity="0.67" stroke-dasharray="3.0 0.5 2.7 0.4 3.8 0.4 2.6 0.4 4.6 0.4 4.6 0.5"/><rect x="9.5" y="106.55" width="22" height="1.8" fill="#1c1c1c" opacity="0.79"/><rect x="9.5" y="109.65" width="17.16" height="1" fill="#1c1c1c" opacity="0.28"/><path d="M12.5 114.7h63.36" stroke="#444" stroke-width="1.25" opacity="0.67" stroke-dasharray="5.8 0.3 5.0 0.5 5.0 0.4 3.4 0.5 5.9 0.5 4.2 0.4"/><rect x="9.9" y="114.1" width="1.1" height="1.1" fill="#444" opacity="0.8"/><path d="M12.5 117.9h66.22" stroke="#444" stroke-width="1.25" opacity="0.67" stroke-dasharray="3.6 0.5 3.7 0.4 4.5 0.5 2.2 0.4 4.8 0.4 5.4 0.3"/><rect x="9.9" y="117.3" width="1.1" height="1.1" fill="#444" opacity="0.8"/><rect x="9.5" y="124.15" width="11" height="1.8" fill="#1c1c1c" opacity="0.79"/><rect x="9.5" y="127.25" width="8.58" height="1" fill="#1c1c1c" opacity="0.28"/><path d="M9.5 132.2h74.15" stroke="#444" stroke-width="1.25" opacity="0.67" stroke-dasharray="4.4 0.3 4.1 0.5 3.2 0.5 4.5 0.5 2.1 0.5 4.1 0.5"/><path d="M9.5 135.4h73.8" stroke="#444" stroke-width="1.25" opacity="0.67" stroke-dasharray="3.5 0.5 4.6 0.5 4.7 0.4 5.3 0.5 4.3 0.3 4.2 0.3"/></svg>
<span class="t" style="left:646.5px;top:553.7px;font-size:9.5px;line-height:11.4px;color:#555;transform:scaleX(0.862);">[Premium Only]Resume45</span>
<svg class="th" style="left:768.5px;top:406.7px;box-shadow:0 0 2px rgba(0,0,0,0.13);" width="108.5" height="143" viewBox="0 0 107 143" preserveAspectRatio="none"><defs><radialGradient id="g38" cx="0.5" cy="0.5" r="0.7"><stop offset="0" stop-color="#e6e6e6"/><stop offset="1" stop-color="#dedede"/></radialGradient></defs><rect x="0" y="0" width="107" height="143" fill="#dfdfdf" /><rect x="0" y="0" width="107" height="143" fill="url(#g38)" /><rect x="47" y="7" width="12" height="9" fill="#f6f6f6" /><rect x="50.5" y="10.25" width="5" height="1.1" fill="#c98a8a" opacity="0.6"/><path d="M26 27Q40 22 53 25Q66 22 80 27" stroke="#555" stroke-width="0.7" fill="none"/><rect x="41" y="23.5" width="24" height="4" fill="#3a3a3a" rx="1.2"/><rect x="28" y="25.75" width="10" height="1.6" fill="#444" opacity="0.76"/><rect x="68" y="25.75" width="10" height="1.6" fill="#444" opacity="0.76"/><circle cx="42" cy="21.5" r="1.3" fill="#d8b03a"/><circle cx="38.5" cy="22.5" r="1.2" fill="#c84a5a"/><circle cx="65" cy="21.5" r="1.3" fill="#c84a5a"/><circle cx="68.5" cy="22.5" r="1.2" fill="#d88a9a"/><rect x="35" y="31.25" width="35" height="1.1" fill="#bba8a0" opacity="0.6"/><rect x="11" y="35.55" width="58" height="1.3" fill="#555" opacity="0.68"/><rect x="79" y="35.55" width="15" height="1.3" fill="#555" opacity="0.68"/><rect x="47.5" y="45.75" width="12" height="2" fill="#1a1a1a" opacity="0.83"/><rect x="46.5" y="48.75" width="14" height="1" fill="#333" opacity="0.55"/><rect x="11" y="52.25" width="58" height="1.2" fill="#666" opacity="0.64"/><rect x="80" y="52.25" width="14" height="1.2" fill="#666" opacity="0.64"/><rect x="13.5" y="55.6" width="1.2" height="1.2" fill="#222" /><rect x="17" y="55.75" width="78" height="1.2" fill="#444" opacity="0.64"/><rect x="40.5" y="62.25" width="26" height="2" fill="#1a1a1a" opacity="0.83"/><rect x="39.5" y="65.25" width="28" height="1" fill="#333" opacity="0.55"/><rect x="11" y="69.25" width="53" height="1.2" fill="#666" opacity="0.64"/><rect x="82" y="69.25" width="13" height="1.2" fill="#666" opacity="0.64"/><path d="M12 74.15h71.33" stroke="#444" stroke-width="1.15" opacity="0.64" stroke-dasharray="3.7 0.5 2.3 0.5 3.5 0.5 2.7 0.4 3.1 0.4 4.9 0.4"/><path d="M12 77.55h73.72" stroke="#444" stroke-width="1.15" opacity="0.64" stroke-dasharray="4.3 0.4 4.5 0.4 2.6 0.4 2.0 0.4 4.1 0.5 5.8 0.5"/><path d="M12 80.95h62.9" stroke="#444" stroke-width="1.15" opacity="0.64" stroke-dasharray="2.1 0.4 3.0 0.5 5.6 0.3 5.1 0.4 2.7 0.4 3.7 0.4"/><rect x="44" y="87.25" width="19" height="2" fill="#1a1a1a" opacity="0.83"/><rect x="43" y="90.25" width="21" height="1" fill="#333" opacity="0.55"/><rect x="11" y="94.25" width="57" height="1.2" fill="#666" opacity="0.64"/><rect x="83" y="94.25" width="10" height="1.2" fill="#666" opacity="0.64"/><path d="M12 99.15h68.15" stroke="#444" stroke-width="1.15" opacity="0.64" stroke-dasharray="3.5 0.3 3.6 0.4 4.6 0.4 3.4 0.3 5.3 0.4 5.5 0.3"/><path d="M12 102.55h66.6" stroke="#444" stroke-width="1.15" opacity="0.64" stroke-dasharray="2.0 0.4 3.7 0.5 5.5 0.4 3.2 0.5 3.8 0.4 3.3 0.3"/><rect x="42.5" y="108.25" width="22" height="2" fill="#1a1a1a" opacity="0.83"/><rect x="41.5" y="111.25" width="24" height="1" fill="#333" opacity="0.55"/><path d="M17 115.85h68.1" stroke="#444" stroke-width="1.15" opacity="0.64" stroke-dasharray="5.5 0.3 3.1 0.5 4.7 0.3 3.4 0.5 3.8 0.3 5.6 0.3"/><rect x="14.4" y="115.3" width="1.1" height="1.1" fill="#444" opacity="0.8"/><path d="M17 119.25h69.42" stroke="#444" stroke-width="1.15" opacity="0.64" stroke-dasharray="4.5 0.4 5.8 0.3 4.4 0.3 5.9 0.3 4.1 0.5 5.5 0.3"/><rect x="14.4" y="118.7" width="1.1" height="1.1" fill="#444" opacity="0.8"/><path d="M17 122.65h25.2" stroke="#444" stroke-width="1.15" opacity="0.64" stroke-dasharray="5.5 0.5 3.3 0.5 2.9 0.3 2.7 0.4 5.3 0.4 6.0 0.5"/><rect x="14.4" y="122.1" width="1.1" height="1.1" fill="#444" opacity="0.8"/><path d="M8 134Q53 131.5 99 134" stroke="#555" stroke-width="0.8" fill="none"/><rect x="46" y="132.95" width="14" height="1.7" fill="#666" opacity="0.78"/><rect x="22" y="137.05" width="19" height="1.3" fill="#555" opacity="0.68"/><rect x="61" y="137.05" width="28" height="1.3" fill="#555" opacity="0.68"/></svg>
<span class="t" style="left:774.8px;top:553.7px;font-size:9.5px;line-height:11.4px;color:#555;transform:scaleX(0.862);">[Premium Only]Resume38</span>
<svg class="th" style="left:896.6px;top:406.7px;box-shadow:0 0 2px rgba(0,0,0,0.13);" width="108" height="143" viewBox="0 0 107 143" preserveAspectRatio="none"><rect x="0" y="0" width="107" height="143" fill="#fff" /><rect x="0.5" y="0.5" width="106" height="142" fill="none" stroke="#dfe9ec" stroke-width="1"/><rect x="2.6" y="2.6" width="101.8" height="137.8" fill="none" stroke="#a9dcea" stroke-width="3.4" opacity="0.75"/><rect x="3.4" y="3.4" width="100.2" height="136.2" fill="none" stroke="#62aec2" stroke-width="1" opacity="0.9"/><path d="M3 3H17L3 17Z" fill="#5ab0c4"/><path d="M7 3H13L3 13V7Z" fill="#fff" opacity="0.55"/><path d="M104 140H90L104 126Z" fill="#5ab0c4"/><path d="M100 140H94L104 130V136Z" fill="#fff" opacity="0.55"/><path d="M3 60V70M3 90V96M104 40V50M104 100V104M20 140H30M40 140H52" stroke="#8fd0e0" stroke-width="2.4" opacity="0.8"/><rect x="69" y="6.75" width="32" height="1.5" fill="#6cc0c8" opacity="0.59"/><rect x="12" y="15" width="13" height="14.5" fill="#fff" stroke="#ddd" stroke-width="0.5"/><rect x="15" y="18.25" width="6" height="1.3" fill="#444" opacity="0.68"/><rect x="33" y="16.5" width="10.5" height="3.6" fill="#4db6bd" /><rect x="51" y="18.75" width="15" height="1.4" fill="#4a8a90" opacity="0.71"/><rect x="34" y="24.05" width="8" height="1.3" fill="#9fd4d8" opacity="0.61"/><rect x="46" y="24.05" width="6" height="1.3" fill="#9fd4d8" opacity="0.61"/><rect x="55" y="24.05" width="11" height="1.3" fill="#9fd4d8" opacity="0.61"/><rect x="34" y="27.65" width="8" height="1.3" fill="#9fd4d8" opacity="0.61"/><rect x="46" y="27.65" width="6" height="1.3" fill="#9fd4d8" opacity="0.61"/><rect x="55" y="27.65" width="11" height="1.3" fill="#9fd4d8" opacity="0.61"/><rect x="74" y="24.05" width="13" height="1.3" fill="#9fd4d8" opacity="0.68"/><rect x="74" y="27.65" width="16" height="1.3" fill="#9fd4d8" opacity="0.68"/><rect x="10" y="36.75" width="12" height="1.8" fill="#3fa9b5" opacity="0.79"/><rect x="10" y="39.75" width="9" height="1" fill="#3fa9b5" opacity="0.3"/><rect x="10" y="43.45" width="59.04" height="1.2" fill="#a9dcdf" opacity="0.64"/><rect x="75.6" y="43.45" width="13.12" height="1.2" fill="#a9dcdf" opacity="0.64"/><path d="M13 47.7h75.44" stroke="#444" stroke-width="1.25" opacity="0.67" stroke-dasharray="3.4 0.4 3.8 0.4 4.0 0.4 2.2 0.4 2.1 0.3 3.1 0.5"/><rect x="10.4" y="47.1" width="1.1" height="1.1" fill="#444" opacity="0.8"/><rect x="10" y="54.05" width="26" height="1.8" fill="#3fa9b5" opacity="0.79"/><rect x="10" y="57.05" width="19.5" height="1" fill="#3fa9b5" opacity="0.3"/><rect x="10" y="61.05" width="49.2" height="1.2" fill="#a9dcdf" opacity="0.64"/><rect x="75.6" y="61.05" width="13.12" height="1.2" fill="#a9dcdf" opacity="0.64"/><path d="M10 65.7h70.47" stroke="#444" stroke-width="1.25" opacity="0.67" stroke-dasharray="2.5 0.5 3.2 0.5 2.8 0.5 2.7 0.5 5.5 0.3 4.6 0.4"/><path d="M10 69.05h70.2" stroke="#444" stroke-width="1.25" opacity="0.67" stroke-dasharray="5.4 0.3 2.9 0.3 2.3 0.4 2.7 0.3 4.8 0.4 3.4 0.4"/><path d="M10 72.4h70.11" stroke="#444" stroke-width="1.25" opacity="0.67" stroke-dasharray="5.4 0.4 4.6 0.5 4.3 0.4 2.6 0.5 2.7 0.4 5.3 0.5"/><rect x="10" y="78.75" width="19" height="1.8" fill="#3fa9b5" opacity="0.79"/><rect x="10" y="81.75" width="14.25" height="1" fill="#3fa9b5" opacity="0.3"/><rect x="10" y="85.75" width="53.3" height="1.2" fill="#a9dcdf" opacity="0.64"/><rect x="75.6" y="85.75" width="13.12" height="1.2" fill="#a9dcdf" opacity="0.64"/><path d="M10 91.1h66.91" stroke="#444" stroke-width="1.25" opacity="0.67" stroke-dasharray="3.7 0.3 5.0 0.4 2.2 0.3 4.9 0.3 4.9 0.5 4.0 0.5"/><path d="M10 94.4h59.04" stroke="#444" stroke-width="1.25" opacity="0.67" stroke-dasharray="4.4 0.4 3.6 0.4 2.6 0.4 3.5 0.5 3.1 0.4 5.8 0.5"/><rect x="10" y="100.05" width="22" height="1.8" fill="#3fa9b5" opacity="0.79"/><rect x="10" y="103.05" width="16.5" height="1" fill="#3fa9b5" opacity="0.3"/><path d="M13 107.7h66.2" stroke="#444" stroke-width="1.25" opacity="0.67" stroke-dasharray="3.1 0.5 3.0 0.4 5.9 0.3 3.3 0.5 2.3 0.3 5.3 0.5"/><rect x="10.4" y="107.1" width="1.1" height="1.1" fill="#444" opacity="0.8"/><path d="M13 111.1h64.96" stroke="#444" stroke-width="1.25" opacity="0.67" stroke-dasharray="2.8 0.5 3.3 0.5 4.4 0.5 5.7 0.5 4.8 0.5 5.2 0.5"/><rect x="10.4" y="110.5" width="1.1" height="1.1" fill="#444" opacity="0.8"/><path d="M13 114.5h27.88" stroke="#444" stroke-width="1.25" opacity="0.67" stroke-dasharray="3.7 0.4 3.1 0.5 4.8 0.3 5.6 0.4 4.8 0.4 3.1 0.4"/><rect x="10.4" y="113.9" width="1.1" height="1.1" fill="#444" opacity="0.8"/><rect x="10" y="119.55" width="11" height="1.8" fill="#3fa9b5" opacity="0.79"/><rect x="10" y="122.55" width="8.25" height="1" fill="#3fa9b5" opacity="0.3"/><path d="M10 127.2h75.8" stroke="#444" stroke-width="1.25" opacity="0.67" stroke-dasharray="4.0 0.3 5.3 0.4 4.2 0.5 3.6 0.5 4.9 0.4 4.5 0.4"/><path d="M10 130.3h76.75" stroke="#444" stroke-width="1.25" opacity="0.67" stroke-dasharray="6.0 0.4 5.9 0.5 2.1 0.4 3.9 0.5 2.7 0.5 3.5 0.5"/><path d="M10 133.4h65.6" stroke="#444" stroke-width="1.25" opacity="0.67" stroke-dasharray="5.7 0.5 2.8 0.5 3.8 0.5 3.9 0.5 5.9 0.5 5.3 0.5"/></svg>
<span class="t" style="left:902.6px;top:553.7px;font-size:9.5px;line-height:11.4px;color:#555;transform:scaleX(0.862);">[Premium Only]Resume47</span>
<svg class="th" style="left:1025.4px;top:406.7px;box-shadow:0 0 2px rgba(0,0,0,0.13);" width="107" height="143" viewBox="0 0 107 143" preserveAspectRatio="none"><defs><radialGradient id="g36" cx="0.5" cy="0.5" r="0.5"><stop offset="0" stop-color="#cfe3d6" stop-opacity="0.95"/><stop offset="0.7" stop-color="#e6efe9" stop-opacity="0.7"/><stop offset="1" stop-color="#fff" stop-opacity="0"/></radialGradient></defs><rect x="0" y="0" width="107" height="143" fill="#fff" /><rect x="0.5" y="0.5" width="106" height="142" fill="none" stroke="#e6eaea" stroke-width="1"/><ellipse cx="23" cy="17" rx="25" ry="20" fill="url(#g36)"/><ellipse cx="21.4" cy="16.0" rx="2.1" ry="1.3" fill="#a9c98a" opacity="0.72" transform="rotate(24 21.4 16.0)"/><ellipse cx="21.7" cy="15.3" rx="1.9" ry="1.1" fill="#a9c98a" opacity="0.39" transform="rotate(107 21.7 15.3)"/><ellipse cx="22.7" cy="15.3" rx="1.8" ry="1.1" fill="#c7dcc0" opacity="0.41" transform="rotate(57 22.7 15.3)"/><ellipse cx="18.4" cy="11.9" rx="1.2" ry="0.7" fill="#c7dcc0" opacity="0.53" transform="rotate(56 18.4 11.9)"/><ellipse cx="29.4" cy="16.8" rx="1.5" ry="0.9" fill="#a9c98a" opacity="0.59" transform="rotate(146 29.4 16.8)"/><ellipse cx="19.4" cy="20.5" rx="1.4" ry="0.8" fill="#c7dcc0" opacity="0.61" transform="rotate(48 19.4 20.5)"/><ellipse cx="18.6" cy="17.8" rx="1.2" ry="0.7" fill="#a9c98a" opacity="0.63" transform="rotate(127 18.6 17.8)"/><ellipse cx="20.4" cy="12.2" rx="1.6" ry="1.0" fill="#c7dcc0" opacity="0.77" transform="rotate(92 20.4 12.2)"/><ellipse cx="19.8" cy="20.4" rx="2.2" ry="1.3" fill="#a9c98a" opacity="0.39" transform="rotate(76 19.8 20.4)"/><ellipse cx="14.2" cy="14.0" rx="2.3" ry="1.4" fill="#e9f1e4" opacity="0.62" transform="rotate(18 14.2 14.0)"/><ellipse cx="24.8" cy="17.0" rx="2.3" ry="1.4" fill="#a9c98a" opacity="0.77" transform="rotate(107 24.8 17.0)"/><ellipse cx="27.8" cy="16.2" rx="2.3" ry="1.4" fill="#c7dcc0" opacity="0.71" transform="rotate(80 27.8 16.2)"/><ellipse cx="20.3" cy="17.1" rx="1.9" ry="1.1" fill="#e9f1e4" opacity="0.38" transform="rotate(23 20.3 17.1)"/><ellipse cx="26.0" cy="13.8" rx="2.2" ry="1.3" fill="#a9c98a" opacity="0.68" transform="rotate(79 26.0 13.8)"/><ellipse cx="16.6" cy="9.3" rx="2.4" ry="1.4" fill="#e9f1e4" opacity="0.67" transform="rotate(171 16.6 9.3)"/><ellipse cx="17.2" cy="20.6" rx="1.7" ry="1.0" fill="#c7dcc0" opacity="0.4" transform="rotate(15 17.2 20.6)"/><circle cx="20" cy="15" r="1.6" fill="#c9c24a" opacity="0.8"/><circle cx="14" cy="8" r="2.6" fill="#f4f7f2"/><circle cx="28" cy="6" r="2" fill="#f4f7f2"/><rect x="82" y="8" width="20" height="17" fill="#fff" stroke="#e1e4e4" stroke-width="0.7"/><rect x="88" y="12.75" width="8" height="1.5" fill="#666" opacity="0.73"/><rect x="42" y="11" width="11.5" height="3.6" fill="#6cc4b4" /><rect x="60" y="13.75" width="15" height="1.3" fill="#a3cfc6" opacity="0.68"/><rect x="43" y="19.05" width="8" height="1.3" fill="#a9d5cc" opacity="0.61"/><rect x="55" y="19.05" width="6" height="1.3" fill="#a9d5cc" opacity="0.61"/><rect x="64" y="19.05" width="11" height="1.3" fill="#a9d5cc" opacity="0.61"/><rect x="43" y="22.65" width="8" height="1.3" fill="#a9d5cc" opacity="0.61"/><rect x="55" y="22.65" width="6" height="1.3" fill="#a9d5cc" opacity="0.61"/><rect x="64" y="22.65" width="11" height="1.3" fill="#a9d5cc" opacity="0.61"/><rect x="47" y="34.25" width="56" height="1" fill="#e2ecea" opacity="0.55"/><rect x="9.5" y="37.75" width="12" height="1.8" fill="#4fae9c" opacity="0.79"/><rect x="9.5" y="40.75" width="9" height="1" fill="#4fae9c" opacity="0.3"/><rect x="9.5" y="44.45" width="60.48" height="1.2" fill="#b5dcd4" opacity="0.64"/><rect x="76.7" y="44.45" width="13.44" height="1.2" fill="#b5dcd4" opacity="0.64"/><path d="M12.5 48.7h77.28" stroke="#333" stroke-width="1.25" opacity="0.67" stroke-dasharray="3.3 0.5 5.8 0.5 5.2 0.5 2.0 0.5 3.0 0.5 3.7 0.4"/><rect x="9.9" y="48.1" width="1.1" height="1.1" fill="#333" opacity="0.8"/><rect x="9.5" y="55.05" width="26" height="1.8" fill="#4fae9c" opacity="0.79"/><rect x="9.5" y="58.05" width="19.5" height="1" fill="#4fae9c" opacity="0.3"/><rect x="9.5" y="62.05" width="50.4" height="1.2" fill="#b5dcd4" opacity="0.64"/><rect x="76.7" y="62.05" width="13.44" height="1.2" fill="#b5dcd4" opacity="0.64"/><path d="M9.5 66.7h73.2" stroke="#333" stroke-width="1.25" opacity="0.67" stroke-dasharray="2.4 0.5 5.4 0.5 4.1 0.5 3.5 0.4 2.4 0.5 4.4 0.4"/><path d="M9.5 70.05h70.9" stroke="#333" stroke-width="1.25" opacity="0.67" stroke-dasharray="4.9 0.4 5.8 0.5 5.4 0.3 2.3 0.4 3.4 0.5 5.3 0.4"/><path d="M9.5 73.4h71.82" stroke="#333" stroke-width="1.25" opacity="0.67" stroke-dasharray="4.6 0.4 2.1 0.4 2.9 0.4 2.0 0.5 5.6 0.3 4.3 0.3"/><rect x="9.5" y="79.75" width="19" height="1.8" fill="#4fae9c" opacity="0.79"/><rect x="9.5" y="82.75" width="14.25" height="1" fill="#4fae9c" opacity="0.3"/><rect x="9.5" y="86.75" width="54.6" height="1.2" fill="#b5dcd4" opacity="0.64"/><rect x="76.7" y="86.75" width="13.44" height="1.2" fill="#b5dcd4" opacity="0.64"/><path d="M9.5 92.1h72.87" stroke="#333" stroke-width="1.25" opacity="0.67" stroke-dasharray="3.7 0.5 2.3 0.5 3.5 0.5 2.7 0.4 3.1 0.4 4.9 0.4"/><path d="M9.5 95.4h60.48" stroke="#333" stroke-width="1.25" opacity="0.67" stroke-dasharray="5.9 0.4 2.9 0.5 4.1 0.3 4.1 0.3 3.5 0.4 4.7 0.5"/><rect x="9.5" y="101.05" width="22" height="1.8" fill="#4fae9c" opacity="0.79"/><rect x="9.5" y="104.05" width="16.5" height="1" fill="#4fae9c" opacity="0.3"/><path d="M12.5 108.7h65.76" stroke="#333" stroke-width="1.25" opacity="0.67" stroke-dasharray="3.5 0.3 3.6 0.4 4.6 0.4 3.4 0.3 5.3 0.4 5.5 0.3"/><rect x="9.9" y="108.1" width="1.1" height="1.1" fill="#333" opacity="0.8"/><path d="M12.5 112.1h64.32" stroke="#333" stroke-width="1.25" opacity="0.67" stroke-dasharray="3.7 0.4 5.0 0.5 4.1 0.4 4.9 0.4 3.0 0.4 2.0 0.5"/><rect x="9.9" y="111.5" width="1.1" height="1.1" fill="#333" opacity="0.8"/><path d="M12.5 115.5h28.56" stroke="#333" stroke-width="1.25" opacity="0.67" stroke-dasharray="2.2 0.3 4.5 0.5 4.5 0.5 5.2 0.5 5.9 0.4 3.4 0.3"/><rect x="9.9" y="114.9" width="1.1" height="1.1" fill="#333" opacity="0.8"/><rect x="9.5" y="120.55" width="11" height="1.8" fill="#4fae9c" opacity="0.79"/><rect x="9.5" y="123.55" width="8.25" height="1" fill="#4fae9c" opacity="0.3"/><path d="M9.5 128.2h79.45" stroke="#333" stroke-width="1.25" opacity="0.67" stroke-dasharray="5.5 0.3 3.1 0.5 4.7 0.3 3.4 0.5 3.8 0.3 5.6 0.3"/><path d="M9.5 131.3h80.99" stroke="#333" stroke-width="1.25" opacity="0.67" stroke-dasharray="4.5 0.4 5.8 0.3 4.4 0.3 5.9 0.3 4.1 0.5 5.5 0.3"/><path d="M9.5 134.4h67.2" stroke="#333" stroke-width="1.25" opacity="0.67" stroke-dasharray="5.5 0.5 3.3 0.5 2.9 0.3 2.7 0.4 5.3 0.4 6.0 0.5"/></svg>
<span class="t" style="left:1030.9px;top:553.7px;font-size:9.5px;line-height:11.4px;color:#555;transform:scaleX(0.862);">[Premium Only]Resume36</span>
<svg class="th" style="left:1153.8px;top:406.7px;box-shadow:0 0 2px rgba(0,0,0,0.13);" width="106.5" height="143" viewBox="0 0 107 143" preserveAspectRatio="none"><defs><linearGradient id="sea" x1="0" y1="0" x2="0" y2="1"><stop offset="0" stop-color="#3d8fc4"/><stop offset="0.42" stop-color="#6aaed4"/><stop offset="0.55" stop-color="#a9c4d6"/><stop offset="0.6" stop-color="#9fb2c2"/><stop offset="1" stop-color="#b9c3cc"/></linearGradient><linearGradient id="e43" x1="0" y1="0" x2="1" y2="0"><stop offset="0" stop-color="#d6e2ec"/><stop offset="0.07" stop-color="#fff"/><stop offset="0.93" stop-color="#fff"/><stop offset="1" stop-color="#d6e2ec"/></linearGradient></defs><rect x="0" y="0" width="107" height="143" fill="#fff" /><rect x="36" y="4.15" width="16" height="1.4" fill="#b9d6d0" opacity="0.71"/><rect x="58" y="4.15" width="14" height="1.4" fill="#b9d6d0" opacity="0.71"/><rect x="0" y="8.5" width="107" height="24.5" fill="url(#sea)" /><rect x="0" y="33" width="107" height="104" fill="url(#e43)" /><rect x="45" y="13" width="20" height="10" fill="#fff" rx="1"/><rect x="49.5" y="17.25" width="11" height="1.4" fill="#444" opacity="0.71"/><rect x="47" y="27.75" width="13" height="2.1" fill="#6f8494" opacity="0.67"/><rect x="0" y="137" width="107" height="6" fill="#a9bccb" /><rect x="9.5" y="37.25" width="12" height="1.8" fill="#3f9a90" opacity="0.79"/><rect x="9.5" y="40.25" width="9" height="1" fill="#3f9a90" opacity="0.3"/><rect x="9.5" y="43.95" width="60.48" height="1.2" fill="#c4dcd8" opacity="0.64"/><rect x="76.7" y="43.95" width="13.44" height="1.2" fill="#c4dcd8" opacity="0.64"/><path d="M12.5 48.2h77.28" stroke="#333" stroke-width="1.25" opacity="0.67" stroke-dasharray="2.2 0.5 2.6 0.4 4.7 0.5 3.8 0.4 2.1 0.4 3.5 0.5"/><rect x="9.9" y="47.6" width="1.1" height="1.1" fill="#333" opacity="0.8"/><rect x="9.5" y="54.55" width="26" height="1.8" fill="#3f9a90" opacity="0.79"/><rect x="9.5" y="57.55" width="19.5" height="1" fill="#3f9a90" opacity="0.3"/><rect x="9.5" y="61.55" width="50.4" height="1.2" fill="#c4dcd8" opacity="0.64"/><rect x="76.7" y="61.55" width="13.44" height="1.2" fill="#c4dcd8" opacity="0.64"/><path d="M9.5 66.2h71.13" stroke="#333" stroke-width="1.25" opacity="0.67" stroke-dasharray="4.2 0.5 2.7 0.4 2.1 0.3 2.0 0.3 4.1 0.5 4.8 0.4"/><path d="M9.5 69.55h71.1" stroke="#333" stroke-width="1.25" opacity="0.67" stroke-dasharray="4.8 0.4 2.3 0.5 4.5 0.3 2.3 0.3 5.8 0.3 4.5 0.5"/><path d="M9.5 72.9h71.82" stroke="#333" stroke-width="1.25" opacity="0.67" stroke-dasharray="2.1 0.4 3.9 0.5 2.8 0.4 3.0 0.3 4.7 0.5 3.7 0.3"/><rect x="9.5" y="79.25" width="19" height="1.8" fill="#3f9a90" opacity="0.79"/><rect x="9.5" y="82.25" width="14.25" height="1" fill="#3f9a90" opacity="0.3"/><rect x="9.5" y="86.25" width="54.6" height="1.2" fill="#c4dcd8" opacity="0.64"/><rect x="76.7" y="86.25" width="13.44" height="1.2" fill="#c4dcd8" opacity="0.64"/><path d="M9.5 91.6h70.1" stroke="#333" stroke-width="1.25" opacity="0.67" stroke-dasharray="4.0 0.3 3.4 0.3 2.0 0.4 2.5 0.4 5.0 0.3 4.5 0.3"/><path d="M9.5 94.9h60.48" stroke="#333" stroke-width="1.25" opacity="0.67" stroke-dasharray="5.2 0.5 2.8 0.5 4.9 0.3 3.6 0.5 5.7 0.3 3.0 0.5"/><rect x="9.5" y="100.55" width="22" height="1.8" fill="#3f9a90" opacity="0.79"/><rect x="9.5" y="103.55" width="16.5" height="1" fill="#3f9a90" opacity="0.3"/><path d="M12.5 108.2h70.6" stroke="#333" stroke-width="1.25" opacity="0.67" stroke-dasharray="3.6 0.4 5.4 0.4 4.1 0.4 5.8 0.3 2.3 0.4 5.3 0.5"/><rect x="9.9" y="107.6" width="1.1" height="1.1" fill="#333" opacity="0.8"/><path d="M12.5 111.6h65.23" stroke="#333" stroke-width="1.25" opacity="0.67" stroke-dasharray="5.7 0.4 5.9 0.5 2.4 0.5 3.9 0.3 3.9 0.3 5.0 0.4"/><rect x="9.9" y="111" width="1.1" height="1.1" fill="#333" opacity="0.8"/><path d="M12.5 115h28.56" stroke="#333" stroke-width="1.25" opacity="0.67" stroke-dasharray="2.4 0.4 4.0 0.5 3.1 0.3 3.4 0.3 3.3 0.5 2.7 0.4"/><rect x="9.9" y="114.4" width="1.1" height="1.1" fill="#333" opacity="0.8"/><rect x="9.5" y="120.05" width="11" height="1.8" fill="#3f9a90" opacity="0.79"/><rect x="9.5" y="123.05" width="8.25" height="1" fill="#3f9a90" opacity="0.3"/><path d="M9.5 127.7h78.56" stroke="#333" stroke-width="1.25" opacity="0.67" stroke-dasharray="3.7 0.4 3.4 0.4 3.6 0.3 3.7 0.3 2.4 0.4 5.9 0.4"/><path d="M9.5 130.8h80.19" stroke="#333" stroke-width="1.25" opacity="0.67" stroke-dasharray="5.7 0.5 4.3 0.4 4.1 0.4 5.8 0.3 3.5 0.5 4.4 0.4"/><path d="M9.5 133.9h67.2" stroke="#333" stroke-width="1.25" opacity="0.67" stroke-dasharray="5.0 0.4 5.4 0.5 2.1 0.4 3.5 0.4 4.2 0.4 4.6 0.5"/></svg>
<span class="t" style="left:1159.0px;top:553.7px;font-size:9.5px;line-height:11.4px;color:#555;transform:scaleX(0.862);">[Premium Only]Resume43</span>
<svg class="th" style="left:255.8px;top:590.6px;box-shadow:0 0 2px rgba(0,0,0,0.13);" width="107.2" height="143.2" viewBox="0 0 107 143" preserveAspectRatio="none"><defs><filter id="b3"><feGaussianBlur stdDeviation="1.3"/></filter></defs><rect x="0" y="0" width="107" height="143" fill="#fff" /><rect x="0.5" y="0.5" width="106" height="142" fill="none" stroke="#e2e4e8" stroke-width="1"/><rect x="10" y="14.5" width="27.5" height="117" fill="#3ea4c6" /><rect x="37.5" y="14.5" width="30" height="33" fill="#fdfdfb" /><rect x="67.5" y="14.5" width="29" height="61" fill="#3ea4c6" /><rect x="67.5" y="78" width="29" height="53.5" fill="#3ea4c6" /><rect x="67.5" y="68" width="29" height="7" fill="#f4ece6" /><rect x="10" y="49.5" width="27.5" height="3.4" fill="#dfe6d2" /><rect x="42" y="19" width="22" height="2.2" fill="#dcb88e" opacity="1.0"/><rect x="44" y="28.5" width="18" height="2.2" fill="#dcb88e" opacity="1.0"/><rect x="46" y="38" width="13" height="2.2" fill="#dcb88e" opacity="1.0"/><rect x="76.5" y="16" width="19.5" height="22" fill="#9a7a5a" /><g filter="url(#b3)"><circle cx="87" cy="24" r="5" fill="#d9a88a"/><circle cx="82" cy="30" r="5" fill="#6a4a3a"/><circle cx="92" cy="32" r="4" fill="#c9b49a"/></g><rect x="37.5" y="47.5" width="30" height="77" fill="#c4d4ae" /><g filter="url(#b3)"><rect x="37.5" y="47.5" width="30" height="30" fill="#d9e3c4" /><ellipse cx="50" cy="66" rx="6" ry="8" fill="#6a4a3a"/><ellipse cx="56" cy="78" rx="8" ry="12" fill="#e9b9a4"/><ellipse cx="50" cy="100" rx="10" ry="16" fill="#f6f2ee"/><ellipse cx="62" cy="92" rx="5" ry="14" fill="#8a7a8a"/><rect x="37.5" y="113" width="30" height="11.5" fill="#bcd88a" /></g><rect x="69" y="80" width="26" height="40" fill="#d9c9b9" /><g filter="url(#b3)"><ellipse cx="82" cy="92" rx="9" ry="6" fill="#f2e6da"/><ellipse cx="80" cy="106" rx="10" ry="7" fill="#e3b9a0"/><ellipse cx="88" cy="114" rx="6" ry="5" fill="#c9dcc0"/></g><rect x="70.5" y="69.25" width="23" height="1.4" fill="#c88aa8" opacity="0.71"/><rect x="70.5" y="71.75" width="23" height="1.1" fill="#d8a878" opacity="0.6"/><path d="M12 25.35h20.1" stroke="#8fd0e4" stroke-width="1.15" opacity="0.45" stroke-dasharray="5.4 0.5 3.0 0.4 3.8 0.5 5.2 0.3 2.1 0.5 3.7 0.5"/><path d="M12 28.75h19.8" stroke="#8fd0e4" stroke-width="1.15" opacity="0.45" stroke-dasharray="3.8 0.5 2.9 0.5 5.6 0.3 2.1 0.4 5.8 0.4 2.9 0.4"/><path d="M12 32.15h19.86" stroke="#8fd0e4" stroke-width="1.15" opacity="0.45" stroke-dasharray="2.9 0.4 4.0 0.4 2.9 0.4 3.8 0.4 2.1 0.5 4.2 0.5"/><path d="M12 35.55h15.4" stroke="#8fd0e4" stroke-width="1.15" opacity="0.45" stroke-dasharray="2.7 0.5 5.4 0.3 3.3 0.5 4.8 0.5 3.7 0.5 4.7 0.4"/><rect x="14" y="59.25" width="17" height="1.7" fill="#8fd0e4" opacity="0.78"/><rect x="17" y="65.75" width="1.8" height="1.7" fill="#9fd48a" opacity="0.78"/><rect x="17" y="69.75" width="1.8" height="1.7" fill="#9fd48a" opacity="0.78"/><rect x="17" y="73.75" width="1.8" height="1.7" fill="#9fd48a" opacity="0.78"/><rect x="17" y="77.75" width="1.8" height="1.7" fill="#9fd48a" opacity="0.78"/><rect x="17" y="81.75" width="1.8" height="1.7" fill="#9fd48a" opacity="0.78"/><rect x="13.5" y="95" width="18" height="2.2" fill="#d9f0f6" opacity="1.0"/><rect x="17" y="103.75" width="13" height="1.4" fill="#9fd48a" opacity="0.71"/><rect x="17" y="107.35" width="13" height="1.4" fill="#9fd48a" opacity="0.71"/><rect x="17" y="110.95" width="13" height="1.4" fill="#9fd48a" opacity="0.71"/><rect x="17" y="114.55" width="13" height="1.4" fill="#9fd48a" opacity="0.71"/><path d="M70 43.3h23.89" stroke="#8fd0e4" stroke-width="1.05" opacity="0.42" stroke-dasharray="5.8 0.3 2.3 0.5 4.9 0.5 3.2 0.5 4.4 0.4 2.6 0.4"/><path d="M70 46.4h22.54" stroke="#8fd0e4" stroke-width="1.05" opacity="0.42" stroke-dasharray="4.9 0.5 5.8 0.4 3.8 0.4 2.1 0.3 3.9 0.4 3.5 0.5"/><path d="M70 49.5h22.86" stroke="#8fd0e4" stroke-width="1.05" opacity="0.42" stroke-dasharray="4.2 0.4 2.1 0.4 2.5 0.4 6.0 0.5 2.7 0.5 5.2 0.5"/><path d="M70 52.6h23.78" stroke="#8fd0e4" stroke-width="1.05" opacity="0.42" stroke-dasharray="5.1 0.5 3.4 0.5 5.8 0.3 5.0 0.5 3.8 0.4 4.0 0.5"/><path d="M70 55.7h22.8" stroke="#8fd0e4" stroke-width="1.05" opacity="0.42" stroke-dasharray="5.3 0.4 5.5 0.5 3.8 0.4 5.7 0.5 3.9 0.4 3.3 0.5"/><path d="M70 58.8h22" stroke="#8fd0e4" stroke-width="1.05" opacity="0.42" stroke-dasharray="5.6 0.4 5.6 0.4 5.8 0.5 4.0 0.4 4.6 0.4 3.2 0.4"/><path d="M70 61.9h16.8" stroke="#8fd0e4" stroke-width="1.05" opacity="0.42" stroke-dasharray="4.0 0.5 4.5 0.3 5.3 0.5 5.6 0.3 5.0 0.3 4.6 0.4"/></svg>
<span class="t" style="left:257.9px;top:737.8px;font-size:9.5px;line-height:11.4px;color:#555;transform:scaleX(0.890);">Tri-Fold-Brochure-Template</span>
<svg class="th" style="left:384.5px;top:590.6px;box-shadow:0 0 2px rgba(0,0,0,0.13);" width="107" height="143.2" viewBox="0 0 107 143" preserveAspectRatio="none"><defs><linearGradient id="lh" x1="0" y1="0" x2="1" y2="1"><stop offset="0" stop-color="#c9cecc"/><stop offset="0.35" stop-color="#eef0ef"/><stop offset="0.7" stop-color="#e4e7e6"/><stop offset="1" stop-color="#eceeed"/></linearGradient><pattern id="grid" width="3.6" height="3.6" patternUnits="userSpaceOnUse" patternTransform="rotate(-38)"><path d="M0 0H3.6M0 0V3.6" stroke="#a3acaa" stroke-width="0.3"/></pattern><filter id="bll"><feGaussianBlur stdDeviation="0.9"/></filter></defs><rect x="0" y="0" width="107" height="143" fill="url(#lh)" /><rect x="0" y="0" width="107" height="143" fill="url(#grid)" opacity="0.5"/><path d="M0 0H28L0 24Z" fill="#b3b8b6"/><path d="M0 34L46 0H66L0 56Z" fill="#f6f7f6" opacity="0.85"/><path d="M0 64L38 34L52 50L6 96Z" fill="#f4f5f5" opacity="0.8"/><path d="M62 143L107 92V143Z" fill="#f7f8f7" opacity="0.85"/><path d="M0 112L34 143H0Z" fill="#f3f4f4" opacity="0.8"/><path d="M100 14L107 10V70L98 60Z" fill="#f2f4f3" opacity="0.9"/><path d="M30 0L50 14M36 0L56 12" stroke="#aab2b0" stroke-width="0.5"/><g filter="url(#bll)"><path d="M11 22L17 21L25 58L20 60Z" fill="#9fa7a4"/><path d="M12 26H22M13 34H24M15 44H25M17 52H26" stroke="#6f7976" stroke-width="1"/><circle cx="14" cy="22" r="2.2" fill="#4a5350"/><path d="M22 24L30 26L28 36" stroke="#8d9794" stroke-width="1.2" fill="none"/></g><path d="M27 35L30 33L86 112L83 115Z" fill="#96a09d"/><path d="M29 35L84 113" stroke="#d4d9d7" stroke-width="0.6"/><path d="M97 58L100 59L70 116L67 115Z" fill="#a8b0ae"/><circle cx="68" cy="115.5" r="1.7" fill="#3a4240"/><circle cx="85" cy="113" r="1.7" fill="#3a4240"/><path d="M43 76L70 50L99 74L72 102Z" fill="#7b8785"/><path d="M47 76L70 54.5L94.5 74L72 97.5Z" fill="#c9d2d0"/><path d="M57 66.5L70 54.5L83 64.5L70 77Z" fill="#a3aeac"/><path d="M70 77L83 64.5L94.5 74L82 87Z" fill="#e3e8e7"/><path d="M47 76L57 66.5L70 77L60 87Z" fill="#8d9896"/><path d="M57 66.5L70 77L62 87M70 77L82 87M77 62L85 69M83 76L89 70" stroke="#56625f" stroke-width="1.5" fill="none"/><path d="M73 71L78 74L85 68" stroke="#f6f8f7" stroke-width="1.8" fill="none"/><path d="M18 131H98V140H18Z" fill="#f3f5f4" stroke="#c2c8c6" stroke-width="0.5"/><ellipse cx="98" cy="135.5" rx="2.2" ry="4.5" fill="#e0e4e3" stroke="#b2b9b7" stroke-width="0.4"/><path d="M0 140H107V143H0Z" fill="#dfe3e2"/><rect x="39" y="5" width="63" height="11" fill="#f7f8f7" opacity="0.92"/><rect x="22.5" y="18.5" width="70" height="15.5" fill="#fbfbfb" opacity="0.97"/><text x="57.5" y="26.8" text-anchor="middle" font-family="'Liberation Serif',serif" font-weight="bold" font-size="7.4" fill="#1a1a1a" textLength="49" lengthAdjust="spacingAndGlyphs">Document Title</text><rect x="31.5" y="78" width="48" height="28" fill="#f4f6f5" opacity="0.78"/><rect x="33" y="81.75" width="6" height="1.3" fill="#666" opacity="0.68"/><rect x="33" y="86.75" width="10" height="1.5" fill="#555" opacity="0.73"/><rect x="33" y="92.25" width="4" height="1.3" fill="#666" opacity="0.68"/></svg>
<span class="t" style="left:396.0px;top:737.8px;font-size:9.5px;line-height:11.4px;color:#555;transform:scaleX(0.879);">letterhead-template-33</span>
<svg class="th" style="left:512.7px;top:590.6px;box-shadow:0 0 2px rgba(0,0,0,0.13);" width="106.1" height="143.2" viewBox="0 0 107 143" preserveAspectRatio="none"><defs><linearGradient id="g21" x1="0" y1="0" x2="0" y2="1"><stop offset="0" stop-color="#3d4a5c"/><stop offset="0.14" stop-color="#76859a"/><stop offset="0.36" stop-color="#c2c9d2"/><stop offset="0.5" stop-color="#d8dce1"/><stop offset="1" stop-color="#dfe2e6"/></linearGradient><linearGradient id="p21" x1="0" y1="0" x2="0" y2="1"><stop offset="0" stop-color="#fff" stop-opacity="0"/><stop offset="0.12" stop-color="#fff" stop-opacity="0.85"/><stop offset="0.3" stop-color="#fff"/><stop offset="1" stop-color="#fff"/></linearGradient></defs><rect x="0" y="0" width="107" height="143" fill="#fff" /><rect x="0" y="0" width="107" height="143" fill="url(#g21)" /><rect x="3.2" y="19" width="99.6" height="121" fill="#fff" /><rect x="5" y="4.25" width="35" height="2" fill="#eef0f3" opacity="0.83"/><rect x="5" y="7.25" width="6" height="1" fill="#aab4c0" opacity="0.55"/><circle cx="53.5" cy="18" r="8.3" fill="#e9eaec" stroke="#fff" stroke-width="1"/><circle cx="53.5" cy="15" r="3.6" fill="#2a2220"/><ellipse cx="53.5" cy="17" rx="2.4" ry="3" fill="#e3bfa6"/><path d="M46.6 22.5Q53.5 18.5 60.4 22.5Q58 26.3 53.5 26.3Q49 26.3 46.6 22.5Z" fill="#30343c"/><path d="M52.3 20.5L53.5 24L54.7 20.5Z" fill="#fff"/><rect x="48" y="29.5" width="11" height="3.2" fill="#2a2a2a" /><rect x="27" y="36.25" width="14" height="1.1" fill="#b4b4b4" opacity="0.6"/><rect x="47" y="36.25" width="10" height="1.1" fill="#b4b4b4" opacity="0.6"/><rect x="64" y="36.25" width="16" height="1.1" fill="#b4b4b4" opacity="0.6"/><rect x="19" y="39.5" width="68.5" height="4.4" fill="none" stroke="#999" stroke-width="0.5" rx="1"/><rect x="23" y="41.25" width="14" height="1.2" fill="#888" opacity="0.64"/><rect x="45" y="41.25" width="14" height="1.2" fill="#888" opacity="0.64"/><rect x="67" y="41.25" width="14" height="1.2" fill="#888" opacity="0.64"/><rect x="10" y="50.85" width="86" height="0.9" fill="#bbb" opacity="0.49"/><rect x="43.5" y="49.5" width="20" height="3.4" fill="#fff" stroke="#666" stroke-width="0.5" rx="0.8"/><rect x="46" y="50.55" width="15" height="1.4" fill="#222" opacity="0.71"/><rect x="10" y="56.25" width="17" height="1.1" fill="#aaa" opacity="0.6"/><rect x="33" y="56.25" width="37" height="1.1" fill="#aaa" opacity="0.6"/><rect x="78" y="56.25" width="14" height="1.1" fill="#aaa" opacity="0.6"/><rect x="10.5" y="59.4" width="1.1" height="1.1" fill="#222" /><rect x="14" y="59.55" width="77" height="1.2" fill="#444" opacity="0.64"/><rect x="10" y="67.85" width="86" height="0.9" fill="#bbb" opacity="0.49"/><rect x="36.5" y="66.5" width="34" height="3.4" fill="#fff" stroke="#666" stroke-width="0.5" rx="0.8"/><rect x="39" y="67.55" width="29" height="1.4" fill="#222" opacity="0.71"/><rect x="10" y="73.25" width="33" height="1.1" fill="#aaa" opacity="0.6"/><rect x="46" y="73.25" width="18" height="1.1" fill="#aaa" opacity="0.6"/><rect x="78" y="73.25" width="14" height="1.1" fill="#aaa" opacity="0.6"/><path d="M10 77.65h67.82" stroke="#444" stroke-width="1.15" opacity="0.64" stroke-dasharray="4.8 0.5 3.9 0.4 5.2 0.5 4.0 0.4 2.9 0.3 3.5 0.4"/><path d="M10 80.85h70.3" stroke="#444" stroke-width="1.15" opacity="0.64" stroke-dasharray="2.3 0.5 2.9 0.4 2.2 0.5 5.0 0.5 4.5 0.3 3.3 0.4"/><rect x="10" y="86.25" width="33" height="1.1" fill="#aaa" opacity="0.6"/><rect x="46" y="86.25" width="18" height="1.1" fill="#aaa" opacity="0.6"/><rect x="78" y="86.25" width="14" height="1.1" fill="#aaa" opacity="0.6"/><path d="M10 90.85h73.69" stroke="#444" stroke-width="1.15" opacity="0.64" stroke-dasharray="2.6 0.3 6.0 0.3 2.5 0.5 3.4 0.5 2.9 0.5 3.3 0.5"/><path d="M10 94.05h66.6" stroke="#444" stroke-width="1.15" opacity="0.64" stroke-dasharray="5.7 0.5 5.7 0.5 2.2 0.5 4.4 0.4 2.8 0.5 4.3 0.5"/><rect x="10" y="102.85" width="86" height="0.9" fill="#bbb" opacity="0.49"/><rect x="42" y="101.5" width="23" height="3.4" fill="#fff" stroke="#666" stroke-width="0.5" rx="0.8"/><rect x="44.5" y="102.55" width="18" height="1.4" fill="#222" opacity="0.71"/><rect x="10" y="107.55" width="30" height="1.2" fill="#666" opacity="0.64"/><rect x="45" y="107.55" width="20" height="1.2" fill="#666" opacity="0.64"/><rect x="10" y="110.25" width="9" height="1.2" fill="#666" opacity="0.64"/><path d="M10 114.65h73.44" stroke="#444" stroke-width="1.15" opacity="0.64" stroke-dasharray="5.8 0.5 2.3 0.4 3.7 0.4 2.5 0.3 3.8 0.4 3.8 0.3"/><path d="M10 117.85h68.82" stroke="#444" stroke-width="1.15" opacity="0.64" stroke-dasharray="2.3 0.5 3.7 0.4 4.9 0.4 2.2 0.5 4.4 0.5 4.5 0.5"/><rect x="10" y="123.35" width="86" height="0.9" fill="#bbb" opacity="0.49"/><rect x="38" y="122" width="31" height="3.4" fill="#fff" stroke="#666" stroke-width="0.5" rx="0.8"/><rect x="40.5" y="123.05" width="26" height="1.4" fill="#222" opacity="0.71"/><path d="M14 128.85h70.9" stroke="#444" stroke-width="1.15" opacity="0.64" stroke-dasharray="5.4 0.3 6.0 0.3 4.7 0.3 5.0 0.3 4.8 0.5 5.1 0.4"/><rect x="11.4" y="128.3" width="1.1" height="1.1" fill="#444" opacity="0.8"/><path d="M14 132.05h72.02" stroke="#444" stroke-width="1.15" opacity="0.64" stroke-dasharray="6.0 0.3 4.1 0.5 5.0 0.4 3.2 0.5 2.3 0.5 5.4 0.3"/><rect x="11.4" y="131.5" width="1.1" height="1.1" fill="#444" opacity="0.8"/><path d="M14 135.25h32.85" stroke="#444" stroke-width="1.15" opacity="0.64" stroke-dasharray="3.3 0.4 4.2 0.4 5.6 0.5 3.3 0.5 2.3 0.3 4.7 0.5"/><rect x="11.4" y="134.7" width="1.1" height="1.1" fill="#444" opacity="0.8"/></svg>
<span class="t" style="left:547.2px;top:737.8px;font-size:9.5px;line-height:11.4px;color:#555;transform:scaleX(0.805);">Resume21</span>
<svg class="th" style="left:641.2px;top:590.6px;box-shadow:0 0 2px rgba(0,0,0,0.13);" width="106.8" height="143.2" viewBox="0 0 107 143" preserveAspectRatio="none"><rect x="0" y="0" width="107" height="143" fill="#fff" /><rect x="0.5" y="0.5" width="106" height="142" fill="none" stroke="#dfe6ee" stroke-width="0.8"/><rect x="0" y="0" width="107" height="27.5" fill="#a3c4e2" /><path d="M0 27.5Q20 18 40 24Q60 16 80 22Q95 18 107 24V27.5Z" fill="#abcae7"/><ellipse cx="73" cy="10" rx="4.6" ry="5.3" fill="#a9afb3"/><path d="M71.2 15.1L73.0 18.7L74.8 15.1" stroke="#a9afb3" stroke-width="0.4" fill="none"/><rect x="71.8" y="18.3" width="2.3" height="1.8" fill="#a9afb3"/><ellipse cx="26" cy="10" rx="2.2" ry="2.5" fill="#6aa6a0"/><path d="M25.1 12.4L26.0 14.2L26.9 12.4" stroke="#6aa6a0" stroke-width="0.4" fill="none"/><rect x="25.4" y="14.0" width="1.1" height="0.9" fill="#6aa6a0"/><ellipse cx="88" cy="11" rx="1.4" ry="1.6" fill="#5a8ab4"/><path d="M87.4 12.5L88.0 13.7L88.6 12.5" stroke="#5a8ab4" stroke-width="0.4" fill="none"/><rect x="87.7" y="13.5" width="0.7" height="0.6" fill="#5a8ab4"/><ellipse cx="101" cy="12" rx="1" ry="1.1" fill="#5a8ab4"/><path d="M100.6 13.1L101.0 13.9L101.4 13.1" stroke="#5a8ab4" stroke-width="0.4" fill="none"/><rect x="100.8" y="13.8" width="0.5" height="0.4" fill="#5a8ab4"/><ellipse cx="46" cy="26" rx="5" ry="7" fill="#8fbce0"/><ellipse cx="14" cy="27" rx="6" ry="4" fill="#9ac4e4"/><rect x="47" y="3.25" width="12" height="1.7" fill="#d6e8f6" opacity="0.78"/><rect x="36" y="8.45" width="33" height="1.2" fill="#d6e8f6" opacity="0.64"/><rect x="49" y="18.5" width="9.5" height="7" fill="#fff" /><rect x="51.5" y="20.25" width="4.5" height="1.1" fill="#666" opacity="0.6"/><rect x="0" y="140.5" width="107" height="2.5" fill="#8fb4d8" /><rect x="9" y="32" width="3.3" height="3.3" fill="#5a8ec8" /><rect x="15" y="32.95" width="20" height="1.4" fill="#a9c6e4" opacity="0.71"/><rect x="15" y="37.25" width="40" height="1.25" fill="#5a5a5a" opacity="0.66"/><rect x="77" y="37.25" width="11" height="1.2" fill="#555" opacity="0.64"/><rect x="15" y="41" width="33" height="1.25" fill="#5a5a5a" opacity="0.66"/><rect x="15" y="44.75" width="44" height="1.25" fill="#5a5a5a" opacity="0.66"/><rect x="77" y="44.75" width="11" height="1.2" fill="#555" opacity="0.64"/><rect x="15" y="48.5" width="21" height="1.25" fill="#5a5a5a" opacity="0.66"/><rect x="9" y="52" width="3.3" height="3.3" fill="#5a8ec8" /><rect x="15" y="52.95" width="16" height="1.4" fill="#a9c6e4" opacity="0.71"/><rect x="15" y="59.55" width="28" height="1.25" fill="#5a5a5a" opacity="0.66"/><rect x="51" y="59.55" width="8" height="1.2" fill="#555" opacity="0.64"/><rect x="76" y="59.55" width="13" height="1.2" fill="#555" opacity="0.64"/><path d="M15 63.67h78.84" stroke="#5a5a5a" stroke-width="1.2" opacity="0.66" stroke-dasharray="5.8 0.5 5.4 0.5 5.0 0.5 2.9 0.5 4.3 0.4 3.8 0.4"/><path d="M15 67.33h79.57" stroke="#5a5a5a" stroke-width="1.2" opacity="0.66" stroke-dasharray="5.1 0.4 4.6 0.3 2.5 0.5 5.5 0.4 3.1 0.4 2.1 0.5"/><path d="M15 70.97h79.44" stroke="#5a5a5a" stroke-width="1.2" opacity="0.66" stroke-dasharray="4.8 0.3 3.8 0.5 2.2 0.5 4.1 0.5 4.7 0.4 3.4 0.4"/><path d="M15 74.62h78.4" stroke="#5a5a5a" stroke-width="1.2" opacity="0.66" stroke-dasharray="2.5 0.5 4.0 0.5 4.5 0.3 4.5 0.4 3.5 0.3 5.5 0.5"/><rect x="15" y="79.75" width="27" height="1.25" fill="#5a5a5a" opacity="0.66"/><rect x="76" y="79.75" width="13" height="1.2" fill="#555" opacity="0.64"/><path d="M15 84.17h74.25" stroke="#555" stroke-width="1.2" opacity="0.66" stroke-dasharray="2.9 0.3 5.4 0.4 3.1 0.5 3.7 0.4 2.5 0.4 3.4 0.3"/><path d="M15 87.72h73.85" stroke="#555" stroke-width="1.2" opacity="0.66" stroke-dasharray="3.8 0.5 4.6 0.3 4.5 0.5 4.8 0.4 2.3 0.3 2.7 0.4"/><path d="M15 91.27h74.87" stroke="#555" stroke-width="1.2" opacity="0.66" stroke-dasharray="5.8 0.3 4.2 0.4 2.8 0.5 5.2 0.3 2.1 0.4 2.8 0.5"/><path d="M15 94.82h72.26" stroke="#555" stroke-width="1.2" opacity="0.66" stroke-dasharray="3.5 0.4 2.5 0.4 3.9 0.4 5.2 0.4 5.2 0.4 3.8 0.5"/><path d="M15 98.38h72.62" stroke="#555" stroke-width="1.2" opacity="0.66" stroke-dasharray="2.6 0.4 5.3 0.3 3.8 0.3 4.0 0.5 2.7 0.3 3.1 0.5"/><path d="M15 101.92h76.29" stroke="#555" stroke-width="1.2" opacity="0.66" stroke-dasharray="3.3 0.4 2.4 0.3 3.6 0.4 2.4 0.4 5.8 0.4 3.8 0.4"/><path d="M15 105.47h78.14" stroke="#555" stroke-width="1.2" opacity="0.66" stroke-dasharray="4.6 0.4 4.6 0.3 5.7 0.3 2.8 0.5 4.1 0.4 3.6 0.5"/><path d="M15 109.02h77.25" stroke="#555" stroke-width="1.2" opacity="0.66" stroke-dasharray="2.4 0.5 4.9 0.5 3.3 0.5 4.3 0.3 3.5 0.5 2.3 0.5"/><path d="M15 112.57h28" stroke="#555" stroke-width="1.2" opacity="0.66" stroke-dasharray="4.8 0.5 4.3 0.4 2.2 0.3 2.1 0.4 4.5 0.4 3.4 0.5"/><rect x="9" y="118" width="3.3" height="3.3" fill="#5a8ec8" /><rect x="15" y="118.95" width="13" height="1.4" fill="#a9c6e4" opacity="0.71"/><path d="M15 124.38h75.52" stroke="#5a5a5a" stroke-width="1.2" opacity="0.66" stroke-dasharray="4.5 0.4 5.2 0.4 2.8 0.5 3.1 0.5 4.9 0.3 4.7 0.5"/><path d="M15 128.07h75.69" stroke="#5a5a5a" stroke-width="1.2" opacity="0.66" stroke-dasharray="2.9 0.4 3.9 0.4 5.3 0.4 4.1 0.3 4.4 0.4 6.0 0.4"/><path d="M15 131.78h75.95" stroke="#5a5a5a" stroke-width="1.2" opacity="0.66" stroke-dasharray="3.6 0.3 4.9 0.3 2.3 0.5 2.9 0.4 3.3 0.4 4.1 0.3"/><path d="M15 135.47h42.9" stroke="#5a5a5a" stroke-width="1.2" opacity="0.66" stroke-dasharray="2.1 0.5 2.5 0.4 5.2 0.3 2.3 0.4 3.6 0.5 5.9 0.3"/></svg>
<span class="t" style="left:676.1px;top:737.8px;font-size:9.5px;line-height:11.4px;color:#555;transform:scaleX(0.805);">Resume23</span>
<svg class="th" style="left:768.5px;top:590.6px;box-shadow:0 0 2px rgba(0,0,0,0.13);" width="108" height="143.2" viewBox="0 0 107 143" preserveAspectRatio="none"><rect x="0" y="0" width="107" height="143" fill="#fff" /><rect x="0.5" y="0.5" width="106" height="142" fill="none" stroke="#e2e4e8" stroke-width="0.8"/><g transform="translate(2,0)"><rect x="1.6" y="0" width="34.2" height="143" fill="#3b3b3d" /><circle cx="18.8" cy="16" r="8.2" fill="#4a4a4c" stroke="#3fa7a0" stroke-width="0.7"/><circle cx="18.8" cy="13.5" r="3.6" fill="#9a9a9c"/><path d="M12.5 22Q18.8 15 25 22Q22 24.3 18.8 24.3Q15.5 24.3 12.5 22Z" fill="#9a9a9c"/><rect x="6" y="31.25" width="26" height="1.9" fill="#2a6f7a" opacity="0.81"/><rect x="12" y="36.75" width="14" height="1.1" fill="#777" opacity="0.6"/><rect x="4" y="47" width="29" height="4.4" fill="#2f9ed4" /><rect x="6" y="48.55" width="9" height="1.3" fill="#bfe2f4" opacity="0.68"/><rect x="6" y="55.5" width="2.6" height="2.6" fill="#2f9ed4" /><rect x="12" y="54.75" width="5" height="1.3" fill="#bbb" opacity="0.68"/><rect x="12" y="58.25" width="12" height="1.2" fill="#777" opacity="0.64"/><rect x="6" y="65.5" width="2.6" height="2.6" fill="#2f9ed4" /><rect x="12" y="64.75" width="7" height="1.3" fill="#bbb" opacity="0.68"/><rect x="12" y="68.25" width="18" height="1.2" fill="#777" opacity="0.64"/><rect x="6" y="81.5" width="2.6" height="2.6" fill="#2f9ed4" /><rect x="12" y="80.75" width="6" height="1.3" fill="#bbb" opacity="0.68"/><rect x="12" y="84.25" width="17" height="1.2" fill="#777" opacity="0.64"/><rect x="6" y="91.5" width="2.6" height="2.6" fill="#2f9ed4" /><rect x="12" y="90.75" width="5" height="1.3" fill="#bbb" opacity="0.68"/><rect x="12" y="94.25" width="19" height="1.2" fill="#777" opacity="0.64"/><rect x="12" y="71.75" width="17" height="1.2" fill="#777" opacity="0.64"/><rect x="12" y="74.75" width="13" height="1.2" fill="#777" opacity="0.64"/><rect x="4" y="103" width="29" height="4.4" fill="#2f9ed4" /><rect x="6" y="104.55" width="11" height="1.3" fill="#bfe2f4" opacity="0.68"/><path d="M5.5 110.85h26.13" stroke="#8a8a8a" stroke-width="1.15" opacity="0.64" stroke-dasharray="5.1 0.4 4.0 0.4 6.0 0.4 2.6 0.4 3.0 0.4 3.1 0.3"/><path d="M5.5 114.15h25.18" stroke="#8a8a8a" stroke-width="1.15" opacity="0.64" stroke-dasharray="3.2 0.4 2.8 0.3 2.8 0.4 3.6 0.5 5.2 0.4 2.4 0.5"/><path d="M5.5 117.45h26.34" stroke="#8a8a8a" stroke-width="1.15" opacity="0.64" stroke-dasharray="3.6 0.5 3.2 0.5 5.3 0.5 5.8 0.4 4.2 0.5 5.2 0.4"/><path d="M5.5 120.75h24.67" stroke="#8a8a8a" stroke-width="1.15" opacity="0.64" stroke-dasharray="4.5 0.3 4.8 0.3 3.8 0.4 2.5 0.4 4.0 0.4 5.6 0.5"/><path d="M5.5 124.05h26.7" stroke="#8a8a8a" stroke-width="1.15" opacity="0.64" stroke-dasharray="3.0 0.3 3.5 0.3 4.8 0.4 2.5 0.4 3.6 0.5 3.8 0.4"/><path d="M5.5 127.35h26.13" stroke="#8a8a8a" stroke-width="1.15" opacity="0.64" stroke-dasharray="2.2 0.4 4.7 0.5 2.4 0.3 4.0 0.5 2.1 0.4 3.1 0.3"/><path d="M5.5 130.65h24.76" stroke="#8a8a8a" stroke-width="1.15" opacity="0.64" stroke-dasharray="3.1 0.4 2.4 0.5 5.5 0.5 2.3 0.5 4.5 0.3 3.5 0.5"/><path d="M5.5 133.95h26.87" stroke="#8a8a8a" stroke-width="1.15" opacity="0.64" stroke-dasharray="5.7 0.4 4.4 0.5 2.8 0.4 2.2 0.5 4.6 0.4 2.8 0.4"/><path d="M5.5 137.25h25.65" stroke="#8a8a8a" stroke-width="1.15" opacity="0.64" stroke-dasharray="5.0 0.3 3.3 0.4 3.0 0.5 4.9 0.5 4.6 0.5 3.1 0.4"/><circle cx="43.5" cy="8" r="2.4" fill="#2f9ed4"/><rect x="48" y="7.35" width="14" height="1.4" fill="#7ac4e8" opacity="0.71"/><rect x="66" y="7.75" width="35" height="1" fill="#cfe6f4" opacity="0.55"/><rect x="41.5" y="12.25" width="36" height="1.2" fill="#5ab4e0" opacity="0.64"/><rect x="41.5" y="15.75" width="14" height="1.3" fill="#222" opacity="0.68"/><path d="M41.5 19.8h56.6" stroke="#888" stroke-width="1.05" opacity="0.6" stroke-dasharray="5.1 0.5 4.1 0.3 3.6 0.5 3.9 0.5 5.6 0.4 3.5 0.4"/><path d="M41.5 22.9h56.41" stroke="#888" stroke-width="1.05" opacity="0.6" stroke-dasharray="4.5 0.5 2.1 0.4 5.2 0.5 3.2 0.4 5.4 0.3 5.1 0.5"/><path d="M41.5 26h56.1" stroke="#888" stroke-width="1.05" opacity="0.6" stroke-dasharray="5.5 0.4 4.5 0.5 3.9 0.4 3.6 0.4 3.9 0.5 2.2 0.3"/><path d="M41.5 29.1h29" stroke="#888" stroke-width="1.05" opacity="0.6" stroke-dasharray="2.9 0.3 3.2 0.3 2.7 0.5 5.8 0.5 4.7 0.5 5.1 0.4"/><circle cx="43.5" cy="35.5" r="2.4" fill="#2f9ed4"/><rect x="48" y="34.85" width="13" height="1.4" fill="#7ac4e8" opacity="0.71"/><rect x="65" y="35.25" width="36" height="1" fill="#cfe6f4" opacity="0.55"/><rect x="41.5" y="39.75" width="38" height="1.1" fill="#999" opacity="0.6"/><rect x="41.5" y="43.05" width="28" height="1.3" fill="#222" opacity="0.68"/><path d="M41.5 47.1h48.74" stroke="#888" stroke-width="1.05" opacity="0.6" stroke-dasharray="3.2 0.4 5.8 0.4 3.7 0.5 3.5 0.5 5.9 0.3 2.7 0.4"/><path d="M41.5 50.2h50.89" stroke="#888" stroke-width="1.05" opacity="0.6" stroke-dasharray="5.6 0.4 3.1 0.5 4.5 0.5 2.9 0.5 5.5 0.3 2.9 0.3"/><path d="M41.5 53.3h46.8" stroke="#888" stroke-width="1.05" opacity="0.6" stroke-dasharray="3.4 0.4 3.6 0.5 4.9 0.5 2.2 0.4 4.0 0.3 4.6 0.4"/><rect x="41.5" y="58.25" width="30" height="1.1" fill="#999" opacity="0.6"/><rect x="41.5" y="61.75" width="16" height="1.3" fill="#222" opacity="0.68"/><path d="M41.5 65.8h42.07" stroke="#888" stroke-width="1.05" opacity="0.6" stroke-dasharray="5.5 0.5 5.9 0.4 4.1 0.4 3.2 0.5 4.2 0.5 5.7 0.4"/><path d="M41.5 68.9h40.55" stroke="#888" stroke-width="1.05" opacity="0.6" stroke-dasharray="5.4 0.4 3.1 0.4 3.4 0.5 2.9 0.5 3.0 0.3 5.8 0.4"/><path d="M41.5 72h35.2" stroke="#888" stroke-width="1.05" opacity="0.6" stroke-dasharray="5.2 0.5 5.7 0.4 4.1 0.3 4.2 0.4 5.4 0.4 5.0 0.3"/><rect x="41.5" y="74.55" width="12" height="1.1" fill="#5ab4e0" opacity="0.6"/><rect x="41.5" y="77.25" width="22" height="1.3" fill="#222" opacity="0.68"/><path d="M41.5 81.1h45.15" stroke="#888" stroke-width="1.05" opacity="0.6" stroke-dasharray="2.3 0.3 3.5 0.4 5.3 0.5 5.6 0.4 6.0 0.4 4.5 0.5"/><path d="M41.5 84.2h43.7" stroke="#888" stroke-width="1.05" opacity="0.6" stroke-dasharray="4.7 0.3 4.5 0.4 2.4 0.4 2.6 0.4 3.1 0.3 2.9 0.5"/><circle cx="43.5" cy="89.5" r="2.4" fill="#2f9ed4"/><rect x="48" y="88.85" width="8" height="1.4" fill="#7ac4e8" opacity="0.71"/><rect x="60" y="89.25" width="41" height="1" fill="#cfe6f4" opacity="0.55"/><rect x="41.5" y="95.25" width="9" height="1.1" fill="#666" opacity="0.6"/><rect x="74" y="95.25" width="10" height="1.1" fill="#666" opacity="0.6"/><rect x="41.5" y="98.45" width="23" height="1.1" fill="#8ad0ec" opacity="0.6"/><rect x="41.5" y="99.95" width="24" height="1.4" fill="#2f9ed4" opacity="0.71"/><rect x="74" y="98.45" width="14" height="1.1" fill="#8ad0ec" opacity="0.6"/><rect x="74" y="99.95" width="25" height="1.4" fill="#2f9ed4" opacity="0.71"/><rect x="41.5" y="102.85" width="8" height="1.1" fill="#8ad0ec" opacity="0.6"/><rect x="41.5" y="104.35" width="20" height="1.4" fill="#2f9ed4" opacity="0.71"/><rect x="74" y="102.85" width="16" height="1.1" fill="#8ad0ec" opacity="0.6"/><rect x="74" y="104.35" width="23" height="1.4" fill="#2f9ed4" opacity="0.71"/><rect x="41.5" y="107.25" width="6" height="1.1" fill="#8ad0ec" opacity="0.6"/><rect x="41.5" y="108.75" width="17" height="1.4" fill="#2f9ed4" opacity="0.71"/><rect x="74" y="107.25" width="7" height="1.1" fill="#8ad0ec" opacity="0.6"/><rect x="74" y="108.75" width="26" height="1.4" fill="#2f9ed4" opacity="0.71"/><rect x="41.5" y="111.65" width="11" height="1.1" fill="#8ad0ec" opacity="0.6"/><rect x="41.5" y="113.15" width="22" height="1.4" fill="#2f9ed4" opacity="0.71"/><rect x="74" y="111.65" width="9" height="1.1" fill="#8ad0ec" opacity="0.6"/><rect x="74" y="113.15" width="20" height="1.4" fill="#2f9ed4" opacity="0.71"/><circle cx="43.5" cy="119.5" r="2.4" fill="#2f9ed4"/><rect x="48" y="118.85" width="22" height="1.4" fill="#7ac4e8" opacity="0.71"/><rect x="74" y="119.25" width="27" height="1" fill="#cfe6f4" opacity="0.55"/><path d="M41.5 124.8h47.98" stroke="#888" stroke-width="1.05" opacity="0.6" stroke-dasharray="2.2 0.3 4.7 0.5 3.6 0.5 4.8 0.5 4.9 0.5 2.9 0.4"/><path d="M41.5 127.9h49.65" stroke="#888" stroke-width="1.05" opacity="0.6" stroke-dasharray="5.1 0.3 5.6 0.4 2.4 0.5 4.1 0.5 5.2 0.5 2.2 0.5"/><path d="M41.5 131h48.47" stroke="#888" stroke-width="1.05" opacity="0.6" stroke-dasharray="5.4 0.3 4.1 0.4 4.7 0.5 3.4 0.5 4.5 0.4 4.5 0.4"/><path d="M41.5 134.1h49.75" stroke="#888" stroke-width="1.05" opacity="0.6" stroke-dasharray="5.4 0.4 5.9 0.5 2.1 0.5 3.2 0.4 3.0 0.5 5.7 0.5"/><path d="M41.5 137.2h47.5" stroke="#888" stroke-width="1.05" opacity="0.6" stroke-dasharray="2.2 0.3 2.6 0.4 2.1 0.5 2.3 0.5 3.0 0.4 4.2 0.4"/></g></svg>
<span class="t" style="left:804.0px;top:737.8px;font-size:9.5px;line-height:11.4px;color:#555;transform:scaleX(0.805);">Resume19</span>
<svg class="th" style="left:896.7px;top:590.6px;box-shadow:0 0 2px rgba(0,0,0,0.13);" width="107.6" height="143.2" viewBox="0 0 107 143" preserveAspectRatio="none"><rect x="0" y="0" width="107" height="143" fill="#fff" /><rect x="0.5" y="0.5" width="106" height="142" fill="none" stroke="#e2e4e8" stroke-width="0.8"/><circle cx="15" cy="12.5" r="8.2" fill="#fff" stroke="#777" stroke-width="0.7"/><circle cx="15" cy="10.5" r="3.5" fill="#9c9ca0"/><path d="M9 18Q15 11.5 21 18Q18 20.3 15 20.3Q12 20.3 9 18Z" fill="#9c9ca0"/><rect x="28" y="6" width="9" height="3.8" fill="#ececec" /><rect x="29.5" y="7.35" width="6" height="1.2" fill="#777" opacity="0.64"/><rect x="50" y="6" width="17" height="3.8" fill="#ececec" /><rect x="51.5" y="7.35" width="14" height="1.2" fill="#777" opacity="0.64"/><rect x="75" y="6" width="17" height="3.8" fill="#ececec" /><rect x="76.5" y="7.35" width="14" height="1.2" fill="#777" opacity="0.64"/><rect x="28" y="14.25" width="8" height="1.2" fill="#555" opacity="0.64"/><rect x="51" y="14.25" width="9" height="1.2" fill="#555" opacity="0.64"/><rect x="75" y="14.25" width="17" height="1.3" fill="#444" opacity="0.68"/><rect x="28" y="17.85" width="18" height="1.2" fill="#555" opacity="0.64"/><rect x="51" y="17.85" width="17" height="1.2" fill="#555" opacity="0.64"/><rect x="75" y="17.85" width="23" height="1.3" fill="#444" opacity="0.68"/><rect x="2" y="23.25" width="103" height="1.3" fill="#5a86b8" opacity="0.68"/><rect x="8.4" y="24" width="0.6" height="114" fill="#9ab4d0" /><path d="M4 27H28L26 29L28 31H4Z" fill="#2c5e9c"/><path d="M4 31L8.4 31L8.4 32.6Z" fill="#1a3c68"/><rect x="10" y="28.25" width="14" height="1.4" fill="#9ab8dc" opacity="0.71"/><rect x="11" y="35.25" width="16" height="1.2" fill="#2c5e9c" opacity="0.64"/><rect x="34" y="35.25" width="31" height="1.2" fill="#444" opacity="0.64"/><rect x="72" y="35.25" width="24" height="1.2" fill="#444" opacity="0.64"/><path d="M16 39.15h55.13" stroke="#444" stroke-width="1.15" opacity="0.64" stroke-dasharray="3.8 0.4 3.5 0.5 2.6 0.4 5.1 0.5 5.6 0.4 3.4 0.4"/><rect x="13.4" y="38.6" width="1.1" height="1.1" fill="#444" opacity="0.8"/><path d="M16 42.45h29" stroke="#444" stroke-width="1.15" opacity="0.64" stroke-dasharray="2.5 0.3 4.1 0.4 4.3 0.5 6.0 0.5 3.3 0.4 5.6 0.4"/><rect x="13.4" y="41.9" width="1.1" height="1.1" fill="#444" opacity="0.8"/><path d="M4 46.5H28L26 48.5L28 50.5H4Z" fill="#2c5e9c"/><path d="M4 50.5L8.4 50.5L8.4 52.1Z" fill="#1a3c68"/><rect x="10" y="47.75" width="14" height="1.4" fill="#9ab8dc" opacity="0.71"/><rect x="11" y="54.25" width="20" height="1.2" fill="#2c5e9c" opacity="0.64"/><rect x="51" y="54.25" width="17" height="1.2" fill="#444" opacity="0.64"/><rect x="84" y="54.25" width="11" height="1.2" fill="#444" opacity="0.64"/><path d="M16 58.15h74.99" stroke="#333" stroke-width="1.15" opacity="0.64" stroke-dasharray="4.0 0.4 5.9 0.5 5.2 0.5 2.6 0.5 3.7 0.4 2.4 0.4"/><rect x="13.4" y="57.6" width="1.1" height="1.1" fill="#333" opacity="0.8"/><path d="M16 61.45h80.7" stroke="#333" stroke-width="1.15" opacity="0.64" stroke-dasharray="2.5 0.3 3.3 0.4 4.0 0.4 2.7 0.3 3.4 0.4 4.2 0.4"/><rect x="13.4" y="60.9" width="1.1" height="1.1" fill="#333" opacity="0.8"/><path d="M16 64.75h79.67" stroke="#333" stroke-width="1.15" opacity="0.64" stroke-dasharray="3.8 0.4 4.6 0.5 4.6 0.3 3.2 0.5 5.9 0.4 2.9 0.3"/><rect x="13.4" y="64.2" width="1.1" height="1.1" fill="#333" opacity="0.8"/><path d="M16 68.05h74.81" stroke="#333" stroke-width="1.15" opacity="0.64" stroke-dasharray="2.3 0.5 5.8 0.4 2.1 0.5 4.5 0.5 3.2 0.5 5.2 0.5"/><rect x="13.4" y="67.5" width="1.1" height="1.1" fill="#333" opacity="0.8"/><path d="M16 71.35h73.8" stroke="#333" stroke-width="1.15" opacity="0.64" stroke-dasharray="4.7 0.5 3.8 0.5 2.4 0.4 3.5 0.4 5.4 0.3 3.7 0.4"/><rect x="13.4" y="70.8" width="1.1" height="1.1" fill="#333" opacity="0.8"/><rect x="11" y="77.75" width="20" height="1.2" fill="#2c5e9c" opacity="0.64"/><rect x="51" y="77.75" width="14" height="1.2" fill="#444" opacity="0.64"/><rect x="74" y="77.75" width="20" height="1.2" fill="#444" opacity="0.64"/><path d="M16 81.65h77.87" stroke="#333" stroke-width="1.15" opacity="0.64" stroke-dasharray="5.4 0.3 3.5 0.3 4.6 0.3 3.2 0.5 2.2 0.3 3.2 0.5"/><rect x="13.4" y="81.1" width="1.1" height="1.1" fill="#333" opacity="0.8"/><path d="M16 84.95h77.7" stroke="#333" stroke-width="1.15" opacity="0.64" stroke-dasharray="4.5 0.5 2.9 0.4 2.7 0.5 2.1 0.5 3.4 0.4 2.7 0.5"/><rect x="13.4" y="84.4" width="1.1" height="1.1" fill="#333" opacity="0.8"/><path d="M16 88.25h76.4" stroke="#333" stroke-width="1.15" opacity="0.64" stroke-dasharray="3.8 0.5 4.4 0.4 2.9 0.5 4.9 0.5 4.2 0.5 2.5 0.4"/><rect x="13.4" y="87.7" width="1.1" height="1.1" fill="#333" opacity="0.8"/><path d="M16 91.55h80.46" stroke="#333" stroke-width="1.15" opacity="0.64" stroke-dasharray="4.6 0.5 4.6 0.4 4.2 0.4 5.8 0.4 3.0 0.4 2.6 0.5"/><rect x="13.4" y="91" width="1.1" height="1.1" fill="#333" opacity="0.8"/><path d="M16 94.85h53.3" stroke="#333" stroke-width="1.15" opacity="0.64" stroke-dasharray="4.3 0.3 3.0 0.5 3.1 0.5 3.7 0.3 5.9 0.5 3.0 0.4"/><rect x="13.4" y="94.3" width="1.1" height="1.1" fill="#333" opacity="0.8"/><path d="M4 101.5H28L26 103.5L28 105.5H4Z" fill="#2c5e9c"/><path d="M4 105.5L8.4 105.5L8.4 107.1Z" fill="#1a3c68"/><rect x="10" y="102.75" width="14" height="1.4" fill="#9ab8dc" opacity="0.71"/><path d="M16 110.15h62.28" stroke="#333" stroke-width="1.15" opacity="0.64" stroke-dasharray="5.7 0.3 2.0 0.5 3.3 0.3 4.0 0.4 5.0 0.5 4.2 0.5"/><rect x="13.4" y="109.6" width="1.1" height="1.1" fill="#333" opacity="0.8"/><path d="M16 113.45h59.27" stroke="#333" stroke-width="1.15" opacity="0.64" stroke-dasharray="3.9 0.5 4.9 0.5 2.5 0.5 2.2 0.5 2.6 0.4 4.7 0.4"/><rect x="13.4" y="112.9" width="1.1" height="1.1" fill="#333" opacity="0.8"/><path d="M16 116.75h62.72" stroke="#333" stroke-width="1.15" opacity="0.64" stroke-dasharray="2.0 0.4 3.7 0.4 2.5 0.3 4.9 0.4 3.9 0.3 5.0 0.5"/><rect x="13.4" y="116.2" width="1.1" height="1.1" fill="#333" opacity="0.8"/><path d="M4 122H23L21 124L23 126H4Z" fill="#2c5e9c"/><path d="M4 126L8.4 126L8.4 127.6Z" fill="#1a3c68"/><rect x="10" y="123.25" width="9" height="1.4" fill="#9ab8dc" opacity="0.71"/><path d="M16 130.65h53.36" stroke="#333" stroke-width="1.15" opacity="0.64" stroke-dasharray="4.5 0.3 5.6 0.3 3.8 0.5 5.6 0.4 4.7 0.4 5.4 0.4"/><rect x="13.4" y="130.1" width="1.1" height="1.1" fill="#333" opacity="0.8"/><path d="M16 134.05h49.3" stroke="#333" stroke-width="1.15" opacity="0.64" stroke-dasharray="4.7 0.5 3.9 0.4 2.0 0.4 3.7 0.5 3.8 0.5 4.7 0.5"/><rect x="13.4" y="133.5" width="1.1" height="1.1" fill="#333" opacity="0.8"/></svg>
<span class="t" style="left:934.0px;top:737.8px;font-size:9.5px;line-height:11.4px;color:#555;transform:scaleX(0.812);">Resume8</span>
<svg class="th" style="left:1025.4px;top:590.6px;box-shadow:0 0 2px rgba(0,0,0,0.13);" width="107" height="143.2" viewBox="0 0 107 143" preserveAspectRatio="none"><rect x="0" y="0" width="107" height="143" fill="#fff" /><rect x="0.5" y="0.5" width="106" height="142" fill="none" stroke="#e2e4e8" stroke-width="0.8"/><rect x="0" y="0" width="28.5" height="143" fill="#3d3d3f" /><rect x="8.5" y="8" width="12.5" height="19.5" fill="#fff" /><rect x="12.5" y="15.75" width="5" height="1.1" fill="#bbb" opacity="0.6"/><rect x="6.5" y="34.5" width="11" height="1.8" fill="#e8e8e8" opacity="1.0"/><rect x="6" y="41.5" width="24.5" height="4" fill="#2b8fc0" rx="2"/><rect x="8.5" y="42.85" width="18" height="1.2" fill="#8ad0f0" opacity="0.64"/><rect x="6.5" y="47.75" width="7" height="1.2" fill="#a4a4a4" opacity="0.64"/><rect x="6.5" y="51.25" width="12" height="1.2" fill="#a4a4a4" opacity="0.64"/><rect x="6.5" y="54.75" width="15" height="1.2" fill="#a4a4a4" opacity="0.64"/><rect x="6.5" y="58.25" width="20" height="1.2" fill="#a4a4a4" opacity="0.64"/><rect x="6" y="72.5" width="24.5" height="4" fill="#2b8fc0" rx="2"/><rect x="8.5" y="73.85" width="18" height="1.2" fill="#8ad0f0" opacity="0.64"/><rect x="6.5" y="78.75" width="20" height="1.2" fill="#a4a4a4" opacity="0.64"/><rect x="6.5" y="82.25" width="12" height="1.2" fill="#a4a4a4" opacity="0.64"/><rect x="6.5" y="85.75" width="21" height="1.2" fill="#a4a4a4" opacity="0.64"/><rect x="6.5" y="89.25" width="20" height="1.2" fill="#a4a4a4" opacity="0.64"/><rect x="6" y="103.5" width="24.5" height="4" fill="#2b8fc0" rx="2"/><rect x="8.5" y="104.85" width="18" height="1.2" fill="#8ad0f0" opacity="0.64"/><rect x="6.5" y="110.25" width="15" height="1.2" fill="#a4a4a4" opacity="0.64"/><rect x="6.5" y="116.25" width="20" height="1.2" fill="#a4a4a4" opacity="0.64"/><rect x="35" y="7.65" width="68" height="0.9" fill="#e6e6e6" opacity="0.49"/><rect x="35" y="9.25" width="16" height="1.3" fill="#777" opacity="0.68"/><rect x="35" y="11.75" width="68" height="0.9" fill="#e6e6e6" opacity="0.49"/><rect x="38.5" y="15.75" width="20" height="1.2" fill="#333" opacity="0.64"/><rect x="75" y="15.75" width="8" height="1.2" fill="#444" opacity="0.64"/><rect x="38.5" y="19.45" width="14" height="1.2" fill="#555" opacity="0.64"/><rect x="36" y="23.2" width="0.9" height="0.9" fill="#333" /><rect x="36" y="27" width="0.9" height="0.9" fill="#333" /><rect x="36" y="45.8" width="0.9" height="0.9" fill="#333" /><rect x="38.5" y="23.25" width="57" height="1.2" fill="#444" opacity="0.64"/><path d="M38.5 27.65h60.07" stroke="#333" stroke-width="1.15" opacity="0.64" stroke-dasharray="5.0 0.4 4.8 0.5 2.9 0.5 4.2 0.3 3.0 0.4 3.4 0.3"/><path d="M38.5 31.4h61.16" stroke="#333" stroke-width="1.15" opacity="0.64" stroke-dasharray="2.7 0.5 4.5 0.4 4.0 0.4 4.1 0.3 2.2 0.5 4.6 0.5"/><path d="M38.5 35.15h60.44" stroke="#333" stroke-width="1.15" opacity="0.64" stroke-dasharray="2.6 0.3 4.7 0.4 4.5 0.3 2.2 0.3 3.2 0.4 5.7 0.4"/><path d="M38.5 38.9h46.5" stroke="#333" stroke-width="1.15" opacity="0.64" stroke-dasharray="5.1 0.5 2.7 0.4 3.9 0.3 2.8 0.4 3.1 0.4 2.2 0.5"/><rect x="38.5" y="42.05" width="28" height="1.2" fill="#444" opacity="0.64"/><rect x="38.5" y="45.75" width="15" height="1.2" fill="#555" opacity="0.64"/><path d="M38.5 50.15h57.88" stroke="#333" stroke-width="1.15" opacity="0.64" stroke-dasharray="4.0 0.5 4.5 0.4 5.1 0.3 3.0 0.4 4.4 0.4 5.4 0.5"/><path d="M38.5 53.9h57.8" stroke="#333" stroke-width="1.15" opacity="0.64" stroke-dasharray="3.7 0.4 2.0 0.4 3.9 0.4 2.3 0.3 2.9 0.3 4.5 0.3"/><path d="M38.5 57.65h56.73" stroke="#333" stroke-width="1.15" opacity="0.64" stroke-dasharray="5.8 0.5 4.2 0.4 3.0 0.5 4.1 0.3 4.8 0.3 2.4 0.3"/><path d="M38.5 61.4h57.87" stroke="#333" stroke-width="1.15" opacity="0.64" stroke-dasharray="3.3 0.4 5.4 0.5 4.4 0.3 4.9 0.4 3.1 0.4 4.3 0.5"/><path d="M38.5 65.15h58.9" stroke="#333" stroke-width="1.15" opacity="0.64" stroke-dasharray="5.1 0.5 3.3 0.5 4.8 0.4 6.0 0.5 2.7 0.3 4.9 0.3"/><rect x="35" y="80.15" width="68" height="0.9" fill="#e6e6e6" opacity="0.49"/><rect x="35" y="81.75" width="18" height="1.3" fill="#777" opacity="0.68"/><rect x="35" y="84.25" width="68" height="0.9" fill="#e6e6e6" opacity="0.49"/><path d="M40 89.38h30.93" stroke="#333" stroke-width="1.2" opacity="0.66" stroke-dasharray="4.1 0.4 3.8 0.4 3.0 0.3 3.5 0.4 4.7 0.4 4.8 0.5"/><rect x="37.4" y="88.8" width="1.1" height="1.1" fill="#333" opacity="0.8"/><path d="M40 93.12h28.06" stroke="#333" stroke-width="1.2" opacity="0.66" stroke-dasharray="2.6 0.4 5.6 0.3 5.0 0.5 2.4 0.5 2.6 0.5 3.6 0.5"/><rect x="37.4" y="92.55" width="1.1" height="1.1" fill="#333" opacity="0.8"/><path d="M40 96.88h28.47" stroke="#333" stroke-width="1.2" opacity="0.66" stroke-dasharray="5.0 0.3 2.6 0.4 3.7 0.4 4.0 0.5 2.0 0.4 2.2 0.3"/><rect x="37.4" y="96.3" width="1.1" height="1.1" fill="#333" opacity="0.8"/><path d="M40 100.62h30.29" stroke="#333" stroke-width="1.2" opacity="0.66" stroke-dasharray="4.1 0.4 2.2 0.5 5.7 0.5 5.2 0.5 4.8 0.4 4.7 0.4"/><rect x="37.4" y="100.05" width="1.1" height="1.1" fill="#333" opacity="0.8"/><path d="M40 104.38h29.45" stroke="#333" stroke-width="1.2" opacity="0.66" stroke-dasharray="3.2 0.4 5.6 0.4 2.4 0.5 2.7 0.4 4.9 0.5 4.9 0.3"/><rect x="37.4" y="103.8" width="1.1" height="1.1" fill="#333" opacity="0.8"/><rect x="35" y="107.65" width="68" height="0.9" fill="#e6e6e6" opacity="0.49"/><rect x="35" y="109.25" width="15" height="1.3" fill="#777" opacity="0.68"/><rect x="35" y="111.75" width="68" height="0.9" fill="#e6e6e6" opacity="0.49"/><path d="M38.5 117.15h53.71" stroke="#333" stroke-width="1.15" opacity="0.64" stroke-dasharray="5.2 0.5 3.5 0.4 2.3 0.3 4.9 0.5 3.1 0.5 4.5 0.3"/><path d="M38.5 120.9h49.84" stroke="#333" stroke-width="1.15" opacity="0.64" stroke-dasharray="3.7 0.3 2.0 0.4 5.6 0.4 3.8 0.5 3.6 0.5 4.6 0.4"/><path d="M38.5 124.65h48.61" stroke="#333" stroke-width="1.15" opacity="0.64" stroke-dasharray="4.0 0.5 3.0 0.4 5.7 0.5 2.6 0.5 5.1 0.4 5.5 0.5"/><path d="M38.5 128.4h50.65" stroke="#333" stroke-width="1.15" opacity="0.64" stroke-dasharray="3.1 0.3 2.7 0.4 3.0 0.3 2.4 0.3 5.5 0.3 3.8 0.4"/><path d="M38.5 132.15h50.94" stroke="#333" stroke-width="1.15" opacity="0.64" stroke-dasharray="4.2 0.5 2.2 0.3 3.9 0.4 4.3 0.5 2.8 0.4 5.4 0.4"/><path d="M38.5 135.9h40.5" stroke="#333" stroke-width="1.15" opacity="0.64" stroke-dasharray="3.5 0.5 3.5 0.4 2.2 0.5 3.9 0.4 5.7 0.3 3.8 0.3"/><rect x="36" y="116.6" width="0.9" height="0.9" fill="#333" /><rect x="36" y="124.1" width="0.9" height="0.9" fill="#333" /><rect x="36" y="131.6" width="0.9" height="0.9" fill="#333" /><rect x="36" y="135.3" width="0.9" height="0.9" fill="#333" /></svg>
<span class="t" style="left:1060.4px;top:737.8px;font-size:9.5px;line-height:11.4px;color:#555;transform:scaleX(0.805);">Resume24</span>
<svg class="th" style="left:1154.3px;top:590.6px;box-shadow:0 0 2px rgba(0,0,0,0.13);" width="106" height="143.2" viewBox="0 0 107 143" preserveAspectRatio="none"><rect x="0" y="0" width="107" height="143" fill="#fff" /><rect x="0.5" y="0.5" width="106" height="142" fill="none" stroke="#e2e4e8" stroke-width="0.8"/><rect x="1" y="1" width="14" height="141" fill="#4aa6bc" /><rect x="6.6" y="42" width="1.2" height="47" fill="#d4eef4" opacity="0.9"/><rect x="45.5" y="15.25" width="21" height="1.9" fill="#222" opacity="0.81"/><rect x="45.5" y="17.75" width="21" height="0.9" fill="#444" opacity="0.49"/><rect x="18" y="27.75" width="3.5" height="1.3" fill="#333" opacity="0.68"/><rect x="60" y="27.75" width="8" height="1.3" fill="#333" opacity="0.68"/><rect x="18" y="31.55" width="3.5" height="1.3" fill="#333" opacity="0.68"/><rect x="60" y="31.55" width="7" height="1.3" fill="#333" opacity="0.68"/><rect x="18" y="40.05" width="11" height="1.6" fill="#222" opacity="0.76"/><rect x="18" y="47.35" width="3" height="1.3" fill="#222" opacity="0.68"/><rect x="18" y="50.95" width="12" height="1.3" fill="#222" opacity="0.68"/><rect x="18" y="54.55" width="10" height="1.3" fill="#222" opacity="0.68"/><rect x="18" y="58.15" width="9" height="1.3" fill="#222" opacity="0.68"/><rect x="18" y="61.75" width="9" height="1.3" fill="#222" opacity="0.68"/><rect x="18" y="65.35" width="11" height="1.3" fill="#222" opacity="0.68"/><rect x="18" y="68.95" width="21" height="1.3" fill="#222" opacity="0.68"/><rect x="18" y="78.75" width="15" height="1.6" fill="#222" opacity="0.76"/><rect x="21.5" y="85.75" width="0.8" height="1.3" fill="#444" opacity="0.68"/><rect x="24" y="86.35" width="39" height="0.9" fill="#bbb" opacity="0.49"/><rect x="21.5" y="89.35" width="0.8" height="1.3" fill="#444" opacity="0.68"/><rect x="24" y="89.95" width="39" height="0.9" fill="#bbb" opacity="0.49"/><rect x="21.5" y="92.95" width="0.8" height="1.3" fill="#444" opacity="0.68"/><rect x="24" y="93.55" width="39" height="0.9" fill="#bbb" opacity="0.49"/><rect x="21.5" y="96.55" width="0.8" height="1.3" fill="#444" opacity="0.68"/><rect x="24" y="97.15" width="39" height="0.9" fill="#bbb" opacity="0.49"/><rect x="18" y="102.75" width="6" height="1.6" fill="#222" opacity="0.76"/><rect x="18" y="108" width="77" height="21" fill="none" stroke="#ddd" stroke-width="0.4"/><path d="M37 108V129M56.5 108V129M76 108V129" stroke="#ddd" stroke-width="0.4"/><rect x="18" y="111.25" width="77" height="0.85" fill="#e2e2e2" opacity="0.45"/><rect x="18" y="114.75" width="77" height="0.85" fill="#e2e2e2" opacity="0.45"/><rect x="18" y="118.25" width="77" height="0.85" fill="#e2e2e2" opacity="0.45"/><rect x="18" y="121.75" width="77" height="0.85" fill="#e2e2e2" opacity="0.45"/><rect x="18" y="125.25" width="77" height="0.85" fill="#e2e2e2" opacity="0.45"/><rect x="18.5" y="109.15" width="4" height="1.3" fill="#333" opacity="0.68"/><rect x="18.5" y="112.65" width="4" height="1.2" fill="#666" opacity="0.64"/><rect x="18.5" y="116.15" width="4" height="1.2" fill="#666" opacity="0.64"/><rect x="18.5" y="119.65" width="4" height="1.2" fill="#666" opacity="0.64"/><rect x="18.5" y="123.15" width="4" height="1.2" fill="#666" opacity="0.64"/><rect x="18.5" y="126.65" width="4" height="1.2" fill="#666" opacity="0.64"/><rect x="38" y="109.15" width="4" height="1.3" fill="#333" opacity="0.68"/><rect x="38" y="112.65" width="15" height="1.2" fill="#666" opacity="0.64"/><rect x="38" y="116.15" width="17" height="1.2" fill="#666" opacity="0.64"/><rect x="38" y="119.65" width="12" height="1.2" fill="#666" opacity="0.64"/><rect x="38" y="123.15" width="10" height="1.2" fill="#666" opacity="0.64"/><rect x="38" y="126.65" width="14" height="1.2" fill="#666" opacity="0.64"/><rect x="57.5" y="109.15" width="12" height="1.3" fill="#333" opacity="0.68"/><rect x="57.5" y="112.65" width="15" height="1.2" fill="#666" opacity="0.64"/><rect x="57.5" y="116.15" width="8" height="1.2" fill="#666" opacity="0.64"/><rect x="57.5" y="119.65" width="7" height="1.2" fill="#666" opacity="0.64"/><rect x="57.5" y="123.15" width="8" height="1.2" fill="#666" opacity="0.64"/><rect x="77" y="109.15" width="16" height="1.3" fill="#333" opacity="0.68"/><rect x="77" y="112.65" width="2" height="1.2" fill="#666" opacity="0.64"/><rect x="77" y="116.15" width="2" height="1.2" fill="#666" opacity="0.64"/><rect x="77" y="119.65" width="2" height="1.2" fill="#666" opacity="0.64"/><rect x="77" y="123.15" width="2" height="1.2" fill="#666" opacity="0.64"/></svg>
<span class="t" style="left:1161.3px;top:737.8px;font-size:9.5px;line-height:11.4px;color:#555;transform:scaleX(0.894);">Meeting-Agenda-Format</span>
<svg class="th" style="left:256px;top:774.7px;box-shadow:0 0 2px rgba(0,0,0,0.13);" width="107" height="10" viewBox="0 0 107 10" preserveAspectRatio="none"><rect x="0" y="0" width="107" height="10" fill="#fff" /><rect x="0.4" y="0.4" width="106.2" height="10" fill="none" stroke="#e2e2e6" stroke-width="0.8"/><rect x="2.5" y="0.5" width="28.5" height="9.5" fill="#5e5e5e" /><rect x="6" y="3.3" width="21.5" height="6.7" fill="#f4f4f4" /><rect x="11" y="7.35" width="11" height="1.8" fill="#555" opacity="0.79"/><rect x="33.5" y="3" width="71.5" height="7" fill="none" stroke="#8a8a8a" stroke-width="0.7"/><rect x="62" y="7.35" width="11" height="1.5" fill="#555" opacity="0.73"/></svg>
<svg class="th" style="left:384px;top:774.7px;box-shadow:0 0 2px rgba(0,0,0,0.13);" width="107" height="10" viewBox="0 0 107 10" preserveAspectRatio="none"><rect x="0" y="0" width="107" height="10" fill="#fff" /><rect x="0.4" y="0.4" width="106.2" height="10" fill="none" stroke="#e2e2e6" stroke-width="0.8"/><rect x="10" y="8.55" width="88" height="1.2" fill="#ddd" opacity="0.64"/></svg>
<svg class="th" style="left:512px;top:774.7px;box-shadow:0 0 2px rgba(0,0,0,0.13);" width="107" height="10" viewBox="0 0 107 10" preserveAspectRatio="none"><rect x="0" y="0" width="107" height="10" fill="#fff" /><rect x="0.4" y="0.4" width="106.2" height="10" fill="none" stroke="#e2e2e6" stroke-width="0.8"/><rect x="5" y="3.5" width="97" height="6.5" fill="none" stroke="#8a9a6a" stroke-width="0.7"/><rect x="6.5" y="5" width="94" height="5" fill="none" stroke="#c4b48a" stroke-width="0.4"/><text x="53.5" y="9.6" text-anchor="middle" font-family="'Liberation Serif',serif" font-weight="bold" font-size="4.4" fill="#555" textLength="42">FREE GROCERY LIST</text></svg>
<svg class="th" style="left:640.5px;top:774.7px;box-shadow:0 0 2px rgba(0,0,0,0.13);" width="107" height="10" viewBox="0 0 107 10" preserveAspectRatio="none"><rect x="0" y="0" width="107" height="10" fill="#fff" /><rect x="0.4" y="0.4" width="106.2" height="10" fill="none" stroke="#e2e2e6" stroke-width="0.8"/><rect x="72" y="3" width="30" height="7" fill="#e4f0fa" stroke="#6a9ac4" stroke-width="0.9"/><rect x="76" y="5.75" width="17" height="1.3" fill="#7aa8d0" opacity="0.68"/></svg>
<svg class="th" style="left:768px;top:774.7px;box-shadow:0 0 2px rgba(0,0,0,0.13);" width="107" height="10" viewBox="0 0 107 10" preserveAspectRatio="none"><rect x="0" y="0" width="107" height="10" fill="#f8faf6" /><rect x="0" y="0.6" width="107" height="0.6" fill="#d4e6ca" /><rect x="0" y="7.8" width="107" height="2.2" fill="#8fcc86" /><rect x="0" y="5" width="10" height="5" fill="#dfeedd" /><rect x="12" y="3.5" width="11" height="6.5" fill="#fff" stroke="#ddd" stroke-width="0.5"/></svg>
<svg class="th" style="left:896.5px;top:774.7px;box-shadow:0 0 2px rgba(0,0,0,0.13);" width="107" height="10" viewBox="0 0 107 10" preserveAspectRatio="none"><rect x="0" y="0" width="107" height="10" fill="#fff" /><rect x="0.4" y="0.4" width="106.2" height="10" fill="none" stroke="#e2e2e6" stroke-width="0.8"/></svg>
<svg class="th" style="left:1025px;top:774.7px;box-shadow:0 0 2px rgba(0,0,0,0.13);" width="107" height="10" viewBox="0 0 107 10" preserveAspectRatio="none"><rect x="0" y="0" width="107" height="10" fill="#fff" /><rect x="0.4" y="0.4" width="106.2" height="10" fill="none" stroke="#e2e2e6" stroke-width="0.8"/><rect x="0" y="0.6" width="28.5" height="9.4" fill="#27a87c" /><rect x="105" y="0.6" width="2" height="9.4" fill="#27a87c" /><rect x="36" y="8.25" width="11" height="1.1" fill="#aaa" opacity="0.6"/></svg>
<svg class="th" style="left:1153.5px;top:774.7px;box-shadow:0 0 2px rgba(0,0,0,0.13);" width="107" height="10" viewBox="0 0 107 10" preserveAspectRatio="none"><rect x="0" y="0" width="107" height="10" fill="#fff" /><rect x="0.4" y="0.4" width="106.2" height="10" fill="none" stroke="#e2e2e6" stroke-width="0.8"/><rect x="0" y="0.6" width="35" height="9.4" fill="#d2d2d2" /><rect x="1.5" y="2" width="32" height="8" fill="#dedede" /><rect x="11" y="7" width="13" height="3" fill="#f6f6f6" /><rect x="40" y="5.35" width="1.5" height="1.9" fill="#3a9a70" opacity="0.81"/><rect x="43" y="5.95" width="12" height="1.2" fill="#9ab4c4" opacity="0.64"/><rect x="43" y="8.75" width="16" height="1.2" fill="#bbb" opacity="0.64"/></svg>
<div class="b" style="left:1319px;top:84px;width:4px;height:41px;background:#dddde0;"></div>
<div class="b" style="left:1314px;top:125px;width:9px;height:660px;background:#f4f4f6;"></div>
<div class="b" style="left:1314px;top:125px;width:9px;height:201px;background:#dddde0;"></div>
<div class="b" style="left:1319px;top:326px;width:4px;height:459px;background:#ededf0;"></div>
<div class="b" style="left:1319px;top:415px;width:4px;height:68px;background:#4a7fd6;"></div>
<svg class="b" style="left:1319.3px;top:446.8px;" width="3" height="5" viewBox="0 0 3 5"><path d="M3 0L0.3 2.5L3 5Z" fill="#fff"/></svg>
<div class="b" style="left:1261.5px;top:753px;width:16px;height:16px;background:#5cb878;border-radius:1.5px;box-shadow:0 0 2px rgba(0,0,0,0.25);"></div>
<svg class="b" style="left:1265px;top:756.5px;" width="9" height="9" viewBox="0 0 9 9"><path d="M3 0H6V3.8H8.5L4.5 8.5L0.5 3.8H3Z" fill="#fff"/></svg>
<div class="b" style="left:0px;top:0px;width:1323px;height:19.4px;background:#e3e3e5;"></div>
<div class="b" style="left:0px;top:0px;width:60px;height:19px;background:#4a8ede;"></div>
<svg class="b" style="left:4px;top:5px;" width="11" height="10" viewBox="0 0 11 10"><path d="M0.8 0.5 L0.8 8.8 L5 5.2 L9.2 8.8 L9.2 0.5" fill="none" stroke="#fff" stroke-width="1.7" stroke-linejoin="miter"/></svg>
<span class="t" style="left:18.5px;top:3.8px;font-size:10.5px;line-height:12.6px;color:#fff;font-weight:bold;transform:scaleX(0.896);">Writer</span>
<svg class="b" style="left:53px;top:8px;" width="5" height="3" viewBox="0 0 5 3"><path d="M0 0H5L2.5 3Z" fill="#fff"/></svg>
<div class="b" style="left:67px;top:3px;width:40px;height:18px;background:#fbfbfc;border-radius:2px 2px 0 0;"></div>
<span class="t" style="left:76.3px;top:6.9px;font-size:8.8px;line-height:10.6px;color:#3f66a8;font-weight:bold;transform:scaleX(0.888);">Home</span>
<span class="t" style="left:119.0px;top:6.7px;font-size:9px;line-height:10.8px;color:#4a4a4a;transform:scaleX(0.955);">Insert</span>
<span class="t" style="left:159.0px;top:6.7px;font-size:9px;line-height:10.8px;color:#4a4a4a;transform:scaleX(0.851);">Page Layout</span>
<span class="t" style="left:218.0px;top:6.7px;font-size:9px;line-height:10.8px;color:#4a4a4a;transform:scaleX(0.826);">References</span>
<span class="t" style="left:272.0px;top:6.7px;font-size:9px;line-height:10.8px;color:#4a4a4a;transform:scaleX(0.847);">Review</span>
<span class="t" style="left:319.0px;top:6.7px;font-size:9px;line-height:10.8px;color:#4a4a4a;transform:scaleX(0.879);">View</span>
<span class="t" style="left:357.0px;top:6.7px;font-size:9px;line-height:10.8px;color:#4a4a4a;transform:scaleX(0.866);">Section</span>
<span class="t" style="left:399.0px;top:6.7px;font-size:9px;line-height:10.8px;color:#4a4a4a;transform:scaleX(0.844);">Special Features</span>
<div class="b" style="left:1092px;top:0px;width:55px;height:19px;background:#e36e50;"></div>
<span class="t" style="left:1108.0px;top:4.7px;font-size:9px;line-height:10.8px;color:#fff;transform:scaleX(0.872);">Sign in</span>
<svg class="b" style="left:1152px;top:5px;" width="9" height="10" viewBox="0 0 9 10"><path d="M0 1.5H1.8L3 6.5H7.5L8.5 2.5H2.2" fill="none" stroke="#8c8c8c" stroke-width="1.1"/><path d="M2.5 3H8.2L7.4 6H3.2Z" fill="#8c8c8c"/><circle cx="3.6" cy="8.5" r="0.9" fill="#8c8c8c"/><circle cx="7" cy="8.5" r="0.9" fill="#8c8c8c"/></svg>
<svg class="b" style="left:1168px;top:5.5px;" width="8" height="9" viewBox="0 0 8 9"><path d="M1 0.5H4Q7.5 0.5 7.5 4.5Q7.5 8.5 4 8.5H1Z" fill="#8c8c8c"/><path d="M3 2.5V6.5Q5.5 6.5 5.5 4.5Q5.5 2.5 3 2.5Z" fill="#e4e4e4"/></svg>
<svg class="b" style="left:1185px;top:4.8px;" width="9" height="10" viewBox="0 0 9 10"><rect x="0" y="0" width="9" height="9.5" rx="1" fill="#666"/><path d="M2.4 7.2L4.5 2L6.6 7.2M3.2 5.5H5.8" stroke="#e4e4e4" stroke-width="0.9" fill="none"/></svg>
<svg class="b" style="left:1200px;top:5.5px;" width="11" height="9" viewBox="0 0 11 9"><path d="M3.3 0L5.5 1.2L7.7 0L11 2.2L9.5 4.3L8.5 3.7V9H2.5V3.7L1.5 4.3L0 2.2Z" fill="#555"/></svg>
<span class="t" style="left:1217.0px;top:4.0px;font-size:11px;line-height:13.2px;color:#666;font-weight:bold;transform:scaleX(0.819);">?</span>
<svg class="b" style="left:1225px;top:9px;" width="4" height="2.5" viewBox="0 0 4 2.5"><path d="M0 0H4L2 2.5Z" fill="#666"/></svg>
<div class="b" style="left:1235px;top:5px;width:1px;height:10px;background:#c4c4c4;"></div>
<svg class="b" style="left:1241px;top:3px;" width="11" height="12" viewBox="0 0 11 12"><rect x="0.5" y="0.5" width="10" height="10.5" fill="none" stroke="#555" stroke-width="1"/><rect x="0.5" y="0.5" width="10" height="2" fill="#555"/><path d="M5.5 9.5V4.5M3.2 6.6L5.5 4.3L7.8 6.6" stroke="#555" stroke-width="1" fill="none"/></svg>
<div class="b" style="left:1259px;top:5px;width:1px;height:10px;background:#c4c4c4;"></div>
<div class="b" style="left:1267px;top:10px;width:8px;height:1.5px;background:#555;"></div>
<svg class="b" style="left:1285px;top:5px;" width="10" height="9" viewBox="0 0 10 9"><path d="M2.5 2.5V0.5H9.5V5.5H7" fill="none" stroke="#555" stroke-width="1"/><rect x="0.5" y="3" width="6.5" height="5" fill="none" stroke="#555" stroke-width="1"/></svg>
<svg class="b" style="left:1308px;top:6px;" width="8" height="8" viewBox="0 0 8 8"><path d="M0.5 0.5L7.5 7.5M7.5 0.5L0.5 7.5" stroke="#444" stroke-width="1.3"/></svg>
<div class="b" style="left:0px;top:19.4px;width:1323px;height:64.6px;background:#fbfbfc;"></div>
<svg class="b" style="left:11px;top:25px;" width="18" height="17" viewBox="0 0 18 17"><rect x="0" y="2" width="13" height="13.5" fill="#b4b4b4"/><rect x="3.5" y="0" width="6" height="3.5" rx="1" fill="#b4b4b4"/><rect x="7" y="7" width="10.5" height="9.5" fill="#c4c4c4" stroke="#fbfbfc" stroke-width="1"/></svg>
<span class="t" style="left:7.0px;top:45.2px;font-size:9px;line-height:10.8px;color:#a9a9a9;transform:scaleX(0.826);">Paste</span>
<svg class="b" style="left:28.8px;top:47.8px;" width="3.6" height="2.4" viewBox="0 0 3.6 2.4"><path d="M0 0H3.6L1.8 2.4Z" fill="#555"/></svg>
<svg class="b" style="left:39px;top:24px;" width="11" height="12" viewBox="0 0 11 12"><path d="M2 0L7.5 8M9 0L3.5 8" stroke="#b4b4b4" stroke-width="1.1" fill="none"/><circle cx="2.5" cy="9.5" r="1.7" fill="none" stroke="#b4b4b4" stroke-width="1"/><circle cx="8.3" cy="9.5" r="1.7" fill="none" stroke="#b4b4b4" stroke-width="1"/></svg>
<span class="t" style="left:53.0px;top:25.2px;font-size:9px;line-height:10.8px;color:#a9a9a9;transform:scaleX(0.785);">Cut</span>
<svg class="b" style="left:39px;top:44px;" width="11" height="12" viewBox="0 0 11 12"><path d="M0.5 0.5H5.5V2.5H3V8.5H0.5Z" fill="none" stroke="#b4b4b4" stroke-width="0.9"/><path d="M3.5 2.8H8L10 4.8V11H3.5Z" fill="none" stroke="#b4b4b4" stroke-width="0.9"/><path d="M5 6H8.5M5 7.8H8.5M5 9.5H8.5" stroke="#b4b4b4" stroke-width="0.7"/></svg>
<span class="t" style="left:53.0px;top:45.2px;font-size:9px;line-height:10.8px;color:#a9a9a9;transform:scaleX(0.809);">Copy</span>
<svg class="b" style="left:80px;top:24px;" width="18" height="18" viewBox="0 0 18 18"><g transform="rotate(35 9 9)"><rect x="6.5" y="0" width="5" height="5" fill="#9a9a9a"/><rect x="5" y="5" width="8" height="2.5" fill="#aaa"/><path d="M3.5 7.5H14.5L13.5 17H4.5Z" fill="#bdbdbd"/></g></svg>
<span class="t" style="left:76.0px;top:44.2px;font-size:9px;line-height:10.8px;color:#a9a9a9;transform:scaleX(0.842);">Format</span>
<span class="t" style="left:78.0px;top:53.7px;font-size:9px;line-height:10.8px;color:#a9a9a9;transform:scaleX(0.807);">Painter</span>
<div class="b" style="left:110px;top:22px;width:1px;height:43px;background:#e8e8ea;"></div>
<div class="b" style="left:114px;top:22px;width:84px;height:16px;background:#fdfdfd;border:1px solid #e0e0e0;box-sizing:border-box;"></div>
<div class="b" style="left:197px;top:22px;width:44px;height:16px;background:#fdfdfd;border:1px solid #e0e0e0;box-sizing:border-box;"></div>
<svg class="b" style="left:191.5px;top:29.5px;" width="4" height="2.5" viewBox="0 0 4 2.5"><path d="M0 0L2 2L4 0" stroke="#b4b4b4" fill="none" stroke-width="0.8"/></svg>
<svg class="b" style="left:234px;top:29.5px;" width="4" height="2.5" viewBox="0 0 4 2.5"><path d="M0 0L2 2L4 0" stroke="#b4b4b4" fill="none" stroke-width="0.8"/></svg>
<span class="t" style="left:245.0px;top:24.2px;font-size:11.5px;line-height:13.8px;color:#999;transform:scaleX(0.978);">A</span>
<span class="t" style="left:251.5px;top:23.0px;font-size:6px;line-height:7.2px;color:#999;transform:scaleX(1.141);">+</span>
<span class="t" style="left:259.0px;top:25.6px;font-size:10px;line-height:12.0px;color:#999;transform:scaleX(0.974);">A</span>
<div class="b" style="left:264.5px;top:26px;width:3px;height:0.8px;background:#999;"></div>
<div class="b" style="left:272px;top:25px;width:1px;height:10px;background:#ececec;"></div>
<span class="t" style="left:276.0px;top:23.7px;font-size:9px;line-height:10.8px;color:#b4b4b4;transform:scaleX(0.916);">A</span>
<svg class="b" style="left:279px;top:30px;" width="6" height="5" viewBox="0 0 6 5"><path d="M0.5 2.5L3 0.5L5.5 2.5L3 4.5Z" fill="none" stroke="#b4b4b4" stroke-width="0.8"/></svg>
<div class="b" style="left:290px;top:25px;width:1px;height:10px;background:#ececec;"></div>
<span class="t" style="left:293.0px;top:22.8px;font-size:8.5px;line-height:10.2px;color:#a8a8a8;font-weight:bold;transform:scaleX(1.247);">Tt</span>
<div class="b" style="left:292.5px;top:32.3px;width:10.5px;height:1.2px;background:#cfcfcf;"></div>
<svg class="b" style="left:306px;top:29.5px;" width="4" height="2.5" viewBox="0 0 4 2.5"><path d="M0 0L2 2L4 0" stroke="#b4b4b4" fill="none" stroke-width="0.8"/></svg>
<div class="b" style="left:315px;top:22px;width:1px;height:43px;background:#e8e8ea;"></div>
<span class="t" style="left:120.0px;top:43.5px;font-size:11px;line-height:13.2px;color:#a8a8a8;font-weight:bold;font-family:'Liberation Serif',serif;transform:scaleX(0.954);">B</span>
<span class="t" style="left:139.0px;top:43.5px;font-size:11px;line-height:13.2px;color:#a8a8a8;font-family:'Liberation Serif',serif;transform:scaleX(1.229);font-style:italic;">I</span>
<span class="t" style="left:153.0px;top:43.3px;font-size:10.5px;line-height:12.6px;color:#a8a8a8;font-family:'Liberation Serif',serif;transform:scaleX(0.923);">U</span>
<div class="b" style="left:153px;top:54px;width:7.5px;height:0.8px;background:#a8a8a8;"></div>
<div class="b" style="left:165px;top:49.5px;width:2.5px;height:0.8px;background:#c8c8c8;"></div>
<span class="t" style="left:172.5px;top:45.0px;font-size:8.5px;line-height:10.2px;color:#a8a8a8;transform:scaleX(0.926);">AB</span>
<div class="b" style="left:172px;top:49.3px;width:11.5px;height:0.7px;background:#b8b8b8;"></div>
<div class="b" style="left:186.5px;top:49.5px;width:2.5px;height:0.8px;background:#c8c8c8;"></div>
<span class="t" style="left:195.0px;top:44.5px;font-size:11px;line-height:13.2px;color:#a8a8a8;transform:scaleX(0.954);">X</span>
<span class="t" style="left:202.5px;top:43.1px;font-size:5px;line-height:6.0px;color:#a8a8a8;transform:scaleX(1.079);">2</span>
<span class="t" style="left:214.0px;top:44.5px;font-size:11px;line-height:13.2px;color:#a8a8a8;transform:scaleX(0.954);">X</span>
<span class="t" style="left:221.5px;top:50.6px;font-size:5px;line-height:6.0px;color:#a8a8a8;transform:scaleX(1.079);">2</span>
<div class="b" style="left:229.5px;top:44px;width:1px;height:12px;background:#ececec;"></div>
<svg class="b" style="left:233px;top:44px;" width="11" height="11" viewBox="0 0 11 11"><path d="M1 10L5.5 0.8L10 10M2.8 6.8H8.2" stroke="#b4b4b4" stroke-width="2.2" fill="none"/><path d="M1 10L5.5 0.8L10 10M2.8 6.8H8.2" stroke="#fbfbfc" stroke-width="0.8" fill="none"/></svg>
<div class="b" style="left:246.5px;top:49.5px;width:2.5px;height:0.8px;background:#c8c8c8;"></div>
<span class="t" style="left:254.0px;top:44.3px;font-size:8px;line-height:9.6px;color:#b0b0b0;transform:scaleX(0.787);">ab</span>
<svg class="b" style="left:259px;top:44px;" width="7" height="10" viewBox="0 0 7 10"><path d="M6 0.5L1.5 8.5" stroke="#a8a8a8" stroke-width="1.8"/></svg>
<div class="b" style="left:268.5px;top:49.5px;width:2.5px;height:0.8px;background:#c8c8c8;"></div>
<span class="t" style="left:275.5px;top:42.0px;font-size:11px;line-height:13.2px;color:#a8a8a8;transform:scaleX(1.227);">A</span>
<div class="b" style="left:274.5px;top:53px;width:11px;height:1.5px;background:#4a4a4a;"></div>
<div class="b" style="left:288.5px;top:49.5px;width:2.5px;height:0.8px;background:#c8c8c8;"></div>
<div class="b" style="left:298px;top:44.5px;width:10px;height:10px;background:#c2c2c2;"></div>
<span class="t" style="left:299.8px;top:45.0px;font-size:9px;line-height:10.8px;color:#a4a4a4;transform:scaleX(1.083);">A</span>
<svg class="b" style="left:321px;top:25px;" width="11" height="11" viewBox="0 0 11 11"><circle cx="1" cy="1.5" r="0.9" fill="#b4b4b4"/><rect x="3" y="1.0" width="7" height="1" fill="#b4b4b4"/><circle cx="1" cy="5.1" r="0.9" fill="#b4b4b4"/><rect x="3" y="4.6" width="7" height="1" fill="#b4b4b4"/><circle cx="1" cy="8.7" r="0.9" fill="#b4b4b4"/><rect x="3" y="8.2" width="7" height="1" fill="#b4b4b4"/></svg>
<div class="b" style="left:335.5px;top:30px;width:2.5px;height:0.8px;background:#c8c8c8;"></div>
<svg class="b" style="left:342px;top:25px;" width="11" height="11" viewBox="0 0 11 11"><rect x="0.3" y="0.3" width="1.4" height="2.4" fill="#b4b4b4"/><rect x="3.5" y="1.0" width="7" height="1" fill="#b4b4b4"/><rect x="0.3" y="3.9" width="1.4" height="2.4" fill="#b4b4b4"/><rect x="3.5" y="4.6" width="7" height="1" fill="#b4b4b4"/><rect x="0.3" y="7.5" width="1.4" height="2.4" fill="#b4b4b4"/><rect x="3.5" y="8.2" width="7" height="1" fill="#b4b4b4"/></svg>
<div class="b" style="left:355.5px;top:30px;width:2.5px;height:0.8px;background:#c8c8c8;"></div>
<div class="b" style="left:362px;top:25px;width:1px;height:10px;background:#ececec;"></div>
<svg class="b" style="left:366px;top:25px;" width="10" height="10" viewBox="0 0 10 10"><rect x="0" y="0" width="9.5" height="0.9" fill="#b4b4b4"/><rect x="0" y="9" width="9.5" height="0.9" fill="#b4b4b4"/><rect x="4.5" y="2.5" width="5" height="0.9" fill="#b4b4b4"/><rect x="4.5" y="4.5" width="5" height="0.9" fill="#b4b4b4"/><rect x="4.5" y="6.5" width="5" height="0.9" fill="#b4b4b4"/><path d="M0.5 5H3.5M2 3.5V6.5" stroke="#999" stroke-width="0.9"/></svg>
<svg class="b" style="left:380px;top:25px;" width="10" height="10" viewBox="0 0 10 10"><rect x="0" y="0" width="9.5" height="0.9" fill="#b4b4b4"/><rect x="0" y="9" width="9.5" height="0.9" fill="#b4b4b4"/><rect x="4.5" y="2.5" width="5" height="0.9" fill="#b4b4b4"/><rect x="4.5" y="4.5" width="5" height="0.9" fill="#b4b4b4"/><rect x="4.5" y="6.5" width="5" height="0.9" fill="#b4b4b4"/><path d="M0.5 5H3.5M2 3.5V6.5" stroke="#999" stroke-width="0.9"/></svg>
<div class="b" style="left:393px;top:25px;width:1px;height:10px;background:#ececec;"></div>
<span class="t" style="left:398.0px;top:24.2px;font-size:11.5px;line-height:13.8px;color:#505050;font-weight:bold;transform:scaleX(1.023);">A</span>
<svg class="b" style="left:396px;top:24.5px;" width="13" height="4" viewBox="0 0 13 4"><path d="M1.5 0.3L3 1.8L1.5 3.3L0 1.8Z M11 0.3L12.5 1.8L11 3.3L9.5 1.8Z" fill="#505050"/></svg>
<svg class="b" style="left:410px;top:29px;" width="4.5" height="3" viewBox="0 0 4.5 3"><path d="M0 0H4.5L2.25 3Z" fill="#505050"/></svg>
<div class="b" style="left:417px;top:25px;width:1px;height:10px;background:#ececec;"></div>
<svg class="b" style="left:421px;top:25px;" width="10" height="11" viewBox="0 0 10 11"><path d="M5 1.5L7 3.2L5 4.9L3 3.2Z M2.5 6L4.5 7.7L2.5 9.4L0.5 7.7Z" fill="#555"/><path d="M7.5 1L8.5 0.3" stroke="#888" stroke-width="0.7"/></svg>
<svg class="b" style="left:434px;top:29px;" width="4.5" height="3" viewBox="0 0 4.5 3"><path d="M0 0H4.5L2.25 3Z" fill="#505050"/></svg>
<svg class="b" style="left:442px;top:25px;" width="10" height="10" viewBox="0 0 10 10"><rect x="0.5" y="0.5" width="9" height="9" fill="none" stroke="#b4b4b4" stroke-width="0.9"/><path d="M3.5 0.5V9.5M6.5 0.5V9.5M0.5 3.5H9.5M0.5 6.5H9.5" stroke="#b4b4b4" stroke-width="0.8"/></svg>
<svg class="b" style="left:322px;top:45px;" width="10" height="11" viewBox="0 0 10 11"><rect x="0" y="0.5" width="6" height="1" fill="#b4b4b4"/><rect x="0" y="3.2" width="9" height="1" fill="#b4b4b4"/><rect x="0" y="5.9" width="5" height="1" fill="#b4b4b4"/><rect x="0" y="8.600000000000001" width="9" height="1" fill="#b4b4b4"/></svg>
<svg class="b" style="left:337.5px;top:45px;" width="10" height="11" viewBox="0 0 10 11"><rect x="2" y="0.5" width="6" height="1" fill="#b4b4b4"/><rect x="0" y="3.2" width="10" height="1" fill="#b4b4b4"/><rect x="2" y="5.9" width="6" height="1" fill="#b4b4b4"/><rect x="0" y="8.600000000000001" width="10" height="1" fill="#b4b4b4"/></svg>
<svg class="b" style="left:352px;top:45px;" width="10" height="11" viewBox="0 0 10 11"><rect x="3" y="0.5" width="7" height="1" fill="#b4b4b4"/><rect x="0" y="3.2" width="10" height="1" fill="#b4b4b4"/><rect x="4" y="5.9" width="6" height="1" fill="#b4b4b4"/><rect x="0" y="8.600000000000001" width="10" height="1" fill="#b4b4b4"/></svg>
<svg class="b" style="left:365px;top:45px;" width="10" height="11" viewBox="0 0 10 11"><rect x="0" y="0.5" width="10" height="1" fill="#b4b4b4"/><rect x="0" y="3.2" width="10" height="1" fill="#b4b4b4"/><rect x="0" y="5.9" width="10" height="1" fill="#b4b4b4"/><rect x="0" y="8.600000000000001" width="10" height="1" fill="#b4b4b4"/></svg>
<svg class="b" style="left:378px;top:45px;" width="11" height="10" viewBox="0 0 11 10"><path d="M0.5 0.5V9.5H10.5V0.5" fill="none" stroke="#b4b4b4" stroke-width="0.9"/><path d="M2 3.5H9M2 6.5H9" stroke="#b4b4b4" stroke-width="0.9"/><path d="M3.5 1V5M7.5 1V5" stroke="#999" stroke-width="0.9"/></svg>
<div class="b" style="left:393px;top:45px;width:1px;height:10px;background:#ececec;"></div>
<svg class="b" style="left:397px;top:44.5px;" width="11" height="11" viewBox="0 0 11 11"><rect x="0" y="0" width="10.5" height="1" fill="#555"/><rect x="0" y="9.5" width="10.5" height="1" fill="#555"/><rect x="5" y="2.6" width="5.5" height="0.9" fill="#999"/><rect x="5" y="4.8" width="5.5" height="0.9" fill="#999"/><rect x="5" y="7" width="5.5" height="0.9" fill="#999"/><path d="M0.5 4.2L2.2 2L3.9 4.2Z M0.5 6.3L2.2 8.5L3.9 6.3Z" fill="#444"/></svg>
<svg class="b" style="left:410px;top:49px;" width="4.5" height="3" viewBox="0 0 4.5 3"><path d="M0 0H4.5L2.25 3Z" fill="#505050"/></svg>
<div class="b" style="left:417px;top:45px;width:1px;height:10px;background:#ececec;"></div>
<svg class="b" style="left:421px;top:44px;" width="11" height="12" viewBox="0 0 11 12"><path d="M3 4L6.5 1L10 5.5L6 8.5Z" fill="#a4a4a4"/><path d="M10 5.5Q10.8 7 10 8" stroke="#999" fill="none" stroke-width="0.9"/><rect x="0" y="9.5" width="10.5" height="1.8" fill="#444"/></svg>
<div class="b" style="left:434.5px;top:49.5px;width:2.5px;height:0.8px;background:#c8c8c8;"></div>
<svg class="b" style="left:442px;top:45px;" width="10" height="10" viewBox="0 0 10 10"><rect x="0.5" y="0.5" width="8.5" height="9" fill="none" stroke="#b4b4b4" stroke-width="0.9"/><path d="M4.75 0.5V9.5M0.5 5H9" stroke="#b4b4b4" stroke-width="0.8"/></svg>
<svg class="b" style="left:455px;top:49.5px;" width="4" height="2.5" viewBox="0 0 4 2.5"><path d="M0 0L2 2L4 0" stroke="#c4c4c4" fill="none" stroke-width="0.8"/></svg>
<div class="b" style="left:464px;top:22px;width:1px;height:43px;background:#e8e8ea;"></div>
<div class="b" style="left:468px;top:22px;width:142px;height:36px;background:#fefefe;border:1px solid #e2e2e2;box-sizing:border-box;"></div>
<div class="b" style="left:601px;top:22px;width:9px;height:36px;background:#e1e1e1;"></div>
<svg class="b" style="left:603px;top:26px;" width="5" height="3" viewBox="0 0 5 3"><path d="M0.5 2.5L2.5 0.5L4.5 2.5" stroke="#c0c0c0" fill="none" stroke-width="0.8"/></svg>
<div class="b" style="left:601px;top:33px;width:9px;height:0.7px;background:#eee;"></div>
<div class="b" style="left:604px;top:39px;width:3px;height:0.8px;background:#c0c0c0;"></div>
<div class="b" style="left:601px;top:45px;width:9px;height:0.7px;background:#eee;"></div>
<svg class="b" style="left:603px;top:50px;" width="5" height="4" viewBox="0 0 5 4"><path d="M0.5 0.3H4.5M0.5 1.5L2.5 3.5L4.5 1.5" stroke="#c0c0c0" fill="none" stroke-width="0.8"/></svg>
<span class="t" style="left:636.0px;top:22.6px;font-size:15px;line-height:18.0px;color:#a0a0a0;font-weight:bold;font-family:'Liberation Serif',serif;transform:scaleX(0.877);">A</span>
<span class="t" style="left:629.5px;top:28.6px;font-size:10px;line-height:12.0px;color:#c0c0c0;font-family:'Liberation Serif',serif;transform:scaleX(0.831);font-style:italic;">A</span>
<svg class="b" style="left:627px;top:23px;" width="9" height="9" viewBox="0 0 9 9"><path d="M4.5 0V3M0.5 1.5L3 4M0 5.5H3M8.5 1.5L6 4" stroke="#d0d0d0" stroke-width="0.7"/></svg>
<span class="t" style="left:616.0px;top:45.2px;font-size:9px;line-height:10.8px;color:#a9a9a9;transform:scaleX(0.839);">New Style</span>
<svg class="b" style="left:653.5px;top:48.5px;" width="3" height="2" viewBox="0 0 3 2"><path d="M0 0H3L1.5 2Z" fill="#c0c0c0"/></svg>
<div class="b" style="left:665px;top:22px;width:1px;height:43px;background:#e8e8ea;"></div>
<svg class="b" style="left:683px;top:23px;" width="19" height="19" viewBox="0 0 19 19"><circle cx="8" cy="8" r="7" fill="none" stroke="#b4b4b4" stroke-width="1"/><path d="M13 13L17.5 17.5" stroke="#a0a0a0" stroke-width="1.6"/><path d="M4 6Q5 4 6.5 5.5M8 9Q10 7 11.5 9.5M5 10.5H9" stroke="#c4c4c4" stroke-width="0.8" fill="none"/></svg>
<span class="t" style="left:676.0px;top:44.2px;font-size:9px;line-height:10.8px;color:#b4b4b4;transform:scaleX(0.857);">Find and</span>
<span class="t" style="left:675.0px;top:53.2px;font-size:9px;line-height:10.8px;color:#b4b4b4;transform:scaleX(0.818);">Replace</span>
<svg class="b" style="left:705px;top:57.5px;" width="3" height="2" viewBox="0 0 3 2"><path d="M0 0H3L1.5 2Z" fill="#c8c8c8"/></svg>
<svg class="b" style="left:727px;top:26px;" width="10" height="15" viewBox="0 0 10 15"><path d="M0.5 0.5V12L3.5 9.2L5.8 14L7.6 13.2L5.4 8.6H9.5Z" fill="#e2a060"/></svg>
<span class="t" style="left:716.5px;top:45.0px;font-size:9px;line-height:10.8px;color:#3a3a3a;transform:scaleX(0.820);">Select</span>
<svg class="b" style="left:739.5px;top:47.5px;" width="3.6" height="2.4" viewBox="0 0 3.6 2.4"><path d="M0 0H3.6L1.8 2.4Z" fill="#444"/></svg>
<div class="b" style="left:751px;top:22px;width:1px;height:43px;background:#ececee;"></div>
<svg class="b" style="left:768px;top:25px;" width="18" height="17" viewBox="0 0 18 17"><rect x="0.6" y="0.6" width="16" height="11.5" rx="1.2" fill="none" stroke="#8a8a8a" stroke-width="1.1"/><rect x="3" y="3" width="4.5" height="4" fill="none" stroke="#c8c8c8" stroke-width="0.8"/><rect x="9.5" y="3" width="4.5" height="4" fill="none" stroke="#c8c8c8" stroke-width="0.8"/><path d="M5.5 10.5Q7 9 9 10.5L13.5 15" stroke="#e07a40" stroke-width="2.2" fill="none" stroke-linecap="round"/></svg>
<span class="t" style="left:758.5px;top:45.0px;font-size:9px;line-height:10.8px;color:#3a3a3a;transform:scaleX(0.876);">Settings</span>
<svg class="b" style="left:790px;top:47.5px;" width="3.6" height="2.4" viewBox="0 0 3.6 2.4"><path d="M0 0H3.6L1.8 2.4Z" fill="#444"/></svg>
<svg class="b" style="left:3px;top:70px;" width="12" height="10" viewBox="0 0 12 10"><path d="M0 1H4L5 2.2H9.5V4H2.2L0 9Z" fill="#d87a1e"/><path d="M2.5 4.5H12L9.5 9.5H0.3Z" fill="#f09a3a"/></svg>
<svg class="b" style="left:19px;top:70px;" width="10" height="10" viewBox="0 0 10 10"><path d="M0.5 0.5H9.5V9.5H0.5Z" fill="none" stroke="#a6a6a6" stroke-width="1"/><path d="M2.5 0.5V4H7.5V0.5M0.5 6H9.5" stroke="#a6a6a6" stroke-width="0.9" fill="none"/></svg>
<svg class="b" style="left:34px;top:70px;" width="11" height="10" viewBox="0 0 11 10"><path d="M3 0.5H10.5V9.5H3V6" fill="none" stroke="#a6a6a6" stroke-width="1"/><path d="M0 2.8H4M2 0.8V4.8" stroke="#a6a6a6" stroke-width="1"/><circle cx="7" cy="4.5" r="1.8" fill="none" stroke="#a6a6a6" stroke-width="0.8"/><path d="M3 7.5H5V9.5" stroke="#a6a6a6" stroke-width="0.8" fill="none"/></svg>
<svg class="b" style="left:49px;top:70px;" width="11" height="10" viewBox="0 0 11 10"><rect x="2.5" y="0.3" width="6" height="2.2" fill="#a6a6a6"/><rect x="0.3" y="3" width="10.4" height="4.5" rx="0.8" fill="#a6a6a6"/><rect x="2.5" y="6.3" width="6" height="3.4" fill="#fbfbfc" stroke="#a6a6a6" stroke-width="0.8"/></svg>
<svg class="b" style="left:64px;top:69.5px;" width="10" height="11" viewBox="0 0 10 11"><path d="M0.5 0.5H6L8.5 3V10.5H0.5Z" fill="none" stroke="#a6a6a6" stroke-width="0.9"/><circle cx="5.3" cy="6.3" r="1.8" fill="none" stroke="#a6a6a6" stroke-width="0.8"/><path d="M6.6 7.6L9 10" stroke="#a6a6a6" stroke-width="1"/></svg>
<svg class="b" style="left:80px;top:70px;" width="10" height="10" viewBox="0 0 10 10"><path d="M2 3.5Q7 0.5 8 4.5Q8.3 7.5 5 9.5" fill="none" stroke="#8a8a8a" stroke-width="1.5"/><path d="M0.3 1.2L0.8 6L5 4Z" fill="#8a8a8a"/></svg>
<svg class="b" style="left:95px;top:70px;" width="10" height="10" viewBox="0 0 10 10"><path d="M8 3.5Q3 0.5 2 4.5Q1.7 7.5 5 9.5" fill="none" stroke="#b4b4b4" stroke-width="1.5"/><path d="M9.7 1.2L9.2 6L5 4Z" fill="#a0a0a0"/></svg>
<div class="b" style="left:110px;top:68px;width:1px;height:15px;background:#ececee;"></div>
<svg class="b" style="left:116px;top:70px;" width="9" height="8" viewBox="0 0 9 8"><path d="M0 3.5H5.5L2.75 6.3Z" fill="#555"/><circle cx="7.3" cy="1.5" r="1.3" fill="#e02a3a"/></svg>
<div class="b" style="left:129px;top:67.5px;width:69px;height:16.5px;background:#dfe8f5;"></div>
<div class="b" style="left:129px;top:82px;width:69px;height:2px;background:#a9c6f0;"></div>
<svg class="b" style="left:132px;top:70.5px;" width="11" height="8.5" viewBox="0 0 11 8.5"><path d="M0.3 0.3H10.7L7.8 8.2L5.5 3.8L3.2 8.2Z" fill="#e8383e"/><path d="M2.2 1.6H8.8L7.7 4.6L5.5 0.8L3.3 4.6Z" fill="#dfe8f5"/><path d="M4.3 1.6L5.5 3.6L6.7 1.6Z" fill="#e8383e"/></svg>
<span class="t" style="left:146.0px;top:70.7px;font-size:9px;line-height:10.8px;color:#444;transform:scaleX(0.771);">My WPS</span>
<svg class="b" style="left:188px;top:72.5px;" width="6" height="6" viewBox="0 0 6 6"><path d="M0.5 0.5L5.5 5.5M5.5 0.5L0.5 5.5" stroke="#555" stroke-width="0.9"/></svg>
<svg class="b" style="left:203px;top:70.5px;" width="9" height="9" viewBox="0 0 9 9"><path d="M4.5 0.5V8.5M0.5 4.5H8.5" stroke="#606060" stroke-width="1.1"/></svg>
<svg class="b" style="left:1293px;top:71px;" width="6" height="6" viewBox="0 0 6 6"><rect width="6" height="6" fill="#666"/><path d="M2.2 1.5V4.2H4.2" stroke="#eee" stroke-width="0.9" fill="none"/></svg>
<svg class="b" style="left:1308px;top:71px;" width="8" height="7" viewBox="0 0 8 7"><path d="M0 0H4.5V1.3H0Z M0 2.2H4.5V3.5H0Z M0 4.4H3V5.7H0Z" fill="#666"/><path d="M3.5 3.5H8L5.75 6.5Z" fill="#555"/></svg>
<div class="b" style="left:0px;top:784.5px;width:1323px;height:15.5px;background:#dedee0;"></div>
<svg class="b" style="left:1037px;top:787.3px;" width="10" height="10" viewBox="0 0 10 10"><rect x="2" y="2" width="6" height="6" fill="#b0b0b0"/><path d="M0.5 3V0.5H3M7 0.5H9.5V3M9.5 7V9.5H7M3 9.5H0.5V7" stroke="#888" stroke-width="0.9" fill="none"/></svg>
<svg class="b" style="left:1063px;top:787.3px;" width="10" height="10" viewBox="0 0 10 10"><rect x="0.5" y="0.5" width="9" height="9" fill="#c4c4c4" stroke="#b0b0b0" stroke-width="0.8"/><rect x="2" y="5" width="6" height="3" fill="#a8a8a8"/></svg>
<svg class="b" style="left:1089px;top:787.3px;" width="9" height="10" viewBox="0 0 9 10"><rect x="0.5" y="0.5" width="8" height="9" fill="#c8c8c8" stroke="#b0b0b0" stroke-width="0.8"/><path d="M2 3H7M2 5H7M2 7H7" stroke="#aaa" stroke-width="0.8"/></svg>
<svg class="b" style="left:1114px;top:787.3px;" width="10" height="10" viewBox="0 0 10 10"><rect x="0.5" y="0.5" width="7" height="9" fill="#c8c8c8" stroke="#999" stroke-width="0.8"/><rect x="5" y="5" width="4.5" height="4.5" fill="#999"/></svg>
<svg class="b" style="left:1140px;top:787.3px;" width="9" height="10" viewBox="0 0 9 10"><rect x="0" y="0" width="9" height="10" rx="1" fill="#4a4a4a"/><rect x="3" y="2" width="3" height="4" fill="#dedee0"/><rect x="3.8" y="6" width="1.4" height="2" fill="#dedee0"/></svg>
<svg class="b" style="left:1153px;top:791.5px;" width="4" height="2.5" viewBox="0 0 4 2.5"><path d="M0 0H4L2 2.5Z" fill="#444"/></svg>
<span class="t" style="left:1167.0px;top:788.2px;font-size:8px;line-height:9.6px;color:#c0c0c0;transform:scaleX(0.838);">100 %</span>
<div class="b" style="left:1192px;top:792.6px;width:5px;height:0.9px;background:#b8b8b8;"></div>
<div class="b" style="left:1204px;top:792.3px;width:47px;height:1.4px;background:#4a86dc;"></div>
<div class="b" style="left:1251px;top:792.5px;width:45px;height:1px;background:#a8a8a8;"></div>
<div class="b" style="left:1246.5px;top:788.6px;width:8.5px;height:8.5px;background:#fff;border-radius:50%;border:1px solid #999;box-sizing:border-box;"></div>
<svg class="b" style="left:1299px;top:790px;" width="6" height="6" viewBox="0 0 6 6"><path d="M3 0V6M0 3H6" stroke="#b8b8b8" stroke-width="0.9"/></svg>
<svg class="b" style="left:1311px;top:789.5px;" width="7" height="7" viewBox="0 0 7 7"><path d="M0.5 0.5L6.5 6.5M6.5 0.5L0.5 6.5" stroke="#b0b0b0" stroke-width="0.8"/><path d="M0.3 2.5V0.3H2.5M4.5 0.3H6.7V2.5M6.7 4.5V6.7H4.5M2.5 6.7H0.3V4.5" stroke="#aaa" stroke-width="0.7" fill="none"/></svg>
</body></html>
